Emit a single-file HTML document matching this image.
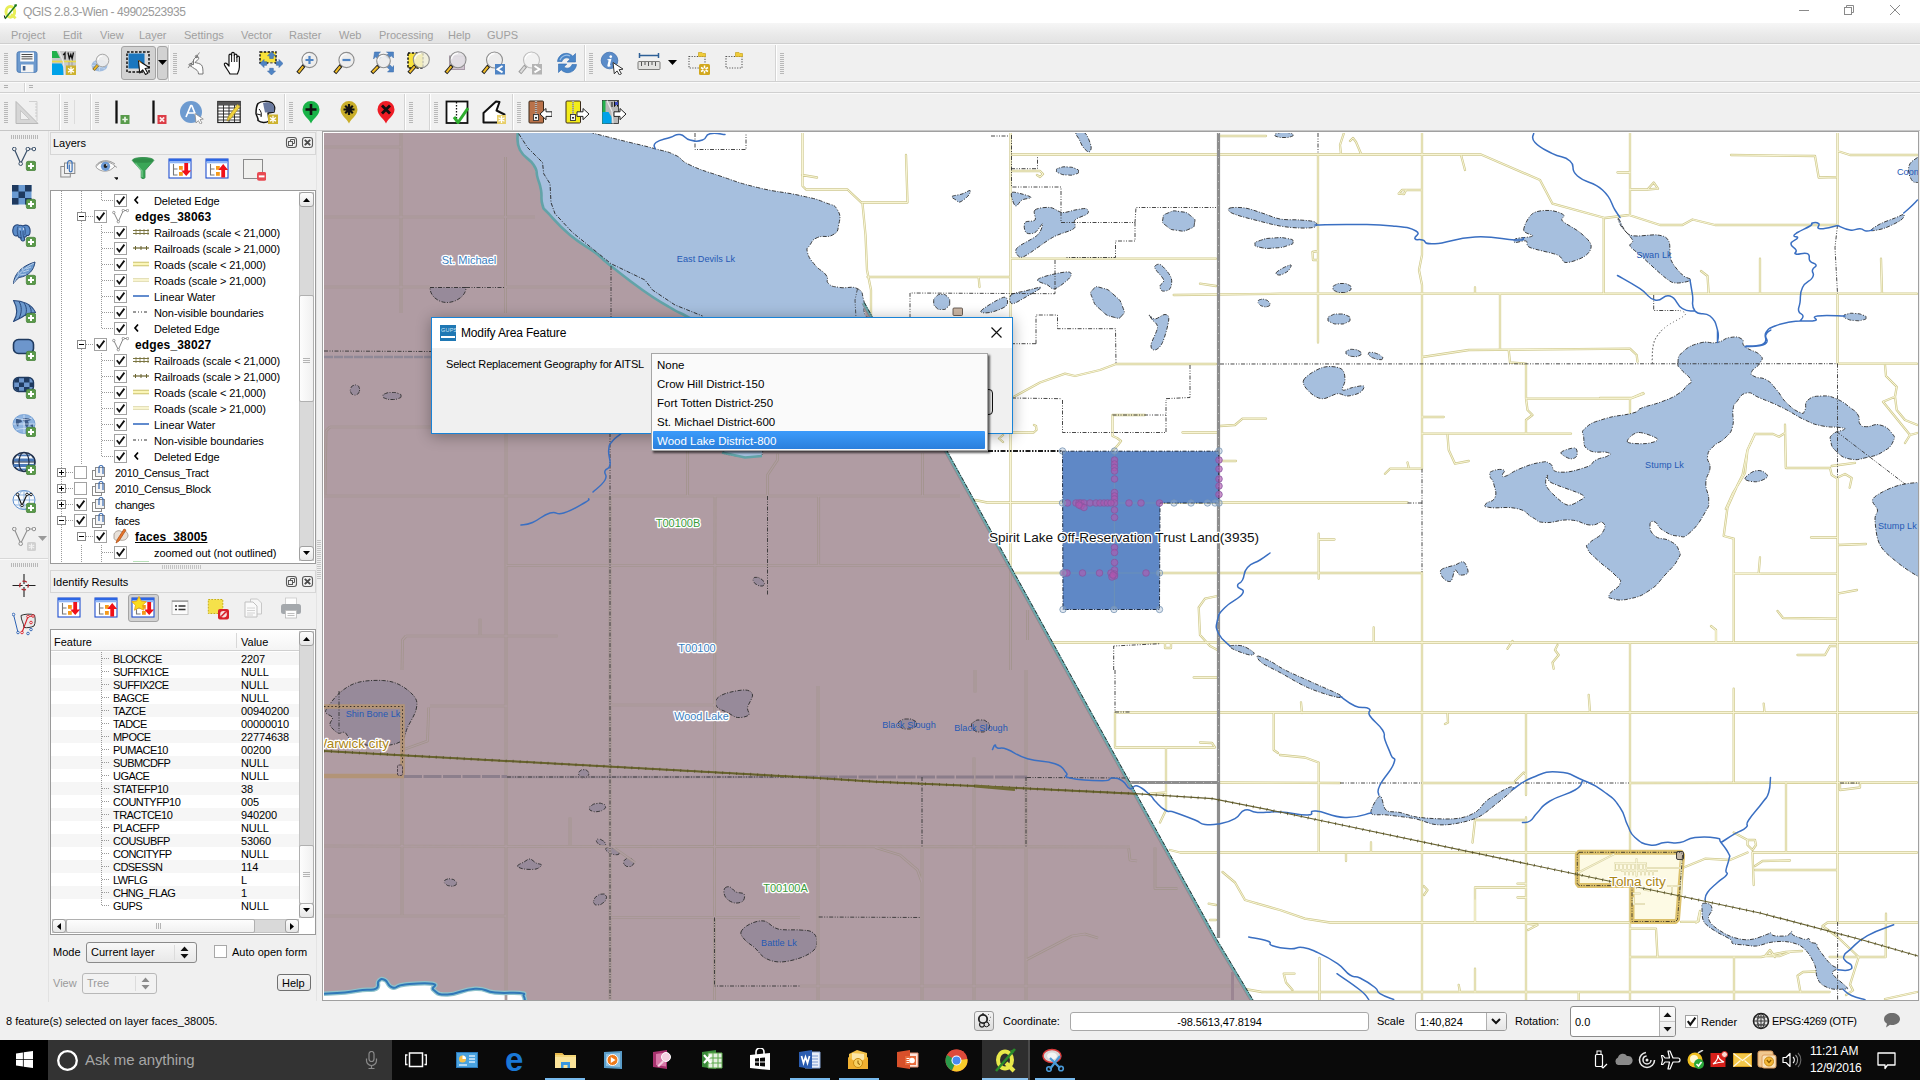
<!DOCTYPE html>
<html><head><meta charset="utf-8"><title>QGIS 2.8.3-Wien - 49902523935</title>
<style>
html,body{margin:0;padding:0;width:1920px;height:1080px;overflow:hidden;background:#f0f0f0;}
body{font-family:"Liberation Sans",sans-serif;font-size:11px;color:#000;position:relative;}
.abs{position:absolute;}
.t{position:absolute;white-space:nowrap;line-height:14px;}
#titlebar{left:0;top:0;width:1920px;height:23px;background:#fff;}
#menubar{left:0;top:23px;width:1920px;height:20px;background:linear-gradient(#f6f6f6,#e9e9e9 60%,#e3e3e3);border-bottom:1px solid #cfcfcf;}
#menubar span{position:absolute;top:5px;color:#a0a0a0;font-size:11px;line-height:14px;}
.hl{position:absolute;height:1px;}
.vl{position:absolute;width:1px;}
.grip{position:absolute;width:4px;background:repeating-linear-gradient(to bottom,#b8b8b8 0,#b8b8b8 1px,transparent 1px,transparent 2px);}
.ic{position:absolute;width:24px;height:24px;}
.ic svg{display:block;}
.pressed{position:absolute;background:#d2d2d2;border:1px solid #a4a4a4;border-radius:3px;box-sizing:border-box;}
.cb{position:absolute;width:13px;height:13px;box-sizing:border-box;border:1px solid #a2a2a2;background:#fff;}
.cb.on::after{content:"";position:absolute;left:1px;top:1px;width:9px;height:9px;background:
 linear-gradient(45deg,transparent 0,transparent 100%);}
.row{position:absolute;left:0;height:16px;white-space:nowrap;}
.sbtn{position:absolute;box-sizing:border-box;border:1px solid #a0a0a0;border-radius:3px;background:linear-gradient(#fdfdfd,#e6e6e6);}
#taskbar{left:0;top:1040px;width:1920px;height:40px;background:#0a0a0a;}
</style></head><body>

<div class="abs" id="titlebar"></div>
<div class="ic" style="left:3px;top:3px;width:16px;height:17px"><svg width="16" height="17" viewBox="0 0 24 24"><ellipse cx="11" cy="12.500" rx="6.500" ry="8" fill="none" stroke="#e8ee58" stroke-width="4.500"/><path d="M12 16l7 6" stroke="#e8ee58" stroke-width="4"/><path d="M3 23L20 2" stroke="#1e7a1e" stroke-width="2.200"/><path d="M21 1l-5 1 3.500 3.500z" fill="#1e7a1e"/><path d="M3 22l-1 -4" stroke="#111" stroke-width="1.500"/></svg></div>
<div class="t" style="left:23px;top:5px;font-size:12px;line-height:15px;color:#9a9a9a;letter-spacing:-0.45px">QGIS 2.8.3-Wien - 49902523935</div>
<svg class="abs" style="left:1780px;top:0" width="140" height="23"><g stroke="#8a8a8a" stroke-width="1" fill="none"><path d="M19 10.5h10"/><rect x="64.5" y="7.5" width="7" height="7"/><path d="M66.500 7.500v-2h7v7h-2"/><path d="M110 5l10 10M120 5l-10 10"/></g></svg>
<div class="abs" id="menubar">
<span style="left:11px">Project</span>
<span style="left:63px">Edit</span>
<span style="left:100px">View</span>
<span style="left:139px">Layer</span>
<span style="left:184px">Settings</span>
<span style="left:241px">Vector</span>
<span style="left:289px">Raster</span>
<span style="left:339px">Web</span>
<span style="left:379px">Processing</span>
<span style="left:448px">Help</span>
<span style="left:487px">GUPS</span>
</div>
<div class="hl" style="left:0;top:44px;width:1920px;background:#fbfbfb"></div>
<div class="hl" style="left:0;top:81px;width:1920px;background:#d0d0d0"></div>
<div class="hl" style="left:0;top:82px;width:1920px;background:#fafafa"></div>
<div class="grip" style="left:4px;top:53px;height:22px"></div>
<div class="ic" style="left:15px;top:51px;width:24px;height:24px"><svg width="24" height="24" viewBox="0 0 24 24"><rect x="2" y="0.800" width="20" height="20.500" rx="2" fill="#6d9ace" stroke="#4c7bb4" stroke-width="1"/><rect x="5.200" y="1.500" width="13.800" height="9" fill="#fbfbfb"/><path d="M6.500 3.500h11M6.500 5.700h11M6.500 7.900h11" stroke="#333" stroke-width="0.900"/><rect x="6" y="13.500" width="12.500" height="7.800" fill="#f4f4f4"/><rect x="7.800" y="15" width="2.600" height="4.500" fill="#3d5f90"/></svg></div>
<div class="ic" style="left:52px;top:51px;width:24px;height:24px"><svg width="24" height="24" viewBox="0 0 24 24"><rect x="0" y="0" width="24" height="24" fill="#c9c9c9"/><path d="M0 0h4.500L8 7H0z" fill="#22b14c"/><path d="M0 12.500h9.500l2 4v7.500H0z" fill="#00a2e8"/><path d="M0 10.500h24" stroke="#e8d84a" stroke-width="1.700"/><path d="M7 0l4.500 11 1 13" fill="none" stroke="#e8e8e8" stroke-width="1.200"/><path d="M13 8.500V2l-1.800 2M16 1.500l1.300 6 1.500-4 1.300 4 1.400-6" fill="none" stroke="#111" stroke-width="1.300"/><path d="M17 11v4M20 11v4" stroke="#888" stroke-width="0.700"/><rect x="14" y="14.500" width="10" height="9.500" fill="#cdb22e"/><path d="M19 15.800v7M16 17.500l6 3.600M22 17.500l-6 3.600" stroke="#fff" stroke-width="1.300"/></svg></div>
<div class="ic" style="left:89px;top:51px;width:24px;height:24px"><svg width="24" height="24" viewBox="0 0 24 24"><ellipse cx="10.500" cy="14.500" rx="8" ry="6" fill="#8db0dc" opacity="0.800"/><path d="M3 14.500h15M10.500 8.500v12M5 11c3 2 8 2 11 0M5 18c3-2 8-2 11 0" stroke="#c8dcf0" fill="none" stroke-width="0.800"/><path d="M9 14L4.500 19" stroke="#7a6a3a" stroke-width="3.200"/><path d="M8.600 14.400L5 18.500" stroke="#f0bc28" stroke-width="1.700"/><circle cx="13.500" cy="9.500" r="6.300" fill="#ededed" fill-opacity="0.920" stroke="#a8a8a8" stroke-width="1"/><path d="M9 9a4.500 4.500 0 0 1 4.500 -4" fill="none" stroke="#fff" stroke-width="1.200"/></svg></div>
<div class="pressed" style="left:121px;top:46px;width:35px;height:34px"></div>
<div class="pressed" style="left:157px;top:46px;width:11px;height:34px"></div>
<div class="ic" style="left:126px;top:51px;width:24px;height:24px"><svg width="24" height="24" viewBox="0 0 24 24"><rect x="1" y="1" width="22" height="20" fill="#d9d9d9" stroke="#111" stroke-width="1.500" stroke-dasharray="2.600 1.400"/><rect x="2.500" y="2.500" width="16" height="15" fill="#1a76be"/><path d="M12.500 9.500l1.200 12.500 3-3.200 2.800 4.700 2.300-1.300-2.700-4.700 4.400-0.700z" fill="#fff" stroke="#111" stroke-width="1.100" stroke-linejoin="round"/><path d="M12.500 9.500l3 2.500" stroke="#f0a030" stroke-width="1"/></svg></div>
<svg class="abs" style="left:158px;top:60px" width="9" height="5"><path d="M0 0h9l-4.500 5z" fill="#000"/></svg>
<div class="vl" style="left:168px;top:45px;height:36px;background:#d4d4d4"></div><div class="vl" style="left:169px;top:45px;height:36px;background:#fff"></div>
<div class="grip" style="left:173px;top:53px;height:22px"></div>
<div class="ic" style="left:185px;top:51px;width:24px;height:24px"><svg width="24" height="24" viewBox="0 0 24 24"><path d="M3 17L14.500 1.500" stroke="#7a7a7a" stroke-width="0.900"/><path d="M8.500 9c1-2 3-3.500 4.500-3 1.200 0.400 0.800 2-0.300 2.800L10 11.500c2 0.500 5 1 6.500 2.500 1.500 1.500 1.500 6 1.500 9h-4.500c0-2-1-3.500-2.500-4.500C9 17.500 6 15 4.500 14.500c-1-0.500-0.500-2 1-1.800l3 1z" fill="#fdfdfd" stroke="#6a6a6a" stroke-width="0.900" stroke-linejoin="round"/><circle cx="11.500" cy="5.500" r="1.200" fill="none" stroke="#555" stroke-width="0.700"/><circle cx="6" cy="13.500" r="1" fill="none" stroke="#555" stroke-width="0.700"/></svg></div>
<div class="ic" style="left:222px;top:51px;width:24px;height:24px"><svg width="24" height="24" viewBox="0 0 24 24"><path d="M8 23c-1.500-3-4-6-5.500-9-0.700-1.500 1-2.500 2.200-1.500L7 15V4.500c0-1.800 2.600-1.800 2.600 0V2.800c0-1.800 2.700-1.800 2.700 0v1.500c0-1.700 2.600-1.700 2.600 0v2c0-1.600 2.500-1.600 2.500 0V16c0 3-1 5-2 7z" fill="#fff" stroke="#111" stroke-width="1.200" stroke-linejoin="round"/><path d="M9.600 4.500V11M12.300 4V11M14.900 6V11" stroke="#111" stroke-width="1"/></svg></div>
<div class="ic" style="left:259px;top:51px;width:24px;height:24px"><svg width="24" height="24" viewBox="0 0 24 24"><rect x="1" y="1" width="16" height="11" fill="#f8e23a" stroke="#111" stroke-width="1.400" stroke-dasharray="2.400 1.400"/><path d="M12.500 0.800l4 4h-2.200v2.700h-3.600V4.800H8.500z M12.500 24l4-4h-2.200v-2.700h-3.600V20H8.500z M1 12.500l4-4v2.200h2.700v3.600H5v2.200z M24 12.500l-4-4v2.200h-2.700v3.600H20v2.200z" fill="#4f84c4" stroke="#3a6aa8" stroke-width="0.600"/><path d="M9 11.500h7v2H9z" fill="#f0f0f0" opacity="0.600"/></svg></div>
<div class="ic" style="left:296px;top:51px;width:24px;height:24px"><svg width="24" height="24" viewBox="0 0 24 24"><path d="M8.3 14.2L1.800 22" stroke="#1a1a1a" stroke-width="3.800" stroke-linecap="butt"/><path d="M7.2 15.3L2.500 21.300" stroke="#f0bc28" stroke-width="2.100"/><circle cx="13.5" cy="9" r="7.6" fill="#ececec" fill-opacity="0.85" stroke="#8e8e8e" stroke-width="1.100"/><path d="M7.4 8.5a6.1 6.1 0 0 1 6.1 -5.6" fill="none" stroke="#fff" stroke-width="1.300" opacity="0.900"/><path d="M13.500 5v8M9.500 9h8" stroke="#4f84c4" stroke-width="2.200"/></svg></div>
<div class="ic" style="left:333px;top:51px;width:24px;height:24px"><svg width="24" height="24" viewBox="0 0 24 24"><path d="M8.3 14.2L1.800 22" stroke="#1a1a1a" stroke-width="3.800" stroke-linecap="butt"/><path d="M7.2 15.3L2.500 21.300" stroke="#f0bc28" stroke-width="2.100"/><circle cx="13.5" cy="9" r="7.6" fill="#ececec" fill-opacity="0.85" stroke="#8e8e8e" stroke-width="1.100"/><path d="M7.4 8.5a6.1 6.1 0 0 1 6.1 -5.6" fill="none" stroke="#fff" stroke-width="1.300" opacity="0.900"/><path d="M9.500 9h8" stroke="#4f84c4" stroke-width="2.200"/></svg></div>
<div class="ic" style="left:370px;top:51px;width:24px;height:24px"><svg width="24" height="24" viewBox="0 0 24 24"><path d="M4.500 0.500h6L8.300 2.700l3 3-2.600 2.600-3-3L3.500 7.500z M23.500 0.500v6L21.300 4.300l-3 3-2.600-2.600 3-3L16.500 0.500z M23.500 20.500h-6l2.200-2.200-3-3 2.600-2.600 3 3 2.200-2.200z" fill="#4f84c4" stroke="#3a6aa8" stroke-width="0.500" transform="translate(0 0.500)"/><path d="M8.9 14.6L1.800 22" stroke="#1a1a1a" stroke-width="3.800" stroke-linecap="butt"/><path d="M7.8 15.7L2.500 21.300" stroke="#f0bc28" stroke-width="2.100"/><circle cx="13.5" cy="10" r="6.8" fill="#ececec" fill-opacity="0.85" stroke="#8e8e8e" stroke-width="1.100"/><path d="M8.2 9.5a5.3 5.3 0 0 1 5.3 -4.8" fill="none" stroke="#fff" stroke-width="1.300" opacity="0.900"/></svg></div>
<div class="ic" style="left:407px;top:51px;width:24px;height:24px"><svg width="24" height="24" viewBox="0 0 24 24"><rect x="1" y="2" width="15" height="15" fill="#f8e23a" stroke="#111" stroke-width="1.500" stroke-dasharray="2.400 1.400"/><path d="M8.8 14.3L1.800 22" stroke="#1a1a1a" stroke-width="3.800" stroke-linecap="butt"/><path d="M7.7 15.4L2.500 21.300" stroke="#f0bc28" stroke-width="2.100"/><circle cx="14.3" cy="8.8" r="8" fill="#f0efd8" fill-opacity="0.82" stroke="#8e8e8e" stroke-width="1.100"/><path d="M7.8 8.3a6.5 6.5 0 0 1 6.5 -6.0" fill="none" stroke="#fff" stroke-width="1.300" opacity="0.900"/></svg></div>
<div class="ic" style="left:444px;top:51px;width:24px;height:24px"><svg width="24" height="24" viewBox="0 0 24 24"><rect x="5.500" y="5" width="15" height="13.500" fill="#d0c4d0" stroke="#a89aa8" stroke-width="1"/><path d="M8.5 14.3L1.800 22" stroke="#1a1a1a" stroke-width="3.800" stroke-linecap="butt"/><path d="M7.4 15.4L2.500 21.300" stroke="#f0bc28" stroke-width="2.100"/><circle cx="14" cy="8.8" r="8" fill="#e4e2e6" fill-opacity="0.85" stroke="#8e8e8e" stroke-width="1.100"/><path d="M7.5 8.3a6.5 6.5 0 0 1 6.5 -6.0" fill="none" stroke="#fff" stroke-width="1.300" opacity="0.900"/></svg></div>
<div class="ic" style="left:481px;top:51px;width:24px;height:24px"><svg width="24" height="24" viewBox="0 0 24 24"><path d="M8.0 14.5L1.800 22" stroke="#1a1a1a" stroke-width="3.800" stroke-linecap="butt"/><path d="M6.9 15.6L2.500 21.300" stroke="#f0bc28" stroke-width="2.100"/><circle cx="13.5" cy="9" r="8" fill="#ececec" fill-opacity="0.85" stroke="#8e8e8e" stroke-width="1.100"/><path d="M7.0 8.5a6.5 6.5 0 0 1 6.5 -6.0" fill="none" stroke="#fff" stroke-width="1.300" opacity="0.900"/><rect x="14" y="13" width="10" height="10.500" fill="#4f84c4"/><path d="M21.500 15l-5 3.200 5 3.200" fill="none" stroke="#fff" stroke-width="1.900"/></svg></div>
<div class="ic" style="left:518px;top:51px;width:24px;height:24px"><svg width="24" height="24" viewBox="0 0 24 24"><path d="M8.0 14.5L1.800 22" stroke="#9a9a9a" stroke-width="3.800" stroke-linecap="butt"/><path d="M6.9 15.6L2.500 21.300" stroke="#dcdcdc" stroke-width="2.100"/><circle cx="13.5" cy="9" r="8" fill="#f2f2f2" fill-opacity="0.85" stroke="#bdbdbd" stroke-width="1.100"/><path d="M7.0 8.5a6.5 6.5 0 0 1 6.5 -6.0" fill="none" stroke="#fff" stroke-width="1.300" opacity="0.900"/><rect x="14" y="13" width="10" height="10.500" fill="#b4b4b4"/><path d="M16.500 15l5 3.200-5 3.200" fill="none" stroke="#fff" stroke-width="1.900"/></svg></div>
<div class="ic" style="left:555px;top:51px;width:24px;height:24px"><svg width="24" height="24" viewBox="0 0 24 24"><path d="M2.500 10.500C3 5 8 1.500 13 2.500c2 0.400 3.600 1.400 4.800 2.700L20.500 2.500V11h-8.300l2.800-2.900c-2.500-2.300-7-1.300-8 2.400z" fill="#4a86c8" stroke="#2f6aae" stroke-width="0.600"/><path d="M21.500 13.500C21 19 16 22.500 11 21.500c-2-0.400-3.600-1.400-4.800-2.700L3.500 21.500V13h8.300L9 15.900c2.500 2.300 7 1.300 8-2.400z" fill="#4a86c8" stroke="#2f6aae" stroke-width="0.600"/><path d="M5 9c1.500-4 6-6 10-4" fill="none" stroke="#9cc0e8" stroke-width="1.200"/></svg></div>
<div class="vl" style="left:584px;top:45px;height:36px;background:#d4d4d4"></div><div class="vl" style="left:585px;top:45px;height:36px;background:#fff"></div>
<div class="grip" style="left:589px;top:53px;height:22px"></div>
<div class="ic" style="left:600px;top:51px;width:24px;height:24px"><svg width="24" height="24" viewBox="0 0 24 24"><circle cx="9.500" cy="9.500" r="8.300" fill="#5b8cc9" stroke="#3f6fae" stroke-width="0.800"/><path d="M10.800 4.200a1.400 1.400 0 1 1-0.100 0zM7.500 8.200l4-0.500-1.600 6.300c-0.200 0.800 0.500 0.800 1.300 0.200l-0.200 0.900c-1.500 1-4 1.100-3.600-0.900l1.200-4.800-1.300-0.300z" fill="#fff"/><path d="M13 11.500l1.300 11.300 2.700-2.900 2.400 4 2-1.200-2.300-4 3.900-0.600z" fill="#fff" stroke="#333" stroke-width="1" stroke-linejoin="round"/></svg></div>
<div class="ic" style="left:637px;top:51px;width:24px;height:24px"><svg width="24" height="24" viewBox="0 0 24 24"><path d="M2.500 4.500h19M2.500 2v5M21.500 2v5" stroke="#2d5f96" stroke-width="1.500" fill="none"/><rect x="1" y="10.500" width="22" height="8" rx="1" fill="#e2e2e0" stroke="#7a7a78" stroke-width="1"/><path d="M4.500 11v4M8 11v3M11.500 11v4M15 11v3M18.500 11v4" stroke="#555" stroke-width="1"/></svg></div>
<div class="ic" style="left:688px;top:51px;width:24px;height:24px"><svg width="24" height="24" viewBox="0 0 24 24"><rect x="1" y="5.500" width="16" height="11.500" fill="none" stroke="#555" stroke-width="1.100" stroke-dasharray="1.200 1.400"/><path d="M10.500 5.500V1.500h3.500l1 1h2.500v3z" fill="#f0cc3a" stroke="#c8a41e" stroke-width="0.700"/><rect x="11" y="13" width="11" height="11" rx="1.500" fill="#d2a81e"/><path d="M16.500 14.500v8M13 16.500l7 4M20 16.500l-7 4" stroke="#fff" stroke-width="1.500"/><circle cx="16.500" cy="18.500" r="1.300" fill="#d2a81e"/></svg></div>
<div class="ic" style="left:725px;top:51px;width:24px;height:24px"><svg width="24" height="24" viewBox="0 0 24 24"><rect x="1" y="5.500" width="16" height="11.500" fill="none" stroke="#555" stroke-width="1.100" stroke-dasharray="1.200 1.400"/><path d="M10.500 5.500V1.500h3.500l1 1h2.500v3z" fill="#f0cc3a" stroke="#c8a41e" stroke-width="0.700"/></svg></div>
<svg class="abs" style="left:668px;top:60px" width="9" height="5"><path d="M0 0h9l-4.500 5z" fill="#000"/></svg>
<div class="vl" style="left:775px;top:45px;height:36px;background:#d4d4d4"></div><div class="vl" style="left:776px;top:45px;height:36px;background:#fff"></div>
<div class="grip" style="left:780px;top:53px;height:22px"></div>
<div class="hl" style="left:0;top:92px;width:1920px;background:#d0d0d0"></div>
<div class="hl" style="left:0;top:93px;width:1920px;background:#fafafa"></div>
<div class="vl" style="left:24px;top:83px;height:9px;background:#d4d4d4"></div><div class="vl" style="left:25px;top:83px;height:9px;background:#fff"></div>
<div class="hl" style="left:4px;top:85px;width:4px;background:#b0b0b0"></div><div class="hl" style="left:4px;top:87px;width:4px;background:#b0b0b0"></div>
<div class="hl" style="left:29px;top:85px;width:4px;background:#b0b0b0"></div><div class="hl" style="left:29px;top:87px;width:4px;background:#b0b0b0"></div>
<div class="hl" style="left:0;top:130px;width:1920px;background:#c6c6c6"></div>
<div class="grip" style="left:4px;top:102px;height:22px"></div>
<div class="ic" style="left:15px;top:100px;width:24px;height:24px"><svg width="24" height="24" viewBox="0 0 24 24"><path d="M1 23.500V1.500L23 23.500z" fill="#d6d6d6" stroke="#b8b8b8" stroke-width="1"/><path d="M5.500 19.500v-9l9 9z" fill="#f0f0f0" stroke="#c0c0c0" stroke-width="0.800"/><path d="M14 1.500h8V21" fill="none" stroke="#cfcfcf" stroke-width="1"/><path d="M20 4h2M20 7h2M20 10h2M20 13h2M20 16h2" stroke="#c4c4c4" stroke-width="0.800"/></svg></div>
<div class="vl" style="left:59px;top:94px;height:36px;background:#d4d4d4"></div><div class="vl" style="left:60px;top:94px;height:36px;background:#fff"></div>
<div class="grip" style="left:64px;top:102px;height:22px"></div>
<div class="vl" style="left:74px;top:100px;height:24px;background:#dcdcdc"></div>
<div class="vl" style="left:90px;top:94px;height:36px;background:#d4d4d4"></div><div class="vl" style="left:91px;top:94px;height:36px;background:#fff"></div>
<div class="grip" style="left:95px;top:102px;height:22px"></div>
<div class="ic" style="left:110px;top:100px;width:24px;height:24px"><svg width="24" height="24" viewBox="0 0 24 24"><path d="M6.500 0.500v23" stroke="#111" stroke-width="2.300"/><rect x="10.500" y="15" width="9" height="9" fill="#579a4a"/><path d="M15 16.800v5.400M12.300 19.500h5.400" stroke="#e8f4e4" stroke-width="1.700"/></svg></div>
<div class="ic" style="left:147px;top:100px;width:24px;height:24px"><svg width="24" height="24" viewBox="0 0 24 24"><path d="M6.500 0.500v23" stroke="#111" stroke-width="2.300"/><rect x="10.500" y="15" width="9" height="9" fill="#dc3c46"/><path d="M12.800 17.300l4.400 4.400M17.200 17.300l-4.400 4.400" stroke="#fbe8e8" stroke-width="1.700"/></svg></div>
<div class="ic" style="left:180px;top:100px;width:24px;height:24px"><svg width="24" height="24" viewBox="0 0 24 24"><circle cx="11" cy="12" r="11" fill="#6e9bd0"/><path d="M6 17L10.800 5.500h1L16.500 17M7.800 13h7" fill="none" stroke="#fff" stroke-width="1.700" stroke-linejoin="round"/><path d="M15 13.500l1 9.500 2.300-2.400 2 3.400 1.700-1-2-3.400 3.300-0.500z" fill="#fff" stroke="#8a8a8a" stroke-width="0.800" stroke-linejoin="round"/></svg></div>
<div class="ic" style="left:217px;top:100px;width:24px;height:24px"><svg width="24" height="24" viewBox="0 0 24 24"><rect x="0.800" y="1.500" width="22.400" height="21" fill="#fff" stroke="#222" stroke-width="1.200"/><path d="M0.800 5h22.400M0.800 8h22.400M0.800 11h22.400M0.800 14h22.400M0.800 17h22.400M0.800 20h22.400M6.500 1.500v21M12 1.500v21M17.500 1.500v21" stroke="#222" stroke-width="0.900"/><path d="M0.800 1.500h22.400V5H0.800z" fill="#555"/><path d="M20.500 4.500l2.500 2-9.500 12.500-3.500 2 1-4z" fill="#f0d23c" stroke="#a8902a" stroke-width="0.700"/><path d="M11 17l2.500 2" stroke="#a8902a" stroke-width="0.700"/></svg></div>
<div class="ic" style="left:254px;top:100px;width:24px;height:24px"><svg width="24" height="24" viewBox="0 0 24 24"><path d="M4 3.500c3-2.500 10-3 14-0.500 2.500 2 3 6 2 9l-6 1 1 8c-3 2-8 2-11-0.500 0.500-3-1.500-4-2-7 0-3 0-7 2-10z" fill="#fff" stroke="#111" stroke-width="1.500" stroke-linejoin="round"/><path d="M9 3c4-1.500 8-0.500 10 1.500 1.500 2 1.500 5 1 7.500l-9 0.500z" fill="#6a7aa0"/><path d="M5 9c2 2 3 5 2 8M3 14l4 1" fill="none" stroke="#111" stroke-width="1"/><rect x="14" y="14.500" width="10" height="9.500" fill="#cdb22e"/><path d="M19 15.800v7M16 17.500l6 3.600M22 17.500l-6 3.600" stroke="#fff" stroke-width="1.300"/></svg></div>
<div class="vl" style="left:284px;top:94px;height:36px;background:#d4d4d4"></div><div class="vl" style="left:285px;top:94px;height:36px;background:#fff"></div>
<div class="grip" style="left:289px;top:102px;height:22px"></div>
<div class="ic" style="left:299px;top:100px;width:24px;height:24px"><svg width="24" height="24" viewBox="0 0 24 24"><path d="M12 23.500C10 18.500 3.500 15.500 3.500 9.500a8.500 8.500 0 0 1 17 0c0 6-6.500 9-8.500 14z" fill="#19b348"/><path d="M12 4v11M6.500 9.500h11" stroke="#111" stroke-width="2.600"/></svg></div>
<div class="ic" style="left:337px;top:100px;width:24px;height:24px"><svg width="24" height="24" viewBox="0 0 24 24"><path d="M12 23.500C10 18.500 3.500 15.500 3.500 9.500a8.500 8.500 0 0 1 17 0c0 6-6.500 9-8.500 14z" fill="#c9ae2a"/><path d="M12 4v11M6.500 9.500h11M8.200 5.700l7.600 7.600M15.800 5.700l-7.600 7.600" stroke="#111" stroke-width="2.200"/></svg></div>
<div class="ic" style="left:374px;top:100px;width:24px;height:24px"><svg width="24" height="24" viewBox="0 0 24 24"><path d="M12 23.500C10 18.500 3.500 15.500 3.500 9.500a8.500 8.500 0 0 1 17 0c0 6-6.500 9-8.500 14z" fill="#ee1c25"/><path d="M8 5.500l8 8M16 5.500l-8 8" stroke="#111" stroke-width="2.800"/></svg></div>
<div class="vl" style="left:404px;top:94px;height:36px;background:#d4d4d4"></div><div class="vl" style="left:405px;top:94px;height:36px;background:#fff"></div>
<div class="grip" style="left:409px;top:102px;height:22px"></div>
<div class="vl" style="left:429px;top:94px;height:36px;background:#d4d4d4"></div><div class="vl" style="left:430px;top:94px;height:36px;background:#fff"></div>
<div class="grip" style="left:434px;top:102px;height:22px"></div>
<div class="ic" style="left:445px;top:100px;width:24px;height:24px"><svg width="24" height="24" viewBox="0 0 24 24"><rect x="1.500" y="1.500" width="21" height="21.500" fill="#fff" stroke="#111" stroke-width="1.800"/><path d="M11.500 2v21" stroke="#111" stroke-width="1.300" stroke-dasharray="1.500 1.500"/><path d="M9 17l4 5.500L23 8" fill="none" stroke="#2fae2f" stroke-width="3"/></svg></div>
<div class="ic" style="left:482px;top:100px;width:24px;height:24px"><svg width="24" height="24" viewBox="0 0 24 24"><path d="M1.500 22.500V13L14 1.500l3.500 0.500-3 8.500 8 4v8z" fill="#fff" stroke="#111" stroke-width="2" stroke-linejoin="round"/><rect x="15" y="15" width="9" height="9" fill="#e8cf6a"/><path d="M19.500 16v7M16.500 17.700l6 3.600M22.500 17.700l-6 3.600" stroke="#fff" stroke-width="1.300"/></svg></div>
<div class="vl" style="left:512px;top:94px;height:36px;background:#d4d4d4"></div><div class="vl" style="left:513px;top:94px;height:36px;background:#fff"></div>
<div class="grip" style="left:517px;top:102px;height:22px"></div>
<div class="ic" style="left:528px;top:100px;width:24px;height:24px"><svg width="24" height="24" viewBox="0 0 24 24"><rect x="1" y="1" width="14.500" height="22" rx="1" fill="#b9724a" stroke="#3a2a1a" stroke-width="1"/><path d="M8 1v14" stroke="#e8e8e8" stroke-width="2.200" stroke-dasharray="1 1"/><path d="M8 1v14" stroke="#555" stroke-width="0.700"/><rect x="5.500" y="14.500" width="5" height="6" fill="#f4f4f4" stroke="#333" stroke-width="0.900"/><rect x="7" y="17" width="2" height="1.600" fill="#333"/><path d="M12 14l6-5.500v3.300h6v4.600h-6v3.300z" fill="#fff" stroke="#222" stroke-width="1"/></svg></div>
<div class="ic" style="left:565px;top:100px;width:24px;height:24px"><svg width="24" height="24" viewBox="0 0 24 24"><rect x="1" y="1" width="14.500" height="22" rx="1" fill="#f3ec1a" stroke="#3a2a1a" stroke-width="1"/><path d="M8 1v14" stroke="#e8e8e8" stroke-width="2.200" stroke-dasharray="1 1"/><path d="M8 1v14" stroke="#555" stroke-width="0.700"/><rect x="5.500" y="14.500" width="5" height="6" fill="#f4f4f4" stroke="#333" stroke-width="0.900"/><rect x="7" y="17" width="2" height="1.600" fill="#333"/><path d="M24 14l-6-5.500v3.300h-6v4.600h6v3.300z" fill="#fff" stroke="#222" stroke-width="1"/></svg></div>
<div class="ic" style="left:602px;top:100px;width:24px;height:24px"><svg width="24" height="24" viewBox="0 0 24 24"><rect x="0.500" y="0.500" width="16" height="23" fill="#b8b8b8" stroke="#222" stroke-width="0.800"/><path d="M0.500 0.500h3v23h-3z" fill="#22b14c"/><path d="M0.500 12h6l3 5v6.500h-9z" fill="#00a2e8"/><path d="M5 0.500l5 11 1 12" fill="none" stroke="#e8e8e8" stroke-width="1.200"/><path d="M10 7V2M12.500 1.500v5l3-5v5" stroke="#111" stroke-width="1" fill="none"/><rect x="13" y="2" width="3" height="3" fill="#3a4ac0"/><path d="M24 14l-6-5.500v3.300h-6v4.600h6v3.300z" fill="#fff" stroke="#222" stroke-width="1"/></svg></div>

<div class="abs" style="left:11px;top:135px;width:27px;height:4px;background:repeating-linear-gradient(to right,#b8b8b8 0,#b8b8b8 1px,transparent 1px,transparent 2px)"></div>
<div class="ic" style="left:12px;top:147px;width:24px;height:24px"><svg width="24" height="24" viewBox="0 0 24 24"><path d="M2.300 2l6.400 14.500L15.800 2h6" fill="none" stroke="#3a506a" stroke-width="1.200"/><g fill="#f4f4f4" stroke="#3a506a" stroke-width="1"><circle cx="2.300" cy="2" r="1.800"/><circle cx="15.800" cy="2" r="1.800"/><circle cx="21.900" cy="2" r="1.800"/><circle cx="8.700" cy="16.700" r="1.800"/></g><rect x="14.300" y="14.300" width="9.400" height="9.400" rx="1.800" fill="#5a9a4a" stroke="#447c38" stroke-width="0.700"/><path d="M19 16v6M16 19h6" stroke="#fff" stroke-width="2"/></svg></div>
<div class="ic" style="left:12px;top:185px;width:24px;height:24px"><svg width="24" height="24" viewBox="0 0 24 24"><rect x="0" y="0" width="19.500" height="19.500" fill="#6b9bd2"/><path d="M0 0h6.500v6.500H0zM13 0h6.500v6.500H13zM6.500 6.500H13V13H6.500zM0 13h6.500v6.500H0zM13 13h6.500v6.500H13z" fill="#1f3a5f"/><rect x="14.300" y="14.300" width="9.400" height="9.400" rx="1.800" fill="#5a9a4a" stroke="#447c38" stroke-width="0.700"/><path d="M19 16v6M16 19h6" stroke="#fff" stroke-width="2"/></svg></div>
<div class="ic" style="left:12px;top:223px;width:24px;height:24px"><svg width="24" height="24" viewBox="0 0 24 24"><path d="M3 2.500c-2.500 1.500-3 7-1 9.500 1 1.300 2.500 1.200 3.300 0.300L6 13c0.500 1.500 1.500 2 2.500 1.500l0.500 2c0.300 1.700 2.800 2 3.500 0.500 0.500-1-0.500-1.500-0.500-3 1.500 0.500 2.500-0.500 2.800-1.800 1.200 0.800 2.500 0 3-1.700 0.800-3 0-7-2.300-8-2-1-3.500 0-4.500 0.500C9.500 2 8.500 2 7.500 2.500 6 1.500 4.500 1.500 3 2.500z" fill="#5b8cc9" stroke="#27477a" stroke-width="1.100" stroke-linejoin="round"/><path d="M6 3.500c-1 2.500-1 6 0 8.500M12.500 4c1 2.500 1 6 0.300 8M8.500 8c0 3 0.500 5 1 7.500M11 8c0 2 0 4 0.500 6" fill="none" stroke="#27477a" stroke-width="0.800"/><circle cx="8" cy="6" r="0.700" fill="#fff"/><circle cx="11.500" cy="6" r="0.700" fill="#fff"/><rect x="14.300" y="14.300" width="9.400" height="9.400" rx="1.800" fill="#5a9a4a" stroke="#447c38" stroke-width="0.700"/><path d="M19 16v6M16 19h6" stroke="#fff" stroke-width="2"/></svg></div>
<div class="ic" style="left:12px;top:261px;width:24px;height:24px"><svg width="24" height="24" viewBox="0 0 24 24"><path d="M1.500 22.500C2 15 7 6 23 1c-1 8-6 14-16 15.500C5 18 3 20.500 1.500 22.500z" fill="#6d9ace" stroke="#27477a" stroke-width="1" stroke-linejoin="round"/><path d="M2 22C5 14 12 7 22 2M8 14l6-1M11 11l6-2M14 8l5-2M6 13l1-4M10 9l1-3" fill="none" stroke="#d8e6f6" stroke-width="0.700"/><rect x="14.300" y="14.300" width="9.400" height="9.400" rx="1.800" fill="#5a9a4a" stroke="#447c38" stroke-width="0.700"/><path d="M19 16v6M16 19h6" stroke="#fff" stroke-width="2"/></svg></div>
<div class="ic" style="left:12px;top:299px;width:24px;height:24px"><svg width="24" height="24" viewBox="0 0 24 24"><path d="M1.500 1.500c8 0 18 3 22 12-5 0-10 2-14 5l-8 4c4-6 4-14 0-21z" fill="#6d9ace" stroke="#27477a" stroke-width="1.100" stroke-linejoin="round"/><path d="M7 2.500c3 5 3 11 0 17M12 4c3 4 3 9 1 13M17 6.500c2 2.500 2.500 5.500 2 8" fill="none" stroke="#27477a" stroke-width="1"/><rect x="14.300" y="14.300" width="9.400" height="9.400" rx="1.800" fill="#5a9a4a" stroke="#447c38" stroke-width="0.700"/><path d="M19 16v6M16 19h6" stroke="#fff" stroke-width="2"/></svg></div>
<div class="ic" style="left:12px;top:337px;width:24px;height:24px"><svg width="24" height="24" viewBox="0 0 24 24"><rect x="1.500" y="2.500" width="20" height="14" rx="5" fill="#6d96cc" stroke="#1f3a5f" stroke-width="1.600"/><rect x="14.300" y="14.300" width="9.400" height="9.400" rx="1.800" fill="#5a9a4a" stroke="#447c38" stroke-width="0.700"/><path d="M19 16v6M16 19h6" stroke="#fff" stroke-width="2"/></svg></div>
<div class="ic" style="left:12px;top:375px;width:24px;height:24px"><svg width="24" height="24" viewBox="0 0 24 24"><rect x="1.500" y="2.500" width="20" height="14" rx="5" fill="#6d96cc" stroke="#1f3a5f" stroke-width="1.400"/><path d="M2.500 5.500c1-2 2.500-2.500 4.500-2.500v4.500H2.300zM12 3h5.500v4.500H12zM7 7.500h5V12H7zM17.500 7.500h3.700V12h-3.700zM2.500 12H7v4c-2 0-4-1.500-4.500-4zM12 12h5.500v4H12z" fill="#1f3a5f"/><rect x="14.300" y="14.300" width="9.400" height="9.400" rx="1.800" fill="#5a9a4a" stroke="#447c38" stroke-width="0.700"/><path d="M19 16v6M16 19h6" stroke="#fff" stroke-width="2"/></svg></div>
<div class="ic" style="left:12px;top:413px;width:24px;height:24px"><svg width="24" height="24" viewBox="0 0 24 24"><ellipse cx="12" cy="11" rx="11" ry="9.500" fill="#8fb4e0"/><ellipse cx="12" cy="11" rx="11" ry="9.500" fill="none" stroke="#6a98d0" stroke-width="0.800"/><path d="M4 6h5l1 3-3 1-1 4-2-3zM11 5h6l2 2-3 1 1 3-2 4-2-3v-3l-2-1zM18 12l3-1v4z" fill="#2d4a78" opacity="0.850"/><path d="M1 11h22M12 1.500v19M4 5c5 2 11 2 16 0M4 17c5-2 11-2 16 0" fill="none" stroke="#dce8f6" stroke-width="0.700"/><rect x="14.300" y="14.300" width="9.400" height="9.400" rx="1.800" fill="#5a9a4a" stroke="#447c38" stroke-width="0.700"/><path d="M19 16v6M16 19h6" stroke="#fff" stroke-width="2"/></svg></div>
<div class="ic" style="left:12px;top:451px;width:24px;height:24px"><svg width="24" height="24" viewBox="0 0 24 24"><ellipse cx="12" cy="11" rx="11" ry="9.500" fill="#f4f8fc" stroke="#1f2f4a" stroke-width="1.600"/><path d="M2 7.500h20v3H2zM1.500 13h21v3h-21zM6 3.500h12v1.800H6zM6 17.500h12v1.800H6z" fill="#4c7ab8"/><ellipse cx="12" cy="11" rx="5" ry="9.500" fill="none" stroke="#1f2f4a" stroke-width="1.200"/><path d="M1 11h22" stroke="#1f2f4a" stroke-width="1"/><rect x="14.300" y="14.300" width="9.400" height="9.400" rx="1.800" fill="#5a9a4a" stroke="#447c38" stroke-width="0.700"/><path d="M19 16v6M16 19h6" stroke="#fff" stroke-width="2"/></svg></div>
<div class="ic" style="left:12px;top:489px;width:24px;height:24px"><svg width="24" height="24" viewBox="0 0 24 24"><ellipse cx="12" cy="11" rx="11" ry="9.500" fill="#f8fbfe" stroke="#5a8ccc" stroke-width="1"/><path d="M1 11h22M3 6h18M3 16h18M12 1.500v19" stroke="#7aa4d8" stroke-width="0.800"/><ellipse cx="12" cy="11" rx="5.500" ry="9.500" fill="none" stroke="#7aa4d8" stroke-width="0.800"/><path d="M5.500 5.500l4.500 11 5-11h4" fill="none" stroke="#111" stroke-width="1.100"/><g fill="#fff" stroke="#111" stroke-width="0.900"><circle cx="5.500" cy="5.500" r="1.300"/><circle cx="15" cy="5.500" r="1.300"/><circle cx="19" cy="5.500" r="1.300"/><circle cx="10" cy="16.500" r="1.300"/></g><rect x="14.300" y="14.300" width="9.400" height="9.400" rx="1.800" fill="#5a9a4a" stroke="#447c38" stroke-width="0.700"/><path d="M19 16v6M16 19h6" stroke="#fff" stroke-width="2"/></svg></div>
<div class="ic" style="left:12px;top:527px;width:24px;height:24px"><svg width="24" height="24" viewBox="0 0 24 24"><path d="M2.300 2l6.400 14.500L15.800 2h6" fill="none" stroke="#8e8e8e" stroke-width="1.100"/><g fill="#f4f4f4" stroke="#8e8e8e" stroke-width="1"><circle cx="2.300" cy="2" r="1.800"/><circle cx="15.800" cy="2" r="1.800"/><circle cx="21.900" cy="2" r="1.800"/><circle cx="8.700" cy="16.700" r="1.800"/></g><rect x="15" y="15" width="9" height="9" rx="1.500" fill="#d0d0d0"/><path d="M19.500 16.500v6M16.800 18l5.400 3M22.200 18l-5.400 3" stroke="#f2f2f2" stroke-width="1.100"/></svg></div>
<svg class="abs" style="left:38px;top:536px" width="9" height="5"><path d="M0 0h9l-4.500 5z" fill="#9a9a9a"/></svg>
<div class="abs" style="left:11px;top:563px;width:27px;height:4px;background:repeating-linear-gradient(to right,#b8b8b8 0,#b8b8b8 1px,transparent 1px,transparent 2px)"></div>
<div class="hl" style="left:0;top:558px;width:48px;background:#d8d8d8"></div><div class="hl" style="left:0;top:559px;width:48px;background:#fafafa"></div>
<div class="vl" style="left:48px;top:131px;height:871px;background:#e2e2e2"></div>
<div class="ic" style="left:12px;top:574px;width:24px;height:24px"><svg width="24" height="24" viewBox="0 0 24 24"><path d="M12 0v10M12 13v10M0.500 11.500h10M13.500 11.500h10" stroke="#222" stroke-width="1.100"/><circle cx="12" cy="11.500" r="4.300" fill="none" stroke="#b0282e" stroke-width="1.300" stroke-dasharray="4.500 2.300" stroke-dashoffset="2.200"/></svg></div>
<div class="ic" style="left:12px;top:612px;width:24px;height:24px"><svg width="24" height="24" viewBox="0 0 24 24"><path d="M9 3.500c3-1.500 10-2 13.500-0.500 1 4 1 8-0.500 11-3 1.500-7 2-10 1.500 0-4-3-7-3-12z" fill="#e8e8e8" stroke="#333" stroke-width="1"/><path d="M1.500 2.500L6 20.500" stroke="#2c62b4" stroke-width="1"/><path d="M10 20.500L16 4.500l5-0.500" fill="none" stroke="#d81e28" stroke-width="1.100"/><g fill="#f4f4f4" stroke-width="0.900"><circle cx="1.500" cy="2.500" r="1.300" stroke="#2c62b4"/><circle cx="6" cy="20.500" r="1.300" stroke="#2c62b4"/><circle cx="16" cy="21.500" r="1.300" stroke="#2c62b4"/><circle cx="19" cy="17.500" r="1.300" stroke="#2c62b4"/><circle cx="10" cy="20.500" r="1.300" stroke="#d81e28"/><circle cx="16" cy="4.500" r="1.300" stroke="#d81e28"/><circle cx="21" cy="4" r="1.300" stroke="#d81e28"/><circle cx="19" cy="10.500" r="1.300" stroke="#d81e28"/></g></svg></div>
<div class="abs" style="left:50px;top:132px;width:266px;height:23px;box-sizing:border-box;border:1px solid #d6d6d6;background:#f1f1f1"></div>
<div class="t" style="left:53px;top:136px">Layers</div>
<svg class="abs" style="left:285px;top:136px" width="30" height="13"><g fill="none" stroke="#5a5a5a" stroke-width="1.100"><rect x="1.500" y="1.500" width="10" height="10" rx="2.500"/><rect x="17.500" y="1.500" width="10" height="10" rx="2.500"/></g><g fill="none" stroke="#5a5a5a" stroke-width="1"><rect x="3.500" y="5.500" width="4" height="4"/><path d="M5.500 5.500v-2h4v4h-2"/></g><path d="M19.800 3.800l5.400 5.400M25.200 3.800l-5.400 5.400" stroke="#4a4a4a" stroke-width="1.900" fill="none"/></svg>
<div class="ic" style="left:56px;top:157px;width:24px;height:24px"><svg width="24" height="24" viewBox="0 0 24 24"><rect x="4.800" y="9.500" width="9.500" height="10.500" fill="none" stroke="#8a8a8a" stroke-width="1"/><rect x="8.500" y="6" width="10.300" height="10.500" fill="#f2f2f2" stroke="#8a8a8a" stroke-width="1"/><path d="M11.500 12V6a2.300 2.300 0 0 1 4.600 0v7.500a1.400 1.400 0 0 1-2.800 0V7.500" fill="none" stroke="#3d72b8" stroke-width="1.200"/></svg></div>
<div class="ic" style="left:94px;top:157px;width:24px;height:24px"><svg width="24" height="24" viewBox="0 0 24 24"><path d="M1.800 10C6 3.500 15 3 21 9c-5 6.500-14 7-19.200 1z" fill="#fbfbfb" stroke="#8a8a8a" stroke-width="0.800"/><path d="M2 8.500C6 3 14 2 21 7" fill="none" stroke="#8a8a8a" stroke-width="0.900"/><circle cx="11.500" cy="9.300" r="4.600" fill="#6d9ad4"/><circle cx="11.500" cy="9" r="1.900" fill="#222"/><circle cx="12.600" cy="8" r="0.800" fill="#fff"/><path d="M21 9l2 1.500" stroke="#8a8a8a" stroke-width="0.800"/><path d="M20 20.300h5.400L22.700 23z" fill="#111"/></svg></div>
<div class="ic" style="left:131px;top:157px;width:24px;height:24px"><svg width="24" height="24" viewBox="0 0 24 24"><path d="M1.300 3.500c0-4 21.500-4 21.500 0L14 13.500v7c0 1.500-3.800 1.500-3.800 0v-7z" fill="#3aa657" stroke="#2a8442" stroke-width="0.800"/><ellipse cx="12" cy="3.500" rx="10.200" ry="2.300" fill="#2f8e48"/><path d="M4.500 6.500l6.500 7.500v6" fill="none" stroke="#7fd096" stroke-width="1.400" opacity="0.800"/></svg></div>
<div class="ic" style="left:168px;top:157px;width:24px;height:24px"><svg width="24" height="24" viewBox="0 0 24 24"><rect x="1" y="2" width="22" height="19" fill="#fff" stroke="#1f4fd0" stroke-width="1.100"/><path d="M1 2h22v2.500H1z" fill="#2c66e4"/><path d="M1.500 4.500h21v1.800h-21z" fill="#8fb6f6"/><path d="M5.500 7v11h4M5.500 12h4" fill="none" stroke="#777" stroke-width="1.100"/><rect x="11" y="9" width="3.800" height="3.800" fill="#f59a1a"/><rect x="11" y="15" width="3.800" height="3.800" fill="#f59a1a"/><path d="M16.300 6h3.800v7.500h3l-4.900 5.500-4.900-5.500h3z" fill="#f01018"/></svg></div>
<div class="ic" style="left:205px;top:157px;width:24px;height:24px"><svg width="24" height="24" viewBox="0 0 24 24"><rect x="1" y="2" width="22" height="19" fill="#fff" stroke="#1f4fd0" stroke-width="1.100"/><path d="M1 2h22v2.500H1z" fill="#2c66e4"/><path d="M1.500 4.500h21v1.800h-21z" fill="#8fb6f6"/><path d="M5.500 7v11h4M5.500 12h4" fill="none" stroke="#777" stroke-width="1.100"/><rect x="11" y="9" width="3.800" height="3.800" fill="#f59a1a"/><rect x="11" y="15" width="3.800" height="3.800" fill="#f59a1a"/><path d="M16.300 20.500h3.800V13h3l-4.900-6-4.900 6h3z" fill="#f01018"/></svg></div>
<div class="ic" style="left:242px;top:157px;width:24px;height:24px"><svg width="24" height="24" viewBox="0 0 24 24"><rect x="1.500" y="2.500" width="19" height="19" fill="#f0f0ee" stroke="#8a8a8a" stroke-width="1"/><rect x="15" y="15" width="9.300" height="8.800" rx="2" fill="#e84a52"/><path d="M16.800 19.400h5.700" stroke="#fff" stroke-width="2"/></svg></div>
<div class="abs" style="left:50px;top:190px;width:266px;height:374px;box-sizing:border-box;border:1px solid #9a9a9a;background:#fff;overflow:hidden" id="ltree">
<div class="abs" style="left:10px;top:0px;width:1px;height:338px;background:repeating-linear-gradient(to bottom,#9a9a9a 0,#9a9a9a 1px,transparent 1px,transparent 2px)"></div><div class="abs" style="left:30px;top:0px;width:1px;height:274px;background:repeating-linear-gradient(to bottom,#9a9a9a 0,#9a9a9a 1px,transparent 1px,transparent 2px)"></div><div class="abs" style="left:50px;top:0px;width:1px;height:10px;background:repeating-linear-gradient(to bottom,#9a9a9a 0,#9a9a9a 1px,transparent 1px,transparent 2px)"></div><div class="abs" style="left:50px;top:34px;width:1px;height:104px;background:repeating-linear-gradient(to bottom,#9a9a9a 0,#9a9a9a 1px,transparent 1px,transparent 2px)"></div><div class="abs" style="left:50px;top:162px;width:1px;height:104px;background:repeating-linear-gradient(to bottom,#9a9a9a 0,#9a9a9a 1px,transparent 1px,transparent 2px)"></div><div class="abs" style="left:30px;top:354px;width:1px;height:18px;background:repeating-linear-gradient(to bottom,#9a9a9a 0,#9a9a9a 1px,transparent 1px,transparent 2px)"></div><div class="abs" style="left:50px;top:354px;width:1px;height:18px;background:repeating-linear-gradient(to bottom,#9a9a9a 0,#9a9a9a 1px,transparent 1px,transparent 2px)"></div><div class="abs" style="left:10px;top:338px;width:1px;height:34px;background:repeating-linear-gradient(to bottom,#9a9a9a 0,#9a9a9a 1px,transparent 1px,transparent 2px)"></div><div class="abs" style="left:51px;top:9px;height:1px;width:11px;background:repeating-linear-gradient(to right,#9a9a9a 0,#9a9a9a 1px,transparent 1px,transparent 2px)"></div><div class="cb" style="left:63px;top:3px"><svg width="11" height="11" viewBox="0 0 11 11" style="position:absolute;left:0;top:0"><path d="M1.800 5.200L4.300 8.600 9.400 1.600" fill="none" stroke="#111" stroke-width="1.800" stroke-linejoin="miter"/></svg></div><svg class="abs" style="left:82px;top:1px" width="16" height="16"><path d="M5 4.500L2 8l3 3.500" fill="none" stroke="#000" stroke-width="1.700"/></svg><div class="t" style="left:103px;top:3px;letter-spacing:-0.1px">Deleted Edge</div><div class="abs" style="left:31px;top:25px;height:1px;width:12px;background:repeating-linear-gradient(to right,#9a9a9a 0,#9a9a9a 1px,transparent 1px,transparent 2px)"></div><svg class="abs" style="left:26px;top:21px" width="9" height="9"><rect x="0.500" y="0.500" width="8" height="8" fill="#fff" stroke="#8a8a8a"/><path d="M2 4.500h5" stroke="#000" fill="none"/></svg><div class="cb" style="left:43px;top:19px"><svg width="11" height="11" viewBox="0 0 11 11" style="position:absolute;left:0;top:0"><path d="M1.800 5.200L4.300 8.600 9.400 1.600" fill="none" stroke="#111" stroke-width="1.800" stroke-linejoin="miter"/></svg></div><svg class="abs" style="left:61px;top:18px" width="17" height="16"><path d="M1.800 3.500L6.300 12.700 11.300 1.500h4.200" fill="none" stroke="#777" stroke-width="0.900"/><g fill="#fff" stroke="#777" stroke-width="0.700"><circle cx="1.800" cy="3.500" r="1.200"/><circle cx="6.300" cy="12.700" r="1.200"/><circle cx="11.300" cy="1.500" r="1.200"/><circle cx="15.500" cy="1.500" r="1.200"/></g></svg><div class="t" style="left:84px;top:19px;font-weight:bold;font-size:12px;letter-spacing:0.150px;">edges_38063</div><div class="abs" style="left:51px;top:41px;height:1px;width:11px;background:repeating-linear-gradient(to right,#9a9a9a 0,#9a9a9a 1px,transparent 1px,transparent 2px)"></div><div class="cb" style="left:63px;top:35px"><svg width="11" height="11" viewBox="0 0 11 11" style="position:absolute;left:0;top:0"><path d="M1.800 5.200L4.300 8.600 9.400 1.600" fill="none" stroke="#111" stroke-width="1.800" stroke-linejoin="miter"/></svg></div><svg class="abs" style="left:82px;top:33px" width="16" height="16"><path d="M0 6.500h16M0 9.500h16" stroke="#7a7440" stroke-width="1"/><path d="M3 5v6M7 5v6M11 5v6M15 5v6" stroke="#7a7440" stroke-width="0.800"/></svg><div class="t" style="left:103px;top:35px;letter-spacing:-0.1px">Railroads (scale &lt; 21,000)</div><div class="abs" style="left:51px;top:57px;height:1px;width:11px;background:repeating-linear-gradient(to right,#9a9a9a 0,#9a9a9a 1px,transparent 1px,transparent 2px)"></div><div class="cb" style="left:63px;top:51px"><svg width="11" height="11" viewBox="0 0 11 11" style="position:absolute;left:0;top:0"><path d="M1.800 5.200L4.300 8.600 9.400 1.600" fill="none" stroke="#111" stroke-width="1.800" stroke-linejoin="miter"/></svg></div><svg class="abs" style="left:82px;top:49px" width="16" height="16"><path d="M0 8h16" stroke="#6a6430" stroke-width="1.200"/><path d="M2.500 6v4M8 6v4M13.500 6v4" stroke="#6a6430" stroke-width="1"/></svg><div class="t" style="left:103px;top:51px;letter-spacing:-0.1px">Railroads (scale &gt; 21,000)</div><div class="abs" style="left:51px;top:73px;height:1px;width:11px;background:repeating-linear-gradient(to right,#9a9a9a 0,#9a9a9a 1px,transparent 1px,transparent 2px)"></div><div class="cb" style="left:63px;top:67px"><svg width="11" height="11" viewBox="0 0 11 11" style="position:absolute;left:0;top:0"><path d="M1.800 5.200L4.300 8.600 9.400 1.600" fill="none" stroke="#111" stroke-width="1.800" stroke-linejoin="miter"/></svg></div><svg class="abs" style="left:82px;top:65px" width="16" height="16"><path d="M0 8h16" stroke="#cfc678" stroke-width="4.600"/><path d="M0 8h16" stroke="#fbf6b8" stroke-width="2.400"/></svg><div class="t" style="left:103px;top:67px;letter-spacing:-0.1px">Roads (scale &lt; 21,000)</div><div class="abs" style="left:51px;top:89px;height:1px;width:11px;background:repeating-linear-gradient(to right,#9a9a9a 0,#9a9a9a 1px,transparent 1px,transparent 2px)"></div><div class="cb" style="left:63px;top:83px"><svg width="11" height="11" viewBox="0 0 11 11" style="position:absolute;left:0;top:0"><path d="M1.800 5.200L4.300 8.600 9.400 1.600" fill="none" stroke="#111" stroke-width="1.800" stroke-linejoin="miter"/></svg></div><svg class="abs" style="left:82px;top:81px" width="16" height="16"><path d="M0 8h16" stroke="#ddd8a8" stroke-width="3.600"/><path d="M0 8h16" stroke="#fbf8d4" stroke-width="1.800"/></svg><div class="t" style="left:103px;top:83px;letter-spacing:-0.1px">Roads (scale &gt; 21,000)</div><div class="abs" style="left:51px;top:105px;height:1px;width:11px;background:repeating-linear-gradient(to right,#9a9a9a 0,#9a9a9a 1px,transparent 1px,transparent 2px)"></div><div class="cb" style="left:63px;top:99px"><svg width="11" height="11" viewBox="0 0 11 11" style="position:absolute;left:0;top:0"><path d="M1.800 5.200L4.300 8.600 9.400 1.600" fill="none" stroke="#111" stroke-width="1.800" stroke-linejoin="miter"/></svg></div><svg class="abs" style="left:82px;top:97px" width="16" height="16"><path d="M0 8h16" stroke="#3a6fc2" stroke-width="1.600"/></svg><div class="t" style="left:103px;top:99px;letter-spacing:-0.1px">Linear Water</div><div class="abs" style="left:51px;top:121px;height:1px;width:11px;background:repeating-linear-gradient(to right,#9a9a9a 0,#9a9a9a 1px,transparent 1px,transparent 2px)"></div><div class="cb" style="left:63px;top:115px"><svg width="11" height="11" viewBox="0 0 11 11" style="position:absolute;left:0;top:0"><path d="M1.800 5.200L4.300 8.600 9.400 1.600" fill="none" stroke="#111" stroke-width="1.800" stroke-linejoin="miter"/></svg></div><svg class="abs" style="left:82px;top:113px" width="16" height="16"><path d="M0 8h16" stroke="#333" stroke-width="1" stroke-dasharray="3 2 1 2 1 2"/></svg><div class="t" style="left:103px;top:115px;letter-spacing:-0.1px">Non-visible boundaries</div><div class="abs" style="left:51px;top:137px;height:1px;width:11px;background:repeating-linear-gradient(to right,#9a9a9a 0,#9a9a9a 1px,transparent 1px,transparent 2px)"></div><div class="cb" style="left:63px;top:131px"><svg width="11" height="11" viewBox="0 0 11 11" style="position:absolute;left:0;top:0"><path d="M1.800 5.200L4.300 8.600 9.400 1.600" fill="none" stroke="#111" stroke-width="1.800" stroke-linejoin="miter"/></svg></div><svg class="abs" style="left:82px;top:129px" width="16" height="16"><path d="M5 4.500L2 8l3 3.500" fill="none" stroke="#000" stroke-width="1.700"/></svg><div class="t" style="left:103px;top:131px;letter-spacing:-0.1px">Deleted Edge</div><div class="abs" style="left:31px;top:153px;height:1px;width:12px;background:repeating-linear-gradient(to right,#9a9a9a 0,#9a9a9a 1px,transparent 1px,transparent 2px)"></div><svg class="abs" style="left:26px;top:149px" width="9" height="9"><rect x="0.500" y="0.500" width="8" height="8" fill="#fff" stroke="#8a8a8a"/><path d="M2 4.500h5" stroke="#000" fill="none"/></svg><div class="cb" style="left:43px;top:147px"><svg width="11" height="11" viewBox="0 0 11 11" style="position:absolute;left:0;top:0"><path d="M1.800 5.200L4.300 8.600 9.400 1.600" fill="none" stroke="#111" stroke-width="1.800" stroke-linejoin="miter"/></svg></div><svg class="abs" style="left:61px;top:146px" width="17" height="16"><path d="M1.800 3.500L6.300 12.700 11.300 1.500h4.200" fill="none" stroke="#777" stroke-width="0.900"/><g fill="#fff" stroke="#777" stroke-width="0.700"><circle cx="1.800" cy="3.500" r="1.200"/><circle cx="6.300" cy="12.700" r="1.200"/><circle cx="11.300" cy="1.500" r="1.200"/><circle cx="15.500" cy="1.500" r="1.200"/></g></svg><div class="t" style="left:84px;top:147px;font-weight:bold;font-size:12px;letter-spacing:0.150px;">edges_38027</div><div class="abs" style="left:51px;top:169px;height:1px;width:11px;background:repeating-linear-gradient(to right,#9a9a9a 0,#9a9a9a 1px,transparent 1px,transparent 2px)"></div><div class="cb" style="left:63px;top:163px"><svg width="11" height="11" viewBox="0 0 11 11" style="position:absolute;left:0;top:0"><path d="M1.800 5.200L4.300 8.600 9.400 1.600" fill="none" stroke="#111" stroke-width="1.800" stroke-linejoin="miter"/></svg></div><svg class="abs" style="left:82px;top:161px" width="16" height="16"><path d="M0 6.500h16M0 9.500h16" stroke="#7a7440" stroke-width="1"/><path d="M3 5v6M7 5v6M11 5v6M15 5v6" stroke="#7a7440" stroke-width="0.800"/></svg><div class="t" style="left:103px;top:163px;letter-spacing:-0.1px">Railroads (scale &lt; 21,000)</div><div class="abs" style="left:51px;top:185px;height:1px;width:11px;background:repeating-linear-gradient(to right,#9a9a9a 0,#9a9a9a 1px,transparent 1px,transparent 2px)"></div><div class="cb" style="left:63px;top:179px"><svg width="11" height="11" viewBox="0 0 11 11" style="position:absolute;left:0;top:0"><path d="M1.800 5.200L4.300 8.600 9.400 1.600" fill="none" stroke="#111" stroke-width="1.800" stroke-linejoin="miter"/></svg></div><svg class="abs" style="left:82px;top:177px" width="16" height="16"><path d="M0 8h16" stroke="#6a6430" stroke-width="1.200"/><path d="M2.500 6v4M8 6v4M13.500 6v4" stroke="#6a6430" stroke-width="1"/></svg><div class="t" style="left:103px;top:179px;letter-spacing:-0.1px">Railroads (scale &gt; 21,000)</div><div class="abs" style="left:51px;top:201px;height:1px;width:11px;background:repeating-linear-gradient(to right,#9a9a9a 0,#9a9a9a 1px,transparent 1px,transparent 2px)"></div><div class="cb" style="left:63px;top:195px"><svg width="11" height="11" viewBox="0 0 11 11" style="position:absolute;left:0;top:0"><path d="M1.800 5.200L4.300 8.600 9.400 1.600" fill="none" stroke="#111" stroke-width="1.800" stroke-linejoin="miter"/></svg></div><svg class="abs" style="left:82px;top:193px" width="16" height="16"><path d="M0 8h16" stroke="#cfc678" stroke-width="4.600"/><path d="M0 8h16" stroke="#fbf6b8" stroke-width="2.400"/></svg><div class="t" style="left:103px;top:195px;letter-spacing:-0.1px">Roads (scale &lt; 21,000)</div><div class="abs" style="left:51px;top:217px;height:1px;width:11px;background:repeating-linear-gradient(to right,#9a9a9a 0,#9a9a9a 1px,transparent 1px,transparent 2px)"></div><div class="cb" style="left:63px;top:211px"><svg width="11" height="11" viewBox="0 0 11 11" style="position:absolute;left:0;top:0"><path d="M1.800 5.200L4.300 8.600 9.400 1.600" fill="none" stroke="#111" stroke-width="1.800" stroke-linejoin="miter"/></svg></div><svg class="abs" style="left:82px;top:209px" width="16" height="16"><path d="M0 8h16" stroke="#ddd8a8" stroke-width="3.600"/><path d="M0 8h16" stroke="#fbf8d4" stroke-width="1.800"/></svg><div class="t" style="left:103px;top:211px;letter-spacing:-0.1px">Roads (scale &gt; 21,000)</div><div class="abs" style="left:51px;top:233px;height:1px;width:11px;background:repeating-linear-gradient(to right,#9a9a9a 0,#9a9a9a 1px,transparent 1px,transparent 2px)"></div><div class="cb" style="left:63px;top:227px"><svg width="11" height="11" viewBox="0 0 11 11" style="position:absolute;left:0;top:0"><path d="M1.800 5.200L4.300 8.600 9.400 1.600" fill="none" stroke="#111" stroke-width="1.800" stroke-linejoin="miter"/></svg></div><svg class="abs" style="left:82px;top:225px" width="16" height="16"><path d="M0 8h16" stroke="#3a6fc2" stroke-width="1.600"/></svg><div class="t" style="left:103px;top:227px;letter-spacing:-0.1px">Linear Water</div><div class="abs" style="left:51px;top:249px;height:1px;width:11px;background:repeating-linear-gradient(to right,#9a9a9a 0,#9a9a9a 1px,transparent 1px,transparent 2px)"></div><div class="cb" style="left:63px;top:243px"><svg width="11" height="11" viewBox="0 0 11 11" style="position:absolute;left:0;top:0"><path d="M1.800 5.200L4.300 8.600 9.400 1.600" fill="none" stroke="#111" stroke-width="1.800" stroke-linejoin="miter"/></svg></div><svg class="abs" style="left:82px;top:241px" width="16" height="16"><path d="M0 8h16" stroke="#333" stroke-width="1" stroke-dasharray="3 2 1 2 1 2"/></svg><div class="t" style="left:103px;top:243px;letter-spacing:-0.1px">Non-visible boundaries</div><div class="abs" style="left:51px;top:265px;height:1px;width:11px;background:repeating-linear-gradient(to right,#9a9a9a 0,#9a9a9a 1px,transparent 1px,transparent 2px)"></div><div class="cb" style="left:63px;top:259px"><svg width="11" height="11" viewBox="0 0 11 11" style="position:absolute;left:0;top:0"><path d="M1.800 5.200L4.300 8.600 9.400 1.600" fill="none" stroke="#111" stroke-width="1.800" stroke-linejoin="miter"/></svg></div><svg class="abs" style="left:82px;top:257px" width="16" height="16"><path d="M5 4.500L2 8l3 3.500" fill="none" stroke="#000" stroke-width="1.700"/></svg><div class="t" style="left:103px;top:259px;letter-spacing:-0.1px">Deleted Edge</div><div class="abs" style="left:11px;top:281px;height:1px;width:12px;background:repeating-linear-gradient(to right,#9a9a9a 0,#9a9a9a 1px,transparent 1px,transparent 2px)"></div><svg class="abs" style="left:6px;top:277px" width="9" height="9"><rect x="0.500" y="0.500" width="8" height="8" fill="#fff" stroke="#8a8a8a"/><path d="M2 4.500h5M4.500 2v5" stroke="#000" fill="none"/></svg><div class="cb" style="left:23px;top:275px"></div><svg class="abs" style="left:41px;top:273px" width="16" height="18"><rect x="0.500" y="6.500" width="9" height="9" fill="none" stroke="#8a8a8a"/><rect x="3.500" y="3.500" width="9" height="9" fill="#f4f4f4" stroke="#8a8a8a"/><path d="M7 9V3.500a2 2 0 0 1 4 0V10" fill="none" stroke="#3a6ab0" stroke-width="1.200"/></svg><div class="t" style="left:64px;top:275px;letter-spacing:-0.3px">2010_Census_Tract</div><div class="abs" style="left:11px;top:297px;height:1px;width:12px;background:repeating-linear-gradient(to right,#9a9a9a 0,#9a9a9a 1px,transparent 1px,transparent 2px)"></div><svg class="abs" style="left:6px;top:293px" width="9" height="9"><rect x="0.500" y="0.500" width="8" height="8" fill="#fff" stroke="#8a8a8a"/><path d="M2 4.500h5M4.500 2v5" stroke="#000" fill="none"/></svg><div class="cb" style="left:23px;top:291px"></div><svg class="abs" style="left:41px;top:289px" width="16" height="18"><rect x="0.500" y="6.500" width="9" height="9" fill="none" stroke="#8a8a8a"/><rect x="3.500" y="3.500" width="9" height="9" fill="#f4f4f4" stroke="#8a8a8a"/><path d="M7 9V3.500a2 2 0 0 1 4 0V10" fill="none" stroke="#3a6ab0" stroke-width="1.200"/></svg><div class="t" style="left:64px;top:291px;letter-spacing:-0.3px">2010_Census_Block</div><div class="abs" style="left:11px;top:313px;height:1px;width:12px;background:repeating-linear-gradient(to right,#9a9a9a 0,#9a9a9a 1px,transparent 1px,transparent 2px)"></div><svg class="abs" style="left:6px;top:309px" width="9" height="9"><rect x="0.500" y="0.500" width="8" height="8" fill="#fff" stroke="#8a8a8a"/><path d="M2 4.500h5M4.500 2v5" stroke="#000" fill="none"/></svg><div class="cb" style="left:23px;top:307px"><svg width="11" height="11" viewBox="0 0 11 11" style="position:absolute;left:0;top:0"><path d="M1.800 5.200L4.300 8.600 9.400 1.600" fill="none" stroke="#111" stroke-width="1.800" stroke-linejoin="miter"/></svg></div><svg class="abs" style="left:41px;top:305px" width="16" height="18"><rect x="0.500" y="6.500" width="9" height="9" fill="none" stroke="#8a8a8a"/><rect x="3.500" y="3.500" width="9" height="9" fill="#f4f4f4" stroke="#8a8a8a"/><path d="M7 9V3.500a2 2 0 0 1 4 0V10" fill="none" stroke="#3a6ab0" stroke-width="1.200"/></svg><div class="t" style="left:64px;top:307px;letter-spacing:-0.3px">changes</div><div class="abs" style="left:11px;top:329px;height:1px;width:12px;background:repeating-linear-gradient(to right,#9a9a9a 0,#9a9a9a 1px,transparent 1px,transparent 2px)"></div><svg class="abs" style="left:6px;top:325px" width="9" height="9"><rect x="0.500" y="0.500" width="8" height="8" fill="#fff" stroke="#8a8a8a"/><path d="M2 4.500h5" stroke="#000" fill="none"/></svg><div class="cb" style="left:23px;top:323px"><svg width="11" height="11" viewBox="0 0 11 11" style="position:absolute;left:0;top:0"><path d="M1.800 5.200L4.300 8.600 9.400 1.600" fill="none" stroke="#111" stroke-width="1.800" stroke-linejoin="miter"/></svg></div><svg class="abs" style="left:41px;top:321px" width="16" height="18"><rect x="0.500" y="6.500" width="9" height="9" fill="none" stroke="#8a8a8a"/><rect x="3.500" y="3.500" width="9" height="9" fill="#f4f4f4" stroke="#8a8a8a"/><path d="M7 9V3.500a2 2 0 0 1 4 0V10" fill="none" stroke="#3a6ab0" stroke-width="1.200"/></svg><div class="t" style="left:64px;top:323px;letter-spacing:-0.3px">faces</div><div class="abs" style="left:31px;top:345px;height:1px;width:12px;background:repeating-linear-gradient(to right,#9a9a9a 0,#9a9a9a 1px,transparent 1px,transparent 2px)"></div><svg class="abs" style="left:26px;top:341px" width="9" height="9"><rect x="0.500" y="0.500" width="8" height="8" fill="#fff" stroke="#8a8a8a"/><path d="M2 4.500h5" stroke="#000" fill="none"/></svg><div class="cb" style="left:43px;top:339px"><svg width="11" height="11" viewBox="0 0 11 11" style="position:absolute;left:0;top:0"><path d="M1.800 5.200L4.300 8.600 9.400 1.600" fill="none" stroke="#111" stroke-width="1.800" stroke-linejoin="miter"/></svg></div><svg class="abs" style="left:61px;top:337px" width="18" height="16"><path d="M2 6c2-4 6-4 8-2 3-2 6 0 6 4-1 4-5 5-8 4-3 1-6 0-6-2z" fill="#e8e0d8" stroke="#9a9088" stroke-width="0.800"/><path d="M12 1L5 12l-1 3 3-2 7-11z" fill="#e8742a" stroke="#a84a10" stroke-width="0.700"/></svg><div class="t" style="left:84px;top:339px;font-weight:bold;font-size:12px;letter-spacing:0.150px;text-decoration:underline;">faces_38005</div><div class="abs" style="left:51px;top:361px;height:1px;width:11px;background:repeating-linear-gradient(to right,#9a9a9a 0,#9a9a9a 1px,transparent 1px,transparent 2px)"></div><div class="cb" style="left:63px;top:355px"><svg width="11" height="11" viewBox="0 0 11 11" style="position:absolute;left:0;top:0"><path d="M1.800 5.200L4.300 8.600 9.400 1.600" fill="none" stroke="#111" stroke-width="1.800" stroke-linejoin="miter"/></svg></div><svg class="abs" style="left:82px;top:353px" width="16" height="16"></svg><div class="t" style="left:103px;top:355px;letter-spacing:-0.1px">zoomed out (not outlined)</div><div class="abs" style="left:82px;top:370px;width:16px;height:1px;background:#b8e0b8"></div>
</div>
<div class="abs" style="left:299px;top:192px;width:15px;height:369px;background:#d9d9d9;box-sizing:border-box;border-left:1px solid #c4c4c4;border-right:1px solid #c4c4c4"></div><div class="sbtn" style="left:299px;top:192px;width:15px;height:15px"></div><svg class="abs" style="left:303px;top:198px" width="7" height="4"><path d="M0 4h7L3.500 0z"/></svg><div class="sbtn" style="left:299px;top:546px;width:15px;height:15px"></div><svg class="abs" style="left:303px;top:551px" width="7" height="4"><path d="M0 0h7L3.500 4z"/></svg><div class="abs" style="left:299px;top:295px;width:15px;height:107px;box-sizing:border-box;border:1px solid #b0b0b0;border-radius:2px;background:linear-gradient(to right,#fdfdfd,#f0f0f0)"></div><div class="abs" style="left:303px;top:358px;width:7px;height:5px;background:repeating-linear-gradient(to bottom,#b4b4b4 0,#b4b4b4 1px,transparent 1px,transparent 2px)"></div>
<div class="abs" style="left:162px;top:565px;width:40px;height:4px;background:repeating-linear-gradient(to right,#c4c4c4 0,#c4c4c4 1px,transparent 1px,transparent 2px)"></div>
<div class="abs" style="left:317px;top:540px;width:4px;height:40px;background:repeating-linear-gradient(to bottom,#c4c4c4 0,#c4c4c4 1px,transparent 1px,transparent 2px)"></div>
<div class="vl" style="left:316px;top:131px;height:870px;background:#e4e4e4"></div>
<div class="abs" style="left:50px;top:570px;width:266px;height:23px;box-sizing:border-box;border:1px solid #d6d6d6;background:#f1f1f1"></div>
<div class="t" style="left:53px;top:575px">Identify Results</div>
<svg class="abs" style="left:285px;top:575px" width="30" height="13"><g fill="none" stroke="#5a5a5a" stroke-width="1.100"><rect x="1.500" y="1.500" width="10" height="10" rx="2.500"/><rect x="17.500" y="1.500" width="10" height="10" rx="2.500"/></g><g fill="none" stroke="#5a5a5a" stroke-width="1"><rect x="3.500" y="5.500" width="4" height="4"/><path d="M5.500 5.500v-2h4v4h-2"/></g><path d="M19.800 3.800l5.400 5.400M25.200 3.800l-5.400 5.400" stroke="#4a4a4a" stroke-width="1.900" fill="none"/></svg>
<div class="pressed" style="left:128px;top:594px;width:31px;height:28px"></div>
<div class="ic" style="left:57px;top:596px;width:24px;height:24px"><svg width="24" height="24" viewBox="0 0 24 24"><rect x="1" y="2" width="22" height="19" fill="#fff" stroke="#1f4fd0" stroke-width="1.100"/><path d="M1 2h22v2.500H1z" fill="#2c66e4"/><path d="M1.500 4.500h21v1.800h-21z" fill="#8fb6f6"/><path d="M5.500 7v11h4M5.500 12h4" fill="none" stroke="#777" stroke-width="1.100"/><rect x="11" y="9" width="3.800" height="3.800" fill="#f59a1a"/><rect x="11" y="15" width="3.800" height="3.800" fill="#f59a1a"/><path d="M16.300 6h3.800v7.500h3l-4.900 5.500-4.900-5.500h3z" fill="#f01018"/></svg></div>
<div class="ic" style="left:94px;top:596px;width:24px;height:24px"><svg width="24" height="24" viewBox="0 0 24 24"><rect x="1" y="2" width="22" height="19" fill="#fff" stroke="#1f4fd0" stroke-width="1.100"/><path d="M1 2h22v2.500H1z" fill="#2c66e4"/><path d="M1.500 4.500h21v1.800h-21z" fill="#8fb6f6"/><path d="M5.500 7v11h4M5.500 12h4" fill="none" stroke="#777" stroke-width="1.100"/><rect x="11" y="9" width="3.800" height="3.800" fill="#f59a1a"/><rect x="11" y="15" width="3.800" height="3.800" fill="#f59a1a"/><path d="M16.300 20.500h3.800V13h3l-4.900-6-4.900 6h3z" fill="#f01018"/></svg></div>
<div class="ic" style="left:131px;top:596px;width:24px;height:24px"><svg width="24" height="24" viewBox="0 0 24 24"><rect x="1" y="2" width="22" height="19" fill="#fff" stroke="#1f4fd0" stroke-width="1.100"/><path d="M1 2h22v2.500H1z" fill="#2c66e4"/><path d="M1.500 4.500h21v1.800h-21z" fill="#8fb6f6"/><path d="M5.500 7v11h4M5.500 12h4" fill="none" stroke="#777" stroke-width="1.100"/><rect x="11" y="9" width="3.800" height="3.800" fill="#f59a1a"/><rect x="11" y="15" width="3.800" height="3.800" fill="#f59a1a"/><path d="M16.300 6h3.800v7.500h3l-4.900 5.500-4.900-5.500h3z" fill="#f01018"/><path d="M8 0.500l2.200 4.600 5 0.600-3.700 3.500 1 5-4.500-2.500-4.500 2.500 1-5L0.800 5.700l5-0.600z" fill="#fadc1e" stroke="#e8a818" stroke-width="0.900" stroke-linejoin="round"/></svg></div>
<div class="ic" style="left:168px;top:596px;width:24px;height:24px"><svg width="24" height="24" viewBox="0 0 24 24"><rect x="4" y="4.700" width="16" height="13.800" fill="#fbfbfb" stroke="#c4c4c4" stroke-width="1"/><path d="M4 5.200h16" stroke="#9a9a9a" stroke-width="1.400"/><path d="M7 10h2M10.500 10h7M7 13.500h2M10.500 13.500h7" stroke="#333" stroke-width="1.500"/></svg></div>
<div class="ic" style="left:206px;top:596px;width:24px;height:24px"><svg width="24" height="24" viewBox="0 0 24 24"><rect x="2.300" y="3.500" width="14.500" height="14" fill="#f5e14a" stroke="#c8b018" stroke-width="1" stroke-dasharray="1.800 1.200"/><rect x="12" y="13" width="11" height="10.400" rx="2" fill="#d8202a"/><circle cx="17.500" cy="18.200" r="3.300" fill="#f8e0e0"/><path d="M15.200 20.500l4.600-4.600" stroke="#d8202a" stroke-width="1.500"/></svg></div>
<div class="ic" style="left:242px;top:596px;width:24px;height:24px"><svg width="24" height="24" viewBox="0 0 24 24"><path d="M8.500 3h7l4 4v11h-11z" fill="#f6f6f6" stroke="#c8c8c8" stroke-width="1"/><path d="M3 6h8l4 4v11H3z" fill="#fafafa" stroke="#c0c0c0" stroke-width="1"/><path d="M5 12h8M5 14.500h8M5 17h8M5 19h6" stroke="#cfcfcf" stroke-width="0.900"/></svg></div>
<div class="ic" style="left:279px;top:596px;width:24px;height:24px"><svg width="24" height="24" viewBox="0 0 24 24"><rect x="6.500" y="2" width="11" height="7" fill="#fdfdfd" stroke="#c8c8c8" stroke-width="0.800"/><rect x="2" y="8" width="20" height="10" rx="2.500" fill="#a4a8ac"/><rect x="6.500" y="14.500" width="11" height="7.500" fill="#fdfdfd" stroke="#b8b8b8" stroke-width="0.800"/><path d="M8.500 17.500h7M8.500 19.500h7" stroke="#b8b8b8" stroke-width="0.900"/></svg></div>
<div class="abs" style="left:50px;top:629px;width:266px;height:306px;box-sizing:border-box;border:1px solid #9a9a9a;background:#fff;overflow:hidden">
<div class="abs" style="left:0;top:0;width:248px;height:20px;background:linear-gradient(#fff,#f4f4f4);border-bottom:1px solid #d0d0d0"></div><div class="vl" style="left:185px;top:3px;height:15px;background:#d8d8d8"></div><div class="t" style="left:3px;top:5px">Feature</div><div class="t" style="left:190px;top:5px">Value</div><div class="abs" style="left:50px;top:22px;width:1px;height:254px;background:repeating-linear-gradient(to bottom,#9a9a9a 0,#9a9a9a 1px,transparent 1px,transparent 2px)"></div><div class="abs" style="left:0;top:22px;width:248px;height:13px;background:#f6f6f6"></div><div class="abs" style="left:51px;top:28px;width:8px;height:1px;background:repeating-linear-gradient(to right,#9a9a9a 0,#9a9a9a 1px,transparent 1px,transparent 2px)"></div><div class="t" style="left:62px;top:23px;line-height:13px;letter-spacing:-0.55px">BLOCKCE</div><div class="t" style="left:190px;top:23px;line-height:13px;letter-spacing:-0.12px">2207</div><div class="abs" style="left:0;top:35px;width:248px;height:13px;background:#fff"></div><div class="abs" style="left:51px;top:41px;width:8px;height:1px;background:repeating-linear-gradient(to right,#9a9a9a 0,#9a9a9a 1px,transparent 1px,transparent 2px)"></div><div class="t" style="left:62px;top:36px;line-height:13px;letter-spacing:-0.55px">SUFFIX1CE</div><div class="t" style="left:190px;top:36px;line-height:13px;letter-spacing:-0.12px">NULL</div><div class="abs" style="left:0;top:48px;width:248px;height:13px;background:#f6f6f6"></div><div class="abs" style="left:51px;top:54px;width:8px;height:1px;background:repeating-linear-gradient(to right,#9a9a9a 0,#9a9a9a 1px,transparent 1px,transparent 2px)"></div><div class="t" style="left:62px;top:49px;line-height:13px;letter-spacing:-0.55px">SUFFIX2CE</div><div class="t" style="left:190px;top:49px;line-height:13px;letter-spacing:-0.12px">NULL</div><div class="abs" style="left:0;top:61px;width:248px;height:13px;background:#fff"></div><div class="abs" style="left:51px;top:67px;width:8px;height:1px;background:repeating-linear-gradient(to right,#9a9a9a 0,#9a9a9a 1px,transparent 1px,transparent 2px)"></div><div class="t" style="left:62px;top:62px;line-height:13px;letter-spacing:-0.55px">BAGCE</div><div class="t" style="left:190px;top:62px;line-height:13px;letter-spacing:-0.12px">NULL</div><div class="abs" style="left:0;top:74px;width:248px;height:13px;background:#f6f6f6"></div><div class="abs" style="left:51px;top:80px;width:8px;height:1px;background:repeating-linear-gradient(to right,#9a9a9a 0,#9a9a9a 1px,transparent 1px,transparent 2px)"></div><div class="t" style="left:62px;top:75px;line-height:13px;letter-spacing:-0.55px">TAZCE</div><div class="t" style="left:190px;top:75px;line-height:13px;letter-spacing:-0.12px">00940200</div><div class="abs" style="left:0;top:87px;width:248px;height:13px;background:#fff"></div><div class="abs" style="left:51px;top:93px;width:8px;height:1px;background:repeating-linear-gradient(to right,#9a9a9a 0,#9a9a9a 1px,transparent 1px,transparent 2px)"></div><div class="t" style="left:62px;top:88px;line-height:13px;letter-spacing:-0.55px">TADCE</div><div class="t" style="left:190px;top:88px;line-height:13px;letter-spacing:-0.12px">00000010</div><div class="abs" style="left:0;top:100px;width:248px;height:13px;background:#f6f6f6"></div><div class="abs" style="left:51px;top:106px;width:8px;height:1px;background:repeating-linear-gradient(to right,#9a9a9a 0,#9a9a9a 1px,transparent 1px,transparent 2px)"></div><div class="t" style="left:62px;top:101px;line-height:13px;letter-spacing:-0.55px">MPOCE</div><div class="t" style="left:190px;top:101px;line-height:13px;letter-spacing:-0.12px">22774638</div><div class="abs" style="left:0;top:113px;width:248px;height:13px;background:#fff"></div><div class="abs" style="left:51px;top:119px;width:8px;height:1px;background:repeating-linear-gradient(to right,#9a9a9a 0,#9a9a9a 1px,transparent 1px,transparent 2px)"></div><div class="t" style="left:62px;top:114px;line-height:13px;letter-spacing:-0.55px">PUMACE10</div><div class="t" style="left:190px;top:114px;line-height:13px;letter-spacing:-0.12px">00200</div><div class="abs" style="left:0;top:126px;width:248px;height:13px;background:#f6f6f6"></div><div class="abs" style="left:51px;top:132px;width:8px;height:1px;background:repeating-linear-gradient(to right,#9a9a9a 0,#9a9a9a 1px,transparent 1px,transparent 2px)"></div><div class="t" style="left:62px;top:127px;line-height:13px;letter-spacing:-0.55px">SUBMCDFP</div><div class="t" style="left:190px;top:127px;line-height:13px;letter-spacing:-0.12px">NULL</div><div class="abs" style="left:0;top:139px;width:248px;height:13px;background:#fff"></div><div class="abs" style="left:51px;top:145px;width:8px;height:1px;background:repeating-linear-gradient(to right,#9a9a9a 0,#9a9a9a 1px,transparent 1px,transparent 2px)"></div><div class="t" style="left:62px;top:140px;line-height:13px;letter-spacing:-0.55px">UGACE</div><div class="t" style="left:190px;top:140px;line-height:13px;letter-spacing:-0.12px">NULL</div><div class="abs" style="left:0;top:152px;width:248px;height:13px;background:#f6f6f6"></div><div class="abs" style="left:51px;top:158px;width:8px;height:1px;background:repeating-linear-gradient(to right,#9a9a9a 0,#9a9a9a 1px,transparent 1px,transparent 2px)"></div><div class="t" style="left:62px;top:153px;line-height:13px;letter-spacing:-0.55px">STATEFP10</div><div class="t" style="left:190px;top:153px;line-height:13px;letter-spacing:-0.12px">38</div><div class="abs" style="left:0;top:165px;width:248px;height:13px;background:#fff"></div><div class="abs" style="left:51px;top:171px;width:8px;height:1px;background:repeating-linear-gradient(to right,#9a9a9a 0,#9a9a9a 1px,transparent 1px,transparent 2px)"></div><div class="t" style="left:62px;top:166px;line-height:13px;letter-spacing:-0.55px">COUNTYFP10</div><div class="t" style="left:190px;top:166px;line-height:13px;letter-spacing:-0.12px">005</div><div class="abs" style="left:0;top:178px;width:248px;height:13px;background:#f6f6f6"></div><div class="abs" style="left:51px;top:184px;width:8px;height:1px;background:repeating-linear-gradient(to right,#9a9a9a 0,#9a9a9a 1px,transparent 1px,transparent 2px)"></div><div class="t" style="left:62px;top:179px;line-height:13px;letter-spacing:-0.55px">TRACTCE10</div><div class="t" style="left:190px;top:179px;line-height:13px;letter-spacing:-0.12px">940200</div><div class="abs" style="left:0;top:191px;width:248px;height:13px;background:#fff"></div><div class="abs" style="left:51px;top:197px;width:8px;height:1px;background:repeating-linear-gradient(to right,#9a9a9a 0,#9a9a9a 1px,transparent 1px,transparent 2px)"></div><div class="t" style="left:62px;top:192px;line-height:13px;letter-spacing:-0.55px">PLACEFP</div><div class="t" style="left:190px;top:192px;line-height:13px;letter-spacing:-0.12px">NULL</div><div class="abs" style="left:0;top:204px;width:248px;height:13px;background:#f6f6f6"></div><div class="abs" style="left:51px;top:210px;width:8px;height:1px;background:repeating-linear-gradient(to right,#9a9a9a 0,#9a9a9a 1px,transparent 1px,transparent 2px)"></div><div class="t" style="left:62px;top:205px;line-height:13px;letter-spacing:-0.55px">COUSUBFP</div><div class="t" style="left:190px;top:205px;line-height:13px;letter-spacing:-0.12px">53060</div><div class="abs" style="left:0;top:217px;width:248px;height:13px;background:#fff"></div><div class="abs" style="left:51px;top:223px;width:8px;height:1px;background:repeating-linear-gradient(to right,#9a9a9a 0,#9a9a9a 1px,transparent 1px,transparent 2px)"></div><div class="t" style="left:62px;top:218px;line-height:13px;letter-spacing:-0.55px">CONCITYFP</div><div class="t" style="left:190px;top:218px;line-height:13px;letter-spacing:-0.12px">NULL</div><div class="abs" style="left:0;top:230px;width:248px;height:13px;background:#f6f6f6"></div><div class="abs" style="left:51px;top:236px;width:8px;height:1px;background:repeating-linear-gradient(to right,#9a9a9a 0,#9a9a9a 1px,transparent 1px,transparent 2px)"></div><div class="t" style="left:62px;top:231px;line-height:13px;letter-spacing:-0.55px">CDSESSN</div><div class="t" style="left:190px;top:231px;line-height:13px;letter-spacing:-0.12px">114</div><div class="abs" style="left:0;top:243px;width:248px;height:13px;background:#fff"></div><div class="abs" style="left:51px;top:249px;width:8px;height:1px;background:repeating-linear-gradient(to right,#9a9a9a 0,#9a9a9a 1px,transparent 1px,transparent 2px)"></div><div class="t" style="left:62px;top:244px;line-height:13px;letter-spacing:-0.55px">LWFLG</div><div class="t" style="left:190px;top:244px;line-height:13px;letter-spacing:-0.12px">L</div><div class="abs" style="left:0;top:256px;width:248px;height:13px;background:#f6f6f6"></div><div class="abs" style="left:51px;top:262px;width:8px;height:1px;background:repeating-linear-gradient(to right,#9a9a9a 0,#9a9a9a 1px,transparent 1px,transparent 2px)"></div><div class="t" style="left:62px;top:257px;line-height:13px;letter-spacing:-0.55px">CHNG_FLAG</div><div class="t" style="left:190px;top:257px;line-height:13px;letter-spacing:-0.12px">1</div><div class="abs" style="left:0;top:269px;width:248px;height:13px;background:#fff"></div><div class="abs" style="left:51px;top:275px;width:8px;height:1px;background:repeating-linear-gradient(to right,#9a9a9a 0,#9a9a9a 1px,transparent 1px,transparent 2px)"></div><div class="t" style="left:62px;top:270px;line-height:13px;letter-spacing:-0.55px">GUPS</div><div class="t" style="left:190px;top:270px;line-height:13px;letter-spacing:-0.12px">NULL</div><div class="abs" style="left:50px;top:22px;width:1px;height:254px;background:repeating-linear-gradient(to bottom,#9a9a9a 0,#9a9a9a 1px,transparent 1px,transparent 2px)"></div>
</div>
<div class="abs" style="left:299px;top:631px;width:15px;height:287px;background:#d9d9d9;box-sizing:border-box;border-left:1px solid #c4c4c4;border-right:1px solid #c4c4c4"></div><div class="sbtn" style="left:299px;top:631px;width:15px;height:15px"></div><svg class="abs" style="left:303px;top:637px" width="7" height="4"><path d="M0 4h7L3.500 0z"/></svg><div class="sbtn" style="left:299px;top:903px;width:15px;height:15px"></div><svg class="abs" style="left:303px;top:908px" width="7" height="4"><path d="M0 0h7L3.500 4z"/></svg><div class="abs" style="left:299px;top:845px;width:15px;height:59px;box-sizing:border-box;border:1px solid #b0b0b0;border-radius:2px;background:linear-gradient(to right,#fdfdfd,#f0f0f0)"></div><div class="abs" style="left:303px;top:872px;width:7px;height:5px;background:repeating-linear-gradient(to bottom,#b4b4b4 0,#b4b4b4 1px,transparent 1px,transparent 2px)"></div>
<div class="abs" style="left:52px;top:919px;width:247px;height:14px;background:#d9d9d9;box-sizing:border-box;border-top:1px solid #c4c4c4;border-bottom:1px solid #c4c4c4"></div>
<div class="sbtn" style="left:52px;top:919px;width:14px;height:14px"></div><svg class="abs" style="left:57px;top:923px" width="4" height="7"><path d="M4 0v7L0 3.500z"/></svg>
<div class="sbtn" style="left:285px;top:919px;width:14px;height:14px"></div><svg class="abs" style="left:290px;top:923px" width="4" height="7"><path d="M0 0v7L4 3.500z"/></svg>
<div class="abs" style="left:66px;top:919px;width:189px;height:14px;box-sizing:border-box;border:1px solid #b0b0b0;border-radius:2px;background:linear-gradient(#fdfdfd,#f0f0f0)"></div>
<div class="abs" style="left:156px;top:923px;width:5px;height:6px;background:repeating-linear-gradient(to right,#b4b4b4 0,#b4b4b4 1px,transparent 1px,transparent 2px)"></div>
<div class="t" style="left:53px;top:945px">Mode</div>
<div class="sbtn" style="left:86px;top:942px;width:111px;height:21px;border-radius:3px;background:linear-gradient(#f8f8f8,#e8e8e8);border-color:#8a8a8a"></div>
<div class="t" style="left:91px;top:945px">Current layer</div>
<div class="vl" style="left:174px;top:945px;height:15px;background:#dcdcdc"></div>
<svg class="abs" style="left:180px;top:946px" width="9" height="13"><path d="M0.500 5h8L4.500 0.500zM0.500 8h8L4.500 12.500z" fill="#111"/></svg>
<div class="cb" style="left:214px;top:945px;border-color:#a8a8a8"></div>
<div class="t" style="left:232px;top:945px">Auto open form</div>
<div class="t" style="left:53px;top:976px;color:#9a9a9a">View</div>
<div class="sbtn" style="left:82px;top:973px;width:75px;height:21px;border-radius:3px;background:#f2f2f2;border-color:#b8b8b8"></div>
<div class="t" style="left:87px;top:976px;color:#9a9a9a">Tree</div>
<div class="vl" style="left:135px;top:976px;height:15px;background:#dcdcdc"></div>
<svg class="abs" style="left:141px;top:977px" width="9" height="13"><path d="M0.500 5h8L4.500 0.500zM0.500 8h8L4.500 12.500z" fill="#8a8a8a"/></svg>
<div class="sbtn" style="left:277px;top:974px;width:34px;height:17px;border-radius:3px;border-color:#707070;background:linear-gradient(#f6f6f6,#e4e4e4)"></div>
<div class="t" style="left:282px;top:976px">Help</div>
<div class="abs" style="left:322px;top:131px;width:1597px;height:870px;box-sizing:border-box;border:1px solid #a0a0a0;background:#fff"></div>
<svg class="abs" style="left:324px;top:133px" width="1594" height="867" viewBox="324 133 1594 867" font-family="Liberation Sans, sans-serif">
<rect x="324" y="133" width="1594" height="867" fill="#fff"/>
<path d="M802.5 133 L802.5 186 L806 189.5 L847.5 189.5 L862.5 203.7 L865.5 235 L867 270 L871 290 L871 318 M862 202.5 L907.5 202.5 L906 155 M802 175 L817 177.5 M867.5 277 L1010 277 M978.7 277.5 L979.5 287 M1010.5 133 L1010.5 318 M1010.5 154.5 L1481 154.5 L1540 180 L1552.5 203.7 L1605 218 L1629 215 L1660 225 L1682.5 225 L1692.5 219.5 L1715 225 L1837.5 225 M1010.5 258.7 L1216 258.7 M1011 171 L1040 171 L1043 174 L1040 177 L1037 175 M1216 364 L1116 364 L1100 370 L1075 376 L1065 373.7 L1040 382.5 L1012.5 397.5 L990 410 M1173.7 295 L1280 293.7 L1917 293.7 M1200 283.7 L1216 286 M1220 136 L1266 136 M1318 154.5 L1318 342.5 M1422 133 L1422 255 L1419 270 L1422 285 L1422 468.7 M1603.7 218.7 L1603.7 293.7 M1630 133 L1630 215 M1617.5 172.5 L1630 172.5 M1630 189.5 L1647.5 189.5 L1653.7 182.5 L1658 188.7 L1647.5 189.5 M1731 155 L1815 156 L1818.7 177.5 L1837.5 177 M1500 293.7 L1500 348.7 M1422.5 357 L1468.7 350 L1630 348.7 L1636.7 355 L1637.5 361.7 M1508.7 350 L1510 362.5 L1526 363.7 L1526 398.7 L1630 398.7 L1643.7 393.7 M1341 154.5 L1340 145 L1343.7 133.7 M1350 141 L1353 138 L1356 142 L1361 153.7 M1461 155 L1465 170 M1398.7 193.7 L1402 190 L1421 190 M1398.7 193.7 L1404 194 L1406 190 M1317.5 251 L1312.5 252 L1313 260 L1317.5 260 M1475 287.5 L1475 293.7 M1701 271 L1707.5 276 L1708.7 293.7 M1837.5 133 L1837.5 225 M1837.5 293.7 L1837.5 363.7 L1917 363.7 M1837.5 151 L1850 155 L1917.5 155 M1760 258.7 L1760 293.7 M1881 258.7 L1882 293.7 M1885 365 L1886 376 L1896.7 386.7 L1895 396.7 L1883 401.7 L1910 435 L1905 443 M1895 396.7 L1896.7 410 L1905 420 L1917.5 425 M1910 435 L1917.5 433 M1010.5 433 L1010.5 572.5 M975 500 L987 502.5 L1407.5 502.5 M1012.5 573 L1422 573 M1052.5 642.5 L1760 642.5 L1917 642.5 M1145 415 L1112.5 415 L1112.5 436 L1117 438 L1121 441 L1118 445 L1112.5 451 M1220 426 L1235 425 L1242.5 418.7 L1266 418.7 M1182.5 432.5 L1217.5 432.5 M1012.5 432.5 L1033.7 432.5 L1036.5 430 L1036 426 L1034 425 M1003 435 L999 438.5 L1003 442 M1222.5 461 L1236 461 M1217.5 596 L1205 598.7 L1198.7 607.5 L1200 635 L1210 646 L1217.5 650 M1165 643 L1165 648 L1171 648 L1171 643 M1422 433.7 L1571 433.7 M1422 417 L1443.7 417 M1447.5 435 L1448.7 450 L1455 463.7 L1468.7 461 M1526 398.7 L1527.5 410 L1532.5 415 L1526 420 L1526 433.7 M1385 473.7 L1390 468.7 L1422 468.7 M1408.7 467.5 L1407.5 462.5 M1422 572.5 L1422 1000 M1318.7 533.7 L1318.7 578.7 M1318.7 539.5 L1334.5 539.5 M1373.7 627.5 L1373.7 642.5 M1507.5 648.7 L1512.5 641 M1557.5 645 L1555 650 L1558.7 655 L1552.5 662.5 L1553.7 668.7 M1733.7 538.7 L1733.7 642.5 M1755 433.7 L1747.5 450 L1742.5 475 L1737.5 485 L1727.5 507.5 L1723.7 536 L1733.7 538.7 M1733.7 573.7 L1837.5 573.7 M1711 626 L1716 630 L1716 642.5 M1600 398 L1631.7 398 L1643 393 M1725.8 509 L1733 493 L1745 473 L1747.5 450 L1755 434 L1773 434 L1779 436.7 L1785 433 M1785 424.7 L1785.8 468 L1830 468 L1831.7 475 L1836.7 478 M1831.7 466 L1855 462.8 M1836.7 478 L1845 474 L1851.7 478 L1849.7 487.5 M1837.5 478 L1837.5 921 M1811 537.5 L1837.5 537.5 M1837.5 545 L1866 544 M1733.7 573.7 L1760 573.7 M1760 557.5 L1758.7 573 M1837.5 593.7 L1857 590 M1777.5 611 L1783 618 L1837.5 618.7 M1711 626 L1716 630 L1716 642.5 M1797.5 655 L1825 655 L1830 646 L1837.5 646 M1115 712.5 L1917 712.5 M1115 712.5 L1115 747.5 L1215 747.5 L1212 743 L1200 742.5 M1166 747.5 L1166 810 L1160 822.5 M1193.7 677.5 L1217.5 677.5 M1218 782.5 L1340 783 M1273.7 712.5 L1273.7 750 L1278 753 M1150 793.7 L1166 792.5 M1170 850 L1180 852.5 L1575 852.5 M1222.5 872 L1235 882.5 L1245 900 L1257.5 903.7 L1280 910 L1305 918.7 L1330 922.5 L1630 922.5 M1208.7 903.7 L1216 905 M1210 920 L1216 920 M1422 783 L1515 783 M1630 783 L1917 782.5 M1526 713 L1526 795 M1526 817.5 L1526 1000 M1630 398.7 L1630 433 M1630 642.5 L1630 1000 M1733.7 688.7 L1733.7 782.5 M1280 755 L1305 757.5 L1318.7 762.5 L1318.7 852.5 M1475 887.5 L1526 887.5 M1475 887.5 L1475 922.5 M1472.5 842.5 L1475 820 L1526 820 M1301 702.5 L1302 713 M1447.5 713.7 L1448 722.5 L1445 724 M1588.7 695 L1590 712.5 M1346 853.7 L1346 861 M1371 842.5 L1371 852.5 M1423.7 886 L1427.5 890 L1424 895 M1517.5 883.7 L1526 883.7 M1517.5 897.5 L1526 897.5 M1515 781 L1523.7 772.5 L1526 775 M1630 928.7 L1656 928.7 L1657.5 957 M1526 923.7 L1537.5 925 L1528 930 M1683.7 867.5 L1705 858.7 L1730 860 L1747.5 852.5 M1733.7 832.5 L1747.5 840 L1755 840 L1756 845 L1752.5 850 L1747.5 845 L1747.5 840 M1696 922.5 L1698.7 921 L1700 911 M1840 783 L1840 790 L1860 787.5 L1860 783 M1786 782.5 L1786 852 M1752.5 852.5 L1917 852.5 M1752.5 852.5 L1753.7 885 M1755 870 L1837.5 870 M1755 866 L1762.5 861 L1790 860.5 M1827.5 922.5 L1917.5 922.5 M1827.5 922.5 L1822.5 926 L1837 936.5 L1858.7 957 L1850 984.6 L1853 990.4 L1846 995 M1886 913.7 L1885.7 957 M1763.7 703.7 L1764.5 712.5 M1681 921.9 L1697.6 921.9 L1699.8 911.7 M1247.5 989.5 L1262 992 L1829.6 992 M1475 900 L1475 922.5 M1475 968.7 L1475 992 M1630 957 L1761 957 L1785.8 951.8 L1802 951 M1829.6 957 L1885.7 957 M1319.5 958 L1319.5 1000 M1294.5 973.7 L1283.7 973.7 L1286 982.5 L1292.5 990 M1458.7 985 L1460 992 M1578.7 992.5 L1578.7 1000 M1734 957 L1734 1000 M1815 971.5 L1803 972 L1797.5 975.8 L1800.4 992 M1885 999 L1917 992 M1775 957 L1770 950 L1765 956 L1780 956 L1790 952" fill="none" stroke="#cfc990" stroke-width="2.3" stroke-linejoin="round" stroke-linecap="round"/>
<path d="M802.5 133 L802.5 186 L806 189.5 L847.5 189.5 L862.5 203.7 L865.5 235 L867 270 L871 290 L871 318 M862 202.5 L907.5 202.5 L906 155 M802 175 L817 177.5 M867.5 277 L1010 277 M978.7 277.5 L979.5 287 M1010.5 133 L1010.5 318 M1010.5 154.5 L1481 154.5 L1540 180 L1552.5 203.7 L1605 218 L1629 215 L1660 225 L1682.5 225 L1692.5 219.5 L1715 225 L1837.5 225 M1010.5 258.7 L1216 258.7 M1011 171 L1040 171 L1043 174 L1040 177 L1037 175 M1216 364 L1116 364 L1100 370 L1075 376 L1065 373.7 L1040 382.5 L1012.5 397.5 L990 410 M1173.7 295 L1280 293.7 L1917 293.7 M1200 283.7 L1216 286 M1220 136 L1266 136 M1318 154.5 L1318 342.5 M1422 133 L1422 255 L1419 270 L1422 285 L1422 468.7 M1603.7 218.7 L1603.7 293.7 M1630 133 L1630 215 M1617.5 172.5 L1630 172.5 M1630 189.5 L1647.5 189.5 L1653.7 182.5 L1658 188.7 L1647.5 189.5 M1731 155 L1815 156 L1818.7 177.5 L1837.5 177 M1500 293.7 L1500 348.7 M1422.5 357 L1468.7 350 L1630 348.7 L1636.7 355 L1637.5 361.7 M1508.7 350 L1510 362.5 L1526 363.7 L1526 398.7 L1630 398.7 L1643.7 393.7 M1341 154.5 L1340 145 L1343.7 133.7 M1350 141 L1353 138 L1356 142 L1361 153.7 M1461 155 L1465 170 M1398.7 193.7 L1402 190 L1421 190 M1398.7 193.7 L1404 194 L1406 190 M1317.5 251 L1312.5 252 L1313 260 L1317.5 260 M1475 287.5 L1475 293.7 M1701 271 L1707.5 276 L1708.7 293.7 M1837.5 133 L1837.5 225 M1837.5 293.7 L1837.5 363.7 L1917 363.7 M1837.5 151 L1850 155 L1917.5 155 M1760 258.7 L1760 293.7 M1881 258.7 L1882 293.7 M1885 365 L1886 376 L1896.7 386.7 L1895 396.7 L1883 401.7 L1910 435 L1905 443 M1895 396.7 L1896.7 410 L1905 420 L1917.5 425 M1910 435 L1917.5 433 M1010.5 433 L1010.5 572.5 M975 500 L987 502.5 L1407.5 502.5 M1012.5 573 L1422 573 M1052.5 642.5 L1760 642.5 L1917 642.5 M1145 415 L1112.5 415 L1112.5 436 L1117 438 L1121 441 L1118 445 L1112.5 451 M1220 426 L1235 425 L1242.5 418.7 L1266 418.7 M1182.5 432.5 L1217.5 432.5 M1012.5 432.5 L1033.7 432.5 L1036.5 430 L1036 426 L1034 425 M1003 435 L999 438.5 L1003 442 M1222.5 461 L1236 461 M1217.5 596 L1205 598.7 L1198.7 607.5 L1200 635 L1210 646 L1217.5 650 M1165 643 L1165 648 L1171 648 L1171 643 M1422 433.7 L1571 433.7 M1422 417 L1443.7 417 M1447.5 435 L1448.7 450 L1455 463.7 L1468.7 461 M1526 398.7 L1527.5 410 L1532.5 415 L1526 420 L1526 433.7 M1385 473.7 L1390 468.7 L1422 468.7 M1408.7 467.5 L1407.5 462.5 M1422 572.5 L1422 1000 M1318.7 533.7 L1318.7 578.7 M1318.7 539.5 L1334.5 539.5 M1373.7 627.5 L1373.7 642.5 M1507.5 648.7 L1512.5 641 M1557.5 645 L1555 650 L1558.7 655 L1552.5 662.5 L1553.7 668.7 M1733.7 538.7 L1733.7 642.5 M1755 433.7 L1747.5 450 L1742.5 475 L1737.5 485 L1727.5 507.5 L1723.7 536 L1733.7 538.7 M1733.7 573.7 L1837.5 573.7 M1711 626 L1716 630 L1716 642.5 M1600 398 L1631.7 398 L1643 393 M1725.8 509 L1733 493 L1745 473 L1747.5 450 L1755 434 L1773 434 L1779 436.7 L1785 433 M1785 424.7 L1785.8 468 L1830 468 L1831.7 475 L1836.7 478 M1831.7 466 L1855 462.8 M1836.7 478 L1845 474 L1851.7 478 L1849.7 487.5 M1837.5 478 L1837.5 921 M1811 537.5 L1837.5 537.5 M1837.5 545 L1866 544 M1733.7 573.7 L1760 573.7 M1760 557.5 L1758.7 573 M1837.5 593.7 L1857 590 M1777.5 611 L1783 618 L1837.5 618.7 M1711 626 L1716 630 L1716 642.5 M1797.5 655 L1825 655 L1830 646 L1837.5 646 M1115 712.5 L1917 712.5 M1115 712.5 L1115 747.5 L1215 747.5 L1212 743 L1200 742.5 M1166 747.5 L1166 810 L1160 822.5 M1193.7 677.5 L1217.5 677.5 M1218 782.5 L1340 783 M1273.7 712.5 L1273.7 750 L1278 753 M1150 793.7 L1166 792.5 M1170 850 L1180 852.5 L1575 852.5 M1222.5 872 L1235 882.5 L1245 900 L1257.5 903.7 L1280 910 L1305 918.7 L1330 922.5 L1630 922.5 M1208.7 903.7 L1216 905 M1210 920 L1216 920 M1422 783 L1515 783 M1630 783 L1917 782.5 M1526 713 L1526 795 M1526 817.5 L1526 1000 M1630 398.7 L1630 433 M1630 642.5 L1630 1000 M1733.7 688.7 L1733.7 782.5 M1280 755 L1305 757.5 L1318.7 762.5 L1318.7 852.5 M1475 887.5 L1526 887.5 M1475 887.5 L1475 922.5 M1472.5 842.5 L1475 820 L1526 820 M1301 702.5 L1302 713 M1447.5 713.7 L1448 722.5 L1445 724 M1588.7 695 L1590 712.5 M1346 853.7 L1346 861 M1371 842.5 L1371 852.5 M1423.7 886 L1427.5 890 L1424 895 M1517.5 883.7 L1526 883.7 M1517.5 897.5 L1526 897.5 M1515 781 L1523.7 772.5 L1526 775 M1630 928.7 L1656 928.7 L1657.5 957 M1526 923.7 L1537.5 925 L1528 930 M1683.7 867.5 L1705 858.7 L1730 860 L1747.5 852.5 M1733.7 832.5 L1747.5 840 L1755 840 L1756 845 L1752.5 850 L1747.5 845 L1747.5 840 M1696 922.5 L1698.7 921 L1700 911 M1840 783 L1840 790 L1860 787.5 L1860 783 M1786 782.5 L1786 852 M1752.5 852.5 L1917 852.5 M1752.5 852.5 L1753.7 885 M1755 870 L1837.5 870 M1755 866 L1762.5 861 L1790 860.5 M1827.5 922.5 L1917.5 922.5 M1827.5 922.5 L1822.5 926 L1837 936.5 L1858.7 957 L1850 984.6 L1853 990.4 L1846 995 M1886 913.7 L1885.7 957 M1763.7 703.7 L1764.5 712.5 M1681 921.9 L1697.6 921.9 L1699.8 911.7 M1247.5 989.5 L1262 992 L1829.6 992 M1475 900 L1475 922.5 M1475 968.7 L1475 992 M1630 957 L1761 957 L1785.8 951.8 L1802 951 M1829.6 957 L1885.7 957 M1319.5 958 L1319.5 1000 M1294.5 973.7 L1283.7 973.7 L1286 982.5 L1292.5 990 M1458.7 985 L1460 992 M1578.7 992.5 L1578.7 1000 M1734 957 L1734 1000 M1815 971.5 L1803 972 L1797.5 975.8 L1800.4 992 M1885 999 L1917 992 M1775 957 L1770 950 L1765 956 L1780 956 L1790 952" fill="none" stroke="#f8f5d4" stroke-width="1.0" stroke-linejoin="round" stroke-linecap="round"/>
<path d="M1579 852.3 L1681 852.3 L1682.6 855 L1677.5 919.5 L1675.5 921.5 L1632 921.5 L1632 885.6 L1579 885.6 L1577.3 883.5 L1577.3 854.5Z" fill="#fdfae4" stroke="#dcc16c" stroke-width="5" stroke-linejoin="round"/><path d="M1615 863.500h31v6.500h-31zM1619 863.500v6.500M1623 863.500v6.500M1627 863.500v6.500M1631 863.500v6.500M1635 863.500v6.500M1639 863.500v6.500M1643 863.500v6.500M1622 871h35M1625 871v3.500M1629 871v3.500M1633 871v3.500M1637 871v3.500M1641 871v3.500M1645 871v3.500M1649 871v3.500M1653 871v3.500M1577.500 873L1613.700 854.400M1646 868H1681M1636.500 859V876M1681.300 856V895M1633 893.500h7M1634 904h10M1668 886h12M1672 886v8M1633.500 898v6M1644 889.500l5 1" fill="none" stroke="#d9d3a2" stroke-width="2" stroke-linecap="round"/><path d="M1615 863.500h31v6.500h-31zM1619 863.500v6.500M1623 863.500v6.500M1627 863.500v6.500M1631 863.500v6.500M1635 863.500v6.500M1639 863.500v6.500M1643 863.500v6.500M1622 871h35M1625 871v3.500M1629 871v3.500M1633 871v3.500M1637 871v3.500M1641 871v3.500M1645 871v3.500M1649 871v3.500M1653 871v3.500M1577.500 873L1613.700 854.400M1646 868H1681M1636.500 859V876M1681.300 856V895M1633 893.500h7M1634 904h10M1668 886h12M1672 886v8M1633.500 898v6M1644 889.500l5 1" fill="none" stroke="#fcf9e0" stroke-width="0.800" stroke-linecap="round"/><rect x="1676.500" y="851.500" width="7" height="8" rx="1.500" fill="#c4b8a8" stroke="#2a2a2a" stroke-width="0.900"/><rect x="953" y="308" width="9.500" height="7.500" rx="1" fill="#cdb8a6" stroke="#4a4038" stroke-width="0.800"/>
<path d="M517.5 133C518.2 137.5 515.7 141.5 520 150C524.3 158.5 529 157.7 533.7 165C538.4 172.3 535.6 170.8 537.5 177.5C539.4 184.2 539.7 182.7 541 190C542.3 197.3 540.4 198.7 542.5 205C544.6 211.3 541.4 205.7 548.7 213.7C556 221.7 557.7 224.7 570 235C582.3 245.3 584.1 244.2 595 252.5C605.9 260.8 598.3 256 611 266C623.7 276 626.8 278.9 642.5 290C658.2 301.1 658.4 300.6 670 307.5C681.6 314.4 678 311.6 686 316C694 320.4 648.3 321.9 700 324C751.7 326.1 835.7 326.1 880 324C924.3 321.9 870.3 322.4 866 316C861.7 309.6 866 307.3 863.7 300C861.4 292.7 863.8 292 857.5 288.7C851.2 285.4 847.7 288.8 840 287.5C832.3 286.2 832.4 287 828.7 283.7C825 280.4 829.7 280 826 275C822.3 270 819.9 271 815 265C810.1 259 808.8 257.8 807.5 252.5C806.2 247.2 807.3 249 810 245C812.7 241 811.5 240.2 817.5 237.5C823.5 234.8 826.8 238.3 832.5 235C838.2 231.7 837.4 231.7 838.7 225C840 218.3 841.2 216 837.5 210C833.8 204 835 206.4 825 202.5C815 198.6 818 199.5 800 195.5C782 191.5 778.8 192.7 757.5 187.5C736.2 182.3 738 182 720 176C702 170 702 170.6 690 165C678 159.4 684.3 159.3 675 155C665.7 150.7 669.7 152.7 655 148.7C640.3 144.7 636.7 144.2 620 140C603.3 135.8 599.8 134.9 592.5 133L592.5 120L517.5 120Z M722 440 L724 454 L745 457.5 L762 456 L765 440Z M1076 133C1077 132 1082.5 130.8 1085 133C1087.5 135.2 1090.3 142.8 1091 146C1091.7 149.2 1090.3 151.8 1089 152C1087.7 152.2 1084.7 149.2 1083 147C1081.3 144.8 1080.2 141.3 1079 139C1077.8 136.7 1075 134 1076 133Z M1078.5 171.6C1078.4 173.5 1078.9 173.1 1075.1 174.2C1071.4 175.4 1072.5 175.3 1067.3 175C1062.1 174.7 1063.2 174.9 1059.6 173.4C1056 171.9 1056.4 172.3 1056.5 170.4C1056.6 168.5 1056.1 168.9 1059.9 167.8C1063.6 166.6 1062.5 166.7 1067.7 167C1072.9 167.3 1071.8 167.1 1075.4 168.6C1079 170.1 1078.6 169.7 1078.5 171.6Z M952 196.5C953 195.5 959 195 962 194C965 193 969 190.2 970 190.5C971 190.8 969.7 194.1 968 196C966.3 197.9 962 201.3 960 202C958 202.7 957.3 200.9 956 200C954.7 199.1 951 197.5 952 196.5Z M1012 192.5C1013.6 191.5 1018.8 193.2 1022 194C1025.2 194.8 1031 196.5 1031 197.5C1031 198.5 1024.5 198.6 1022 200C1019.5 201.4 1017.6 206 1016 206C1014.4 206 1013.2 202.2 1012.5 200C1011.8 197.8 1010.4 193.5 1012 192.5Z M1035 210C1037.5 207.9 1045.4 207.1 1050 207.5C1054.6 207.9 1058.3 212.1 1062.5 212.5C1066.7 212.9 1071.1 210.6 1075 210C1078.9 209.4 1083.9 208.1 1086 208.7C1088.1 209.3 1089.3 211.8 1087.5 213.7C1085.7 215.6 1077.3 217.5 1075 220C1072.7 222.5 1077.5 225.8 1073.7 228.7C1070 231.6 1060.6 232.9 1052.5 237.5C1044.4 242.1 1030.8 253.1 1025 256C1019.2 258.9 1018.8 256.4 1017.5 255C1016.2 253.6 1014.2 250.8 1017.5 247.5C1020.8 244.2 1033.3 239 1037.5 235C1041.7 231 1042.9 224.1 1042.5 223.7C1042.1 223.3 1037.8 231 1035 232.5C1032.2 234 1027.7 234.2 1026 232.5C1024.3 230.8 1023.5 224.6 1025 222.5C1026.5 220.4 1033.3 222.1 1035 220C1036.7 217.9 1032.5 212.1 1035 210Z M1194.5 223.2C1193.9 227.7 1194.7 226.8 1189 229.2C1183.2 231.6 1184.8 231.5 1177.4 230.4C1169.9 229.4 1171.4 230 1166.6 226.1C1161.7 222.2 1162.2 223.2 1162.9 218.8C1163.5 214.3 1162.7 215.2 1168.4 212.8C1174.2 210.4 1172.6 210.5 1180 211.6C1187.5 212.6 1186 212 1190.8 215.9C1195.7 219.8 1195.2 218.8 1194.5 223.2Z M1230 208C1232.5 207.3 1239.7 207.2 1245 208C1250.3 208.8 1256.2 211.2 1262 213C1267.8 214.8 1273.7 217.8 1280 219C1286.3 220.2 1294.2 219.5 1300 220C1305.8 220.5 1312.5 220.8 1315 222C1317.5 223.2 1317.5 226 1315 227C1312.5 228 1305.8 228.2 1300 228C1294.2 227.8 1287.5 227.3 1280 226C1272.5 224.7 1261.7 221.7 1255 220C1248.3 218.3 1244.2 217.3 1240 216C1235.8 214.7 1231.7 213.3 1230 212C1228.3 210.7 1227.5 208.7 1230 208Z M1293 241.7C1293.1 244 1293.9 243.5 1287.6 245.6C1281.4 247.7 1283.3 247.4 1274.3 248C1265.4 248.6 1267.3 248.7 1260.8 247.5C1254.4 246.2 1255.2 246.7 1255 244.3C1254.9 242 1254.1 242.5 1260.4 240.4C1266.6 238.3 1264.7 238.6 1273.7 238C1282.6 237.4 1280.7 237.3 1287.2 238.5C1293.6 239.8 1292.8 239.3 1293 241.7Z M1276 273C1276.5 271.8 1280.5 269.3 1283 268C1285.5 266.7 1290.2 264.5 1291 265C1291.8 265.5 1289.8 269.3 1288 271C1286.2 272.7 1282 274.7 1280 275C1278 275.3 1275.5 274.2 1276 273Z M1037.5 280C1037.9 278.3 1044.8 276.3 1050 275C1055.2 273.7 1065.5 271.5 1068.7 272C1072 272.5 1071.8 275.2 1069.5 278C1067.2 280.8 1058.7 287.5 1055 288.7C1051.3 289.9 1050.4 286.4 1047.5 285C1044.6 283.6 1037.1 281.7 1037.5 280Z M1011 295C1013.2 292.9 1020 292.2 1025 291C1030 289.8 1041 286.4 1041 287.5C1041 288.6 1029.8 294.8 1025 297.5C1020.2 300.2 1014.3 304.1 1012 303.7C1009.7 303.3 1008.8 297.1 1011 295Z M981 311C982.2 308.9 993.3 302.2 997.5 300C1001.7 297.8 1004.6 296.5 1006 297.5C1007.4 298.5 1008.7 303.5 1006 306C1003.3 308.5 994.2 311.7 990 312.5C985.8 313.3 979.8 313.1 981 311Z M949.7 302C949.7 305.5 950 304.8 947.4 307.3C944.7 309.8 945.5 309.5 941.7 309.5C937.9 309.5 938.7 309.8 936 307.3C933.4 304.8 933.7 305.5 933.7 302C933.7 298.5 933.4 299.2 936 296.7C938.7 294.2 937.9 294.5 941.7 294.5C945.5 294.5 944.7 294.2 947.4 296.7C950 299.2 949.7 298.5 949.7 302Z M1155 266C1155.8 265.2 1158.3 263.1 1161 265C1163.7 266.9 1169.5 273.6 1171 277.5C1172.5 281.4 1171.4 286.4 1170 288.7C1168.6 290.9 1164.2 291.4 1162.5 291C1160.8 290.6 1159.8 287.8 1160 286C1160.2 284.2 1164.4 282.7 1163.7 280C1163 277.3 1157.5 272.3 1156 270C1154.5 267.7 1154.2 266.8 1155 266Z M1122 315.5C1118.8 319.1 1120.1 318.9 1113 317C1106 315.1 1107.6 316.1 1100.8 309.9C1094 303.8 1095.1 305.4 1092.5 298.5C1089.9 291.7 1089.9 293 1093 289.5C1096.2 285.9 1094.9 286.1 1102 288C1109 289.9 1107.4 288.9 1114.2 295.1C1121 301.2 1119.9 299.6 1122.5 306.5C1125.1 313.3 1125.1 312 1122 315.5Z M1149 315C1149.4 314.8 1152.3 319.1 1155 319C1157.7 318.9 1162.7 314.3 1165 314.5C1167.3 314.7 1169.1 315.3 1168.7 320C1168.3 324.7 1164.8 337.5 1162.5 342.5C1160.2 347.5 1156.9 349.6 1155 350C1153.1 350.4 1150.6 348.8 1151 345C1151.4 341.2 1157.2 331.7 1157.5 327.5C1157.8 323.3 1153.9 322.1 1152.5 320C1151.1 317.9 1148.6 315.2 1149 315Z M1269.8 304.6C1269.4 306.1 1269.7 305.9 1267.5 306.5C1265.2 307.1 1265.8 307.1 1263.1 306.4C1260.4 305.6 1260.9 305.9 1259.3 304.3C1257.6 302.6 1257.8 303 1258.2 301.4C1258.6 299.9 1258.3 300.1 1260.5 299.5C1262.8 298.9 1262.2 298.9 1264.9 299.6C1267.6 300.4 1267.1 300.1 1268.7 301.7C1270.4 303.4 1270.2 303 1269.8 304.6Z M1293 135C1293 136.2 1293.4 135.9 1290.4 136.8C1287.4 137.6 1288.2 137.5 1284 137.5C1279.8 137.5 1280.6 137.6 1277.6 136.8C1274.6 135.9 1275 136.2 1275 135C1275 133.8 1274.6 134.1 1277.6 133.2C1280.6 132.4 1279.8 132.5 1284 132.5C1288.2 132.5 1287.4 132.4 1290.4 133.2C1293.4 134.1 1293 133.8 1293 135Z M1351 288C1351 290.1 1351.4 289.7 1348.4 291.2C1345.4 292.7 1346.2 292.5 1342 292.5C1337.8 292.5 1338.6 292.7 1335.6 291.2C1332.6 289.7 1333 290.1 1333 288C1333 285.9 1332.6 286.3 1335.6 284.8C1338.6 283.3 1337.8 283.5 1342 283.5C1346.2 283.5 1345.4 283.3 1348.4 284.8C1351.4 286.3 1351 285.9 1351 288Z M1350 319C1350 321.4 1350.4 320.9 1346.8 322.5C1343.1 324.2 1344.2 324 1339 324C1333.8 324 1334.9 324.2 1331.2 322.5C1327.6 320.9 1328 321.4 1328 319C1328 316.6 1327.6 317.1 1331.2 315.5C1334.9 313.8 1333.8 314 1339 314C1344.2 314 1343.1 313.8 1346.8 315.5C1350.4 317.1 1350 316.6 1350 319Z M1361 353.7C1360.8 355.3 1361.2 355 1358.6 355.9C1356 356.9 1356.7 356.8 1353.2 356.5C1349.7 356.2 1350.4 356.4 1348 355C1345.6 353.6 1345.9 354 1346 352.3C1346.2 350.7 1345.8 351 1348.4 350.1C1351 349.1 1350.3 349.2 1353.8 349.5C1357.3 349.8 1356.6 349.6 1359 351C1361.4 352.4 1361.1 352 1361 353.7Z M1382.5 358.6C1382.1 359.8 1382.5 359.6 1379.8 359.6C1377.2 359.6 1377.9 359.7 1374.6 358.5C1371.3 357.3 1371.9 357.7 1369.9 356C1367.8 354.3 1368 354.6 1368.5 353.4C1368.9 352.2 1368.5 352.4 1371.2 352.4C1373.8 352.4 1373.1 352.3 1376.4 353.5C1379.7 354.7 1379.1 354.3 1381.1 356C1383.2 357.7 1383 357.4 1382.5 358.6Z M1303.7 380C1305.8 375.8 1316.3 369.4 1322.5 367.5C1328.7 365.6 1337.2 366.6 1341 368.7C1344.8 370.8 1344.8 376.4 1345 380C1345.2 383.6 1341.2 388.8 1342.5 390C1343.8 391.2 1349 388.2 1352.5 387.5C1356 386.8 1362.5 385.2 1363.7 386C1365 386.8 1362.7 390.8 1360 392.5C1357.3 394.2 1351.2 395.8 1347.5 396C1343.8 396.2 1341.7 393.2 1337.5 393.7C1333.3 394.1 1327.1 398.9 1322.5 398.7C1317.9 398.5 1313.1 395.6 1310 392.5C1306.9 389.4 1301.6 384.2 1303.7 380Z M1523.7 230C1523.7 226.3 1528.1 216.9 1532.5 213.7C1536.9 210.4 1544.8 210.3 1550 210.5C1555.2 210.7 1561.6 213.2 1563.7 215C1565.8 216.8 1559.8 218.1 1562.5 221C1565.2 223.9 1575.2 228.5 1580 232.5C1584.8 236.5 1590.2 241.1 1591 245C1591.8 248.9 1589.2 253.1 1585 256C1580.8 258.9 1570.6 262.7 1566 262.5C1561.4 262.3 1563.5 257.5 1557.5 255C1551.5 252.5 1535.2 249.8 1530 247.5C1524.8 245.2 1528.5 241.8 1526 241C1523.5 240.2 1516.7 242.9 1515 242.5C1513.3 242.1 1513.1 239.8 1516 238.7C1518.9 237.6 1531.2 237.4 1532.5 236C1533.8 234.6 1523.7 233.7 1523.7 230Z M1618.7 218.7C1620.2 220.2 1623.5 232.3 1630 235C1636.5 237.7 1651 234 1657.5 235C1664 236 1666.5 236.8 1668.7 241C1671 245.2 1668.7 254.3 1671 260C1673.3 265.7 1679.2 271.7 1682.5 275C1685.8 278.3 1692.1 278.7 1691 280C1689.9 281.3 1680.3 283.4 1676 283C1671.7 282.6 1671 282.2 1665 277.5C1659 272.8 1645.8 260.2 1640 255C1634.2 249.8 1631.2 248.5 1630 246C1628.8 243.5 1634 243.3 1632.5 240C1631 236.7 1623.3 229.6 1621 226C1618.7 222.4 1617.2 217.2 1618.7 218.7Z M1678 363C1678.3 358.1 1677.1 357 1683 351.7C1688.9 346.4 1691 345.5 1700 343C1709 340.5 1708.7 344 1716.7 342.5C1724.7 341 1723.3 338.4 1730 337.5C1736.7 336.6 1737.7 336.5 1741.7 339C1745.7 341.5 1740.1 342.4 1745 346.7C1749.9 351 1756 350.7 1760 355C1764 359.3 1762.2 358.5 1760 363C1757.8 367.5 1753 368 1751.7 371.7C1750.4 375.4 1751 374.5 1755 376.7C1759 378.9 1760.9 376.5 1766.7 380C1772.5 383.5 1771.4 383.9 1776.7 390C1782 396.1 1780.5 397 1786.7 403C1792.9 409 1795.1 410.6 1800 412.5C1804.9 414.4 1802.9 413.3 1805 410C1807.1 406.7 1803.5 403.7 1808 400C1812.5 396.3 1814 396.3 1821.7 396C1829.4 395.7 1829.2 395.9 1836.7 399C1844.2 402.1 1844.3 403.2 1850 407.5C1855.7 411.8 1855.3 410.6 1858 415C1860.7 419.4 1857.7 420.9 1860 424C1862.3 427.1 1861.4 426.4 1866.7 426.7C1872 427 1873.3 423.3 1880 425C1886.7 426.7 1888.2 428.5 1891.7 433C1895.2 437.5 1895.3 436.7 1893 441.7C1890.7 446.7 1890 447.5 1883 451.7C1876 455.9 1875.5 455.6 1866.7 457.5C1857.9 459.4 1858 460.5 1850 459C1842 457.5 1841.8 456.3 1836.7 451.7C1831.6 447.1 1831.8 446.4 1830.8 441.7C1829.8 437 1829.5 437.3 1833 434C1836.5 430.7 1842.1 431.2 1844 429.5C1845.9 427.8 1845.9 428.5 1840 427.5C1834.1 426.5 1831 427.8 1821.7 425.8C1812.4 423.8 1815.3 424.7 1805 420C1794.7 415.3 1795 413.9 1783 408C1771 402.1 1769.7 402 1760 398C1750.3 394 1752.9 392 1746.7 393C1740.5 394 1740.4 397.2 1736.7 401.7C1733 406.2 1734.1 403.3 1733 410C1731.9 416.7 1734.6 419.2 1732.5 426.7C1730.4 434.2 1730.2 432.7 1725 438C1719.8 443.3 1717.7 441.7 1713 446.7C1708.3 451.7 1708.3 451 1707.5 456.7C1706.7 462.4 1710.5 461 1710 468C1709.5 475 1706.1 474.5 1705.8 483C1705.5 491.5 1708.9 492.1 1708.7 500C1708.5 507.9 1710 503.8 1705 512.5C1700 521.2 1697.3 526.2 1690 532.5C1682.7 538.8 1684.8 536.7 1677.5 536C1670.2 535.3 1668.5 533.7 1662.5 530C1656.5 526.3 1658.3 523.3 1655 522C1651.7 520.7 1650 521.3 1650 525C1650 528.7 1649.7 531.7 1655 536C1660.3 540.3 1663.7 537.3 1670 541C1676.3 544.7 1676.7 544.9 1678.7 550C1680.7 555.1 1681.2 553.3 1677.5 560C1673.8 566.7 1672.3 567 1665 575C1657.7 583 1659.3 583.7 1650 590C1640.7 596.3 1640 596.4 1630 598.7C1620 601 1617.8 600 1612.5 598.7C1607.2 597.4 1608 597.7 1610 593.7C1612 589.7 1618.7 588.7 1620 583.7C1621.3 578.7 1621 581.3 1615 575C1609 568.7 1604.8 567 1597.5 560C1590.2 553 1589.5 553.4 1587.5 548.7C1585.5 544 1586 546.8 1590 542.5C1594 538.2 1599.2 537.8 1602.5 532.5C1605.8 527.2 1605.8 524.5 1602.5 522.5C1599.2 520.5 1598.7 525.7 1590 525C1581.3 524.3 1582 520.7 1570 520C1558 519.3 1555 523.2 1545 522.5C1535 521.8 1539.8 521.2 1532.5 517.5C1525.2 513.8 1528.8 511.4 1517.5 508.7C1506.2 506 1498.4 508.8 1490 507.5C1481.6 506.2 1484.7 506.4 1486 503.7C1487.3 501 1492.9 502.8 1495 497.5C1497.1 492.2 1495 489.4 1493.7 483.7C1492.4 478 1490.3 479.4 1490 476C1489.7 472.6 1488.8 472.6 1492.5 471C1496.2 469.4 1501 468.9 1503.7 470C1506.4 471.1 1501.9 473.4 1502.5 475C1503.1 476.6 1501.3 477.7 1506 476C1510.7 474.3 1510.9 472.3 1520 468.7C1529.1 465.1 1532 463.8 1540 462.5C1548 461.2 1545 461.2 1550 463.7C1555 466.2 1549.4 471 1558.7 472C1568 473 1575.1 470.7 1585 467.5C1594.9 464.3 1590 463.1 1596 460C1602 456.9 1604.4 458 1607.5 456C1610.6 454 1612.5 454.1 1607.5 452.5C1602.5 450.9 1595 454 1588.7 450C1582.4 446 1584.4 443.5 1583.7 437.5C1583 431.5 1580.3 432.5 1586 427.5C1591.7 422.5 1592.5 422.6 1605 418.7C1617.5 414.8 1623.2 415.9 1633 413C1642.8 410.1 1634 411 1641.7 408C1649.4 405 1652 405.4 1661.7 401.7C1671.4 398 1671.3 398.2 1678 394C1684.7 389.8 1683.3 389.5 1686.7 385.8C1690.1 382.1 1692.1 384.2 1690.8 380C1689.5 375.8 1685.1 374.5 1681.7 370C1678.3 365.5 1677.7 367.9 1678 363Z M1627.5 442C1626 440.2 1633 433 1638 432.5C1643 432 1656 437.2 1657.5 439C1659 440.8 1651.7 443 1646.7 443.5C1641.7 444 1629 443.8 1627.5 442Z M1547.5 475C1548.3 474.6 1545.2 479.2 1551 482.5C1556.8 485.8 1577.9 491.9 1582.5 495C1587.1 498.1 1581.2 499.3 1578.7 501C1576.2 502.7 1571.5 505.8 1567.5 505C1563.5 504.2 1558.6 499.3 1555 496C1551.4 492.7 1547.2 488.5 1546 485C1544.8 481.5 1546.7 475.4 1547.5 475Z M1561 452.5C1561.8 450.7 1572.4 447.4 1575 448C1577.6 448.6 1577.5 454.2 1576.7 456C1575.9 457.8 1572.6 459.3 1570 458.7C1567.4 458.1 1560.2 454.3 1561 452.5Z M1441 570C1442.9 567.7 1451.2 566.3 1455 565C1458.8 563.7 1461.5 560.8 1463.7 562C1465.9 563.2 1468.6 570.3 1468 572.5C1467.4 574.7 1462.2 575.4 1460 575C1457.8 574.6 1456.5 569 1455 570C1453.5 571 1452.9 579.5 1451 581C1449.1 582.5 1445.4 580.5 1443.7 578.7C1442 576.9 1439.1 572.3 1441 570Z M1745 479C1744.4 477.3 1750.2 473 1753 471.7C1755.8 470.4 1759.3 470.2 1761.7 471C1764.1 471.8 1768.3 474.9 1767.5 476.7C1766.7 478.5 1760.5 481.3 1756.7 481.7C1753 482.1 1745.6 480.7 1745 479Z M1930 482C1927.9 465.8 1922.5 482 1917.5 482.5C1912.5 483 1905.8 483.5 1900 485C1894.2 486.5 1887.6 489.2 1883 491.7C1878.4 494.2 1873.4 496.9 1872.5 500C1871.6 503.1 1877.1 506.7 1877.5 510C1877.9 513.3 1874.6 514.2 1875 520C1875.4 525.8 1876.2 537.9 1880 545C1883.8 552.1 1891.2 557.3 1897.5 562.5C1903.8 567.7 1912.1 573.1 1917.5 576C1922.9 578.9 1927.9 595.7 1930 580C1932.1 564.3 1932.1 498.2 1930 482Z M1930 150C1927.9 145.8 1920.8 155.2 1917.5 157.5C1914.2 159.8 1911.5 161.2 1910 163.7C1908.5 166.2 1908.3 169.6 1908.7 172.5C1909.1 175.4 1911 179.3 1912.5 181C1914 182.7 1914.6 182.2 1917.5 182.5C1920.4 182.8 1927.9 188.4 1930 183C1932.1 177.6 1932.1 154.2 1930 150Z M1871 230.5C1870.2 229.8 1876 226.1 1880 224C1884 221.9 1891 219.6 1895 218C1899 216.4 1902.7 214.2 1903.7 214.5C1904.7 214.8 1904.1 217.8 1901 220C1897.9 222.2 1890 226.2 1885 228C1880 229.8 1871.8 231.2 1871 230.5Z M1866 317.8C1865.9 319.4 1866.3 319.1 1862.6 320C1858.8 320.9 1859.9 320.9 1854.8 320.5C1849.6 320.1 1850.6 320.3 1847.1 318.9C1843.5 317.5 1843.9 317.9 1844 316.2C1844.1 314.6 1843.7 314.9 1847.4 314C1851.2 313.1 1850.1 313.1 1855.2 313.5C1860.4 313.9 1859.4 313.7 1862.9 315.1C1866.5 316.5 1866.1 316.1 1866 317.8Z M1230 646C1231.2 645.3 1238.5 644.9 1242.5 646C1246.5 647.1 1252.5 651 1253.7 652.5C1255 654 1253.1 655.4 1250 655C1246.9 654.6 1238.3 651.5 1235 650C1231.7 648.5 1228.8 646.7 1230 646Z M1257.5 656C1258.8 655.7 1265.4 658.7 1270 661C1274.6 663.3 1277.9 666.4 1285 670C1292.1 673.6 1303.3 678.3 1312.5 682.5C1321.7 686.7 1336.1 692.6 1340 695C1343.9 697.4 1341.4 698.2 1336 697C1330.6 695.8 1316.8 691.6 1307.5 687.5C1298.2 683.4 1287.6 676.6 1280 672.5C1272.4 668.4 1265.8 665.8 1262 663C1258.2 660.2 1256.2 656.3 1257.5 656Z M1371 813C1369.8 809.8 1377.5 796.5 1380 796C1382.5 795.5 1382.7 807.2 1386 810C1389.3 812.8 1394.3 811.2 1400 812.5C1405.7 813.8 1410.8 816.5 1420 817.5C1429.2 818.5 1445.8 819.5 1455 818.7C1464.2 817.9 1469.6 815.6 1475 812.5C1480.4 809.4 1481.9 804.2 1487.5 800C1493.1 795.8 1504.5 789.2 1508.7 787.5C1512.9 785.8 1514.8 787.1 1512.5 790C1510.2 792.9 1500.8 800.4 1495 805C1489.2 809.6 1484.2 814.4 1477.5 817.5C1470.8 820.6 1462.1 822.5 1455 823.7C1447.9 824.9 1441.7 825.3 1435 824.5C1428.3 823.7 1422.9 820.3 1415 818.7C1407.1 817.1 1394.8 816 1387.5 815C1380.2 814 1372.2 816.2 1371 813Z M1702.7 903.6C1704 902.9 1708.5 903.3 1710 904.4C1711.5 905.5 1712.2 907.8 1712 910C1711.8 912.2 1708.3 914.9 1708.5 917.5C1708.7 920.1 1709.8 922.6 1713 925.5C1716.2 928.4 1722.7 932.7 1727.5 935C1732.3 937.3 1737.6 938.7 1742 939.4C1746.4 940.1 1749.4 939.9 1753.7 939C1758 938.1 1765.2 935 1768 934C1770.8 933 1769.5 932.5 1770.5 932.8C1771.5 933.1 1771.2 935.2 1774 935.7C1776.8 936.2 1784 936.4 1787 935.7C1790 935 1790.7 931.5 1791.7 931.4C1792.7 931.3 1790.8 933.7 1793 935C1795.2 936.3 1802.1 938.8 1804.8 939.4C1807.5 940 1808 938.1 1809 938.6C1810 939.1 1809.3 941.4 1810.6 942.3C1811.8 943.1 1815.3 942.8 1816.5 943.7C1817.7 944.7 1816.3 945.3 1818 948C1819.7 950.7 1824.3 956.9 1826.7 959.8C1829.1 962.7 1830.7 964.1 1832.5 965.6C1834.3 967.1 1837.5 967.5 1837.6 968.5C1837.7 969.5 1833.6 970.3 1833 971.5C1832.4 972.7 1831.7 973.1 1834 975.8C1836.3 978.5 1845.3 985.3 1847 987.5C1848.7 989.7 1846.4 988.8 1844 989C1841.6 989.2 1836.2 989.7 1832.5 989C1828.8 988.3 1824.6 986.6 1822 984.6C1819.4 982.6 1818.2 980.2 1817 977C1815.8 973.8 1816.5 969.7 1815 965.6C1813.5 961.5 1810.4 955.9 1807.7 952.5C1805 949.1 1802.7 946.8 1799 945C1795.3 943.2 1790.5 942.1 1785.8 941.6C1781.1 941.1 1775.8 941.6 1771 942.3C1766.2 943 1761 945.5 1756.7 946C1752.4 946.5 1749 945.4 1745 945C1741 944.6 1735.4 944.6 1733 943.7C1730.6 942.8 1733.3 941.5 1730.4 939.4C1727.5 937.3 1720.2 934.3 1715.8 931.4C1711.4 928.5 1706.3 925.7 1704 921.9C1701.7 918.1 1702.2 911.8 1702 908.7C1701.8 905.7 1701.4 904.3 1702.7 903.6Z" fill="#a6bfde" fill-rule="evenodd" stroke="#2a2a2a" stroke-width="0.9" stroke-dasharray="4 1.500 1 1.500"/>
<path d="M430 287.5L466 287.5C466 296 456 302.5 447 302.5C438 302.5 430 296 430 287.5Z M359.2 391.5C358.4 393.8 358.8 393.4 356.8 394.4C354.8 395.5 355.3 395.4 353.3 394.7C351.3 394 351.6 394.3 350.8 392.2C350 390.2 350 390.7 350.8 388.5C351.6 386.2 351.2 386.6 353.2 385.6C355.2 384.5 354.7 384.6 356.7 385.3C358.7 386 358.4 385.7 359.2 387.8C360 389.8 360 389.3 359.2 391.5Z M401 396C401 397.6 401.4 397.3 398.4 398.5C395.4 399.6 396.2 399.5 392 399.5C387.8 399.5 388.6 399.6 385.6 398.5C382.6 397.3 383 397.6 383 396C383 394.4 382.6 394.7 385.6 393.5C388.6 392.4 387.8 392.5 392 392.5C396.2 392.5 395.4 392.4 398.4 393.5C401.4 394.7 401 394.4 401 396Z M763.9 584.7C763.1 586.1 763.5 586 761.1 586C758.8 586 759.4 586.1 757 584.7C754.5 583.3 754.9 583.7 753.8 581.7C752.6 579.7 752.7 580.1 753.5 578.7C754.3 577.3 753.9 577.4 756.3 577.4C758.6 577.4 758 577.3 760.5 578.7C762.9 580.1 762.5 579.7 763.6 581.7C764.8 583.7 764.7 583.3 763.9 584.7Z M327.5 707.5C329.8 704.1 335 696.7 340 692.5C345 688.3 350.4 684.5 357.5 682.5C364.6 680.5 375.4 680.1 382.5 680.5C389.6 680.9 394.6 682.2 400 685C405.4 687.8 412.3 693.3 415 697.5C417.7 701.7 417.2 705 416 710C414.8 715 409.8 722.5 407.5 727.5C405.2 732.5 405.4 737.1 402.5 740C399.6 742.9 395.4 744.1 390 745C384.6 745.9 376.3 746.2 370 745.5C363.7 744.8 356.2 743.2 352 741C347.8 738.8 347.3 733.8 345 732.5C342.7 731.2 340.5 734.2 338 733C335.5 731.8 330.9 727.6 330 725C329.1 722.4 333.2 719.5 332.5 717.5C331.8 715.5 326.8 714.7 326 713C325.2 711.3 325.2 710.9 327.5 707.5Z M716 700C717.2 697.7 720.2 695.4 725 693.7C729.8 692 740.4 689.8 745 690C749.6 690.2 752.1 692.1 752.5 695C752.9 697.9 748.1 704.2 747.5 707.5C746.9 710.8 750.4 713.3 748.7 715C747 716.7 741 717.9 737.5 717.5C734 717.1 730.8 714.2 727.5 712.5C724.2 710.8 719.4 709.6 717.5 707.5C715.6 705.4 714.8 702.3 716 700Z M588.7 773.7C588.7 775.6 588.9 775.2 587.2 776.5C585.6 777.9 586.1 777.7 583.7 777.7C581.3 777.7 581.8 777.9 580.2 776.5C578.5 775.2 578.7 775.6 578.7 773.7C578.7 771.8 578.5 772.2 580.2 770.9C581.8 769.5 581.3 769.7 583.7 769.7C586.1 769.7 585.6 769.5 587.2 770.9C588.9 772.2 588.7 771.8 588.7 773.7Z M605.4 806.4C605.7 808.3 606 807.8 603.5 809.5C601 811.2 601.8 810.9 598.1 811.5C594.3 812 595.1 812 592.3 811.1C589.5 810.1 589.8 810.5 589.6 808.6C589.3 806.7 589 807.2 591.5 805.5C594 803.8 593.2 804.1 596.9 803.5C600.7 803 599.9 803 602.7 803.9C605.5 804.9 605.2 804.5 605.4 806.4Z M605.3 845C604.7 846 605 845.9 603.2 845.8C601.3 845.7 601.8 845.8 599.8 844.7C597.7 843.5 598.1 843.8 597.1 842.3C596 840.7 596.1 841 596.7 840C597.3 839 597 839.1 598.8 839.2C600.7 839.3 600.2 839.2 602.2 840.3C604.3 841.5 603.9 841.2 604.9 842.7C606 844.3 605.9 844 605.3 845Z M619.1 853.4C618.6 854.7 619 854.5 616.4 854.7C613.9 854.8 614.6 854.9 611.5 853.8C608.4 852.7 609 853 607.1 851.3C605.3 849.6 605.4 849.9 605.9 848.6C606.4 847.3 606 847.5 608.6 847.3C611.1 847.2 610.4 847.1 613.5 848.2C616.6 849.3 616 849 617.9 850.7C619.7 852.4 619.6 852.1 619.1 853.4Z M633.7 862.5C633.7 864.4 633.9 864 632.2 865.3C630.6 866.7 631.1 866.5 628.7 866.5C626.3 866.5 626.8 866.7 625.2 865.3C623.5 864 623.7 864.4 623.7 862.5C623.7 860.6 623.5 861 625.2 859.7C626.8 858.3 626.3 858.5 628.7 858.5C631.1 858.5 630.6 858.3 632.2 859.7C633.9 861 633.7 860.6 633.7 862.5Z M517.5 866C517.5 864.8 521.9 863.2 524 862C526.1 860.8 528 858.8 530 859C532 859.2 534.1 862 536 863C537.9 864 541.5 864 541.5 865C541.5 866 538.9 868.3 536 869C533.1 869.7 527.1 869.5 524 869C520.9 868.5 517.5 867.2 517.5 866Z M456.4 883.5C456.1 885.2 456.4 884.9 454.2 885.7C452.1 886.5 452.7 886.4 449.9 885.9C447.1 885.5 447.7 885.7 445.9 884.2C444.1 882.7 444.3 883.1 444.6 881.5C444.9 879.8 444.6 880.1 446.8 879.3C448.9 878.5 448.3 878.6 451.1 879.1C453.9 879.5 453.3 879.3 455.1 880.8C456.9 882.3 456.7 881.9 456.4 883.5Z M605.7 895.5C607 897.2 606.9 896.7 605.9 899.3C604.8 901.8 605.3 901.3 602.6 903.2C599.9 905.1 600.5 904.8 597.8 904.9C595 905.1 595.5 905.3 594.3 903.5C593 901.8 593.1 902.3 594.1 899.7C595.2 897.2 594.7 897.7 597.4 895.8C600.1 893.9 599.5 894.2 602.2 894.1C605 893.9 604.5 893.7 605.7 895.5Z M725 888C726 887 728.2 886.3 730 887C731.8 887.7 733.7 890.8 736 892C738.3 893.2 742.8 892.5 744 894C745.2 895.5 744.5 899.5 743 901C741.5 902.5 737.7 903.3 735 903C732.3 902.7 728.8 900.7 727 899C725.2 897.3 724.3 894.8 724 893C723.7 891.2 724 889 725 888Z M741 932C741.8 929.3 746.2 925.8 750 924C753.8 922.2 759.3 920.2 764 921C768.7 921.8 772 927.5 778 929C784 930.5 794.3 929.5 800 930C805.7 930.5 809.2 930.3 812 932C814.8 933.7 816.7 937 817 940C817.3 943 816.8 947 814 950C811.2 953 805.7 956 800 958C794.3 960 785.8 962 780 962C774.2 962 769.2 960.3 765 958C760.8 955.7 758.3 951 755 948C751.7 945 747.3 942.7 745 940C742.7 937.3 740.2 934.7 741 932Z M916.5 724C916.5 726.4 916.9 725.9 913.9 727.5C910.9 729.2 911.7 729 907.5 729C903.3 729 904.1 729.2 901.1 727.5C898.1 725.9 898.5 726.4 898.5 724C898.5 721.6 898.1 722.1 901.1 720.5C904.1 718.8 903.3 719 907.5 719C911.7 719 910.9 718.8 913.9 720.5C916.9 722.1 916.5 721.6 916.5 724Z M989.5 726C989.5 728.8 989.9 728.2 986.9 730.2C983.9 732.2 984.7 732 980.5 732C976.3 732 977.1 732.2 974.1 730.2C971.1 728.2 971.5 728.8 971.5 726C971.5 723.2 971.1 723.8 974.1 721.8C977.1 719.8 976.3 720 980.5 720C984.7 720 983.9 719.8 986.9 721.8C989.9 723.8 989.5 723.2 989.5 726Z" fill="#a6bfde" fill-rule="evenodd"/>
<path d="M324 133 L517.5 133 L520 150 L533.7 165 L537.5 177.5 L541 190 L542.5 205 L548.7 213.7 L570 235 L595 252.5 L611 266 L642.5 290 L670 307.5 L686 316 L700 324 L700 324 L700 335 L868 335 L866 318 L863.5 303 L947.5 453.7 L1066 668.7 L1216 940 L1252.5 1001 L525 1001 L525 1001 L523.7 996 L520 993 L495 992.5 L475 988.7 L447.5 994.5 L433.7 990 L432.5 983.7 L405 984.5 L392.5 987.5 L385 980 L378.7 981 L376 988.7 L362.5 990 L345 992.5 L323 993.7 L324 993.7Z M722 440 L724 453.5 L745 457.5 L762 456 L765 440Z" fill="rgb(145,118,127)" fill-opacity="0.72" fill-rule="evenodd"/>
<path d="M430 287.5L466 287.5C466 296 456 302.5 447 302.5C438 302.5 430 296 430 287.5Z M359.2 391.5C358.4 393.8 358.8 393.4 356.8 394.4C354.8 395.5 355.3 395.4 353.3 394.7C351.3 394 351.6 394.3 350.8 392.2C350 390.2 350 390.7 350.8 388.5C351.6 386.2 351.2 386.6 353.2 385.6C355.2 384.5 354.7 384.6 356.7 385.3C358.7 386 358.4 385.7 359.2 387.8C360 389.8 360 389.3 359.2 391.5Z M401 396C401 397.6 401.4 397.3 398.4 398.5C395.4 399.6 396.2 399.5 392 399.5C387.8 399.5 388.6 399.6 385.6 398.5C382.6 397.3 383 397.6 383 396C383 394.4 382.6 394.7 385.6 393.5C388.6 392.4 387.8 392.5 392 392.5C396.2 392.5 395.4 392.4 398.4 393.5C401.4 394.7 401 394.4 401 396Z M763.9 584.7C763.1 586.1 763.5 586 761.1 586C758.8 586 759.4 586.1 757 584.7C754.5 583.3 754.9 583.7 753.8 581.7C752.6 579.7 752.7 580.1 753.5 578.7C754.3 577.3 753.9 577.4 756.3 577.4C758.6 577.4 758 577.3 760.5 578.7C762.9 580.1 762.5 579.7 763.6 581.7C764.8 583.7 764.7 583.3 763.9 584.7Z M327.5 707.5C329.8 704.1 335 696.7 340 692.5C345 688.3 350.4 684.5 357.5 682.5C364.6 680.5 375.4 680.1 382.5 680.5C389.6 680.9 394.6 682.2 400 685C405.4 687.8 412.3 693.3 415 697.5C417.7 701.7 417.2 705 416 710C414.8 715 409.8 722.5 407.5 727.5C405.2 732.5 405.4 737.1 402.5 740C399.6 742.9 395.4 744.1 390 745C384.6 745.9 376.3 746.2 370 745.5C363.7 744.8 356.2 743.2 352 741C347.8 738.8 347.3 733.8 345 732.5C342.7 731.2 340.5 734.2 338 733C335.5 731.8 330.9 727.6 330 725C329.1 722.4 333.2 719.5 332.5 717.5C331.8 715.5 326.8 714.7 326 713C325.2 711.3 325.2 710.9 327.5 707.5Z M716 700C717.2 697.7 720.2 695.4 725 693.7C729.8 692 740.4 689.8 745 690C749.6 690.2 752.1 692.1 752.5 695C752.9 697.9 748.1 704.2 747.5 707.5C746.9 710.8 750.4 713.3 748.7 715C747 716.7 741 717.9 737.5 717.5C734 717.1 730.8 714.2 727.5 712.5C724.2 710.8 719.4 709.6 717.5 707.5C715.6 705.4 714.8 702.3 716 700Z M588.7 773.7C588.7 775.6 588.9 775.2 587.2 776.5C585.6 777.9 586.1 777.7 583.7 777.7C581.3 777.7 581.8 777.9 580.2 776.5C578.5 775.2 578.7 775.6 578.7 773.7C578.7 771.8 578.5 772.2 580.2 770.9C581.8 769.5 581.3 769.7 583.7 769.7C586.1 769.7 585.6 769.5 587.2 770.9C588.9 772.2 588.7 771.8 588.7 773.7Z M605.4 806.4C605.7 808.3 606 807.8 603.5 809.5C601 811.2 601.8 810.9 598.1 811.5C594.3 812 595.1 812 592.3 811.1C589.5 810.1 589.8 810.5 589.6 808.6C589.3 806.7 589 807.2 591.5 805.5C594 803.8 593.2 804.1 596.9 803.5C600.7 803 599.9 803 602.7 803.9C605.5 804.9 605.2 804.5 605.4 806.4Z M605.3 845C604.7 846 605 845.9 603.2 845.8C601.3 845.7 601.8 845.8 599.8 844.7C597.7 843.5 598.1 843.8 597.1 842.3C596 840.7 596.1 841 596.7 840C597.3 839 597 839.1 598.8 839.2C600.7 839.3 600.2 839.2 602.2 840.3C604.3 841.5 603.9 841.2 604.9 842.7C606 844.3 605.9 844 605.3 845Z M619.1 853.4C618.6 854.7 619 854.5 616.4 854.7C613.9 854.8 614.6 854.9 611.5 853.8C608.4 852.7 609 853 607.1 851.3C605.3 849.6 605.4 849.9 605.9 848.6C606.4 847.3 606 847.5 608.6 847.3C611.1 847.2 610.4 847.1 613.5 848.2C616.6 849.3 616 849 617.9 850.7C619.7 852.4 619.6 852.1 619.1 853.4Z M633.7 862.5C633.7 864.4 633.9 864 632.2 865.3C630.6 866.7 631.1 866.5 628.7 866.5C626.3 866.5 626.8 866.7 625.2 865.3C623.5 864 623.7 864.4 623.7 862.5C623.7 860.6 623.5 861 625.2 859.7C626.8 858.3 626.3 858.5 628.7 858.5C631.1 858.5 630.6 858.3 632.2 859.7C633.9 861 633.7 860.6 633.7 862.5Z M517.5 866C517.5 864.8 521.9 863.2 524 862C526.1 860.8 528 858.8 530 859C532 859.2 534.1 862 536 863C537.9 864 541.5 864 541.5 865C541.5 866 538.9 868.3 536 869C533.1 869.7 527.1 869.5 524 869C520.9 868.5 517.5 867.2 517.5 866Z M456.4 883.5C456.1 885.2 456.4 884.9 454.2 885.7C452.1 886.5 452.7 886.4 449.9 885.9C447.1 885.5 447.7 885.7 445.9 884.2C444.1 882.7 444.3 883.1 444.6 881.5C444.9 879.8 444.6 880.1 446.8 879.3C448.9 878.5 448.3 878.6 451.1 879.1C453.9 879.5 453.3 879.3 455.1 880.8C456.9 882.3 456.7 881.9 456.4 883.5Z M605.7 895.5C607 897.2 606.9 896.7 605.9 899.3C604.8 901.8 605.3 901.3 602.6 903.2C599.9 905.1 600.5 904.8 597.8 904.9C595 905.1 595.5 905.3 594.3 903.5C593 901.8 593.1 902.3 594.1 899.7C595.2 897.2 594.7 897.7 597.4 895.8C600.1 893.9 599.5 894.2 602.2 894.1C605 893.9 604.5 893.7 605.7 895.5Z M725 888C726 887 728.2 886.3 730 887C731.8 887.7 733.7 890.8 736 892C738.3 893.2 742.8 892.5 744 894C745.2 895.5 744.5 899.5 743 901C741.5 902.5 737.7 903.3 735 903C732.3 902.7 728.8 900.7 727 899C725.2 897.3 724.3 894.8 724 893C723.7 891.2 724 889 725 888Z M741 932C741.8 929.3 746.2 925.8 750 924C753.8 922.2 759.3 920.2 764 921C768.7 921.8 772 927.5 778 929C784 930.5 794.3 929.5 800 930C805.7 930.5 809.2 930.3 812 932C814.8 933.7 816.7 937 817 940C817.3 943 816.8 947 814 950C811.2 953 805.7 956 800 958C794.3 960 785.8 962 780 962C774.2 962 769.2 960.3 765 958C760.8 955.7 758.3 951 755 948C751.7 945 747.3 942.7 745 940C742.7 937.3 740.2 934.7 741 932Z M916.5 724C916.5 726.4 916.9 725.9 913.9 727.5C910.9 729.2 911.7 729 907.5 729C903.3 729 904.1 729.2 901.1 727.5C898.1 725.9 898.5 726.4 898.5 724C898.5 721.6 898.1 722.1 901.1 720.5C904.1 718.8 903.3 719 907.5 719C911.7 719 910.9 718.8 913.9 720.5C916.9 722.1 916.5 721.6 916.5 724Z M989.5 726C989.5 728.8 989.9 728.2 986.9 730.2C983.9 732.2 984.7 732 980.5 732C976.3 732 977.1 732.2 974.1 730.2C971.1 728.2 971.5 728.8 971.5 726C971.5 723.2 971.1 723.8 974.1 721.8C977.1 719.8 976.3 720 980.5 720C984.7 720 983.9 719.8 986.9 721.8C989.9 723.8 989.5 723.2 989.5 726Z" fill="none" stroke="#2a2a2a" stroke-width="0.9" stroke-dasharray="4 1.500 1 1.500"/>
<path d="M324 147 L401 147 M324 217 L535 217 M324 287 L430 287 M505.5 287 L610 287 M401 133 L401 313 M505.5 157 L505.5 313 M330 427 L506 427 M330 427 L326 431 L325 495 M324 496 L960 496 M506 433 L506 1000 M610 496 L610 1000 M506 565.5 L1007.5 565.5 M715 496 L714.5 1000 M687.5 451 L687.5 496 M767.5 496 L767.5 475 L777.5 460 L777.5 453.7 M406 636 L557.5 636 M406 636 L402.5 640 L402 670 M480 618.7 L480 635 M818.7 496 L818.7 565 M922.5 453 L922.5 496 M1027.5 610 L1027.5 640 M402 776 L402 915 M324 846 L1130 847 M430 706 L507.5 706 M610 705 L715 705 M402.5 750 L427.5 741 L428.7 707.5 M324 916 L506 916 M610 917.5 L800 917.5 M570 817.5 L570 845 M610 845 L635 862.5 M818 686 L818 1000 M922 847 L922 1000 M974 757.5 L974 1000 M975 670 L975 692.5 M1026 670 L1026 1000 M875 847.5 L900 855 L917.5 870 L922 882.5 M1155 847.5 L1155 888.7 L1177.5 888.7 M1128.7 848.7 L1130 860 L1137 861 M800 986 L1240 986 M1010.5 572.5 L1010.5 670 M1010.5 318 L1010.5 433 M1026 960 L1072 936 L1085 934 L1098 938" fill="none" stroke="#a09489" stroke-opacity="0.95" stroke-width="2.7" stroke-linejoin="round"/>
<path d="M324 147 L401 147 M324 217 L535 217 M324 287 L430 287 M505.5 287 L610 287 M401 133 L401 313 M505.5 157 L505.5 313 M330 427 L506 427 M330 427 L326 431 L325 495 M324 496 L960 496 M506 433 L506 1000 M610 496 L610 1000 M506 565.5 L1007.5 565.5 M715 496 L714.5 1000 M687.5 451 L687.5 496 M767.5 496 L767.5 475 L777.5 460 L777.5 453.7 M406 636 L557.5 636 M406 636 L402.5 640 L402 670 M480 618.7 L480 635 M818.7 496 L818.7 565 M922.5 453 L922.5 496 M1027.5 610 L1027.5 640 M402 776 L402 915 M324 846 L1130 847 M430 706 L507.5 706 M610 705 L715 705 M402.5 750 L427.5 741 L428.7 707.5 M324 916 L506 916 M610 917.5 L800 917.5 M570 817.5 L570 845 M610 845 L635 862.5 M818 686 L818 1000 M922 847 L922 1000 M974 757.5 L974 1000 M975 670 L975 692.5 M1026 670 L1026 1000 M875 847.5 L900 855 L917.5 870 L922 882.5 M1155 847.5 L1155 888.7 L1177.5 888.7 M1128.7 848.7 L1130 860 L1137 861 M800 986 L1240 986 M1010.5 572.5 L1010.5 670 M1010.5 318 L1010.5 433 M1026 960 L1072 936 L1085 934 L1098 938" fill="none" stroke="#b09ca3" stroke-width="1.3" stroke-linejoin="round"/>
<path d="M322 706.500H402.500V776H322" fill="none" stroke="#b29477" stroke-width="4.600"/>
<rect x="397.500" y="765" width="5" height="10.500" rx="1.500" fill="#a8949c" stroke="#3a3038" stroke-width="0.800" stroke-dasharray="3 1"/>
<path d="M324 706.500H402.500V764" fill="none" stroke="#2a2420" stroke-width="0.900" stroke-dasharray="1.500 2.200"/>
<path d="M517.5 133C518.2 137.5 515.7 141.5 520 150C524.3 158.5 529 157.7 533.7 165C538.4 172.3 535.6 170.8 537.5 177.5C539.4 184.2 539.7 182.7 541 190C542.3 197.3 540.4 198.7 542.5 205C544.6 211.3 541.4 205.7 548.7 213.7C556 221.7 557.7 224.7 570 235C582.3 245.3 584.1 244.2 595 252.5C605.9 260.8 598.3 256 611 266C623.7 276 626.8 278.9 642.5 290C658.2 301.1 658.4 300.6 670 307.5C681.6 314.4 678 311.6 686 316C694 320.4 696.3 321.9 700 324" fill="none" stroke="#62a3a8" stroke-width="2.600" stroke-linejoin="round"/>
<path d="M863.500 303L947.500 453.700L1066 668.700L1216 940L1252.500 1001" fill="none" stroke="#6aa9ac" stroke-width="2.800"/>
<path d="M862 303.500L946 454.500L1064.500 669.500L1214.500 941L1251 1002" fill="none" stroke="#8a7f88" stroke-width="1" opacity="0.700"/>
<path d="M864.300 302.500L948.300 453.200L1066.800 668.200L1216.800 939.500L1253.300 1000.500" fill="none" stroke="#222" stroke-width="0.900" stroke-dasharray="4 1.500 1 1.500"/>
<path d="M323 993.7C328.9 993.4 334.5 993.5 345 992.5C355.5 991.5 354.2 991 362.5 990C370.8 989 371.7 991.1 376 988.7C380.3 986.3 376.3 983.3 378.7 981C381.1 978.7 381.3 978.3 385 980C388.7 981.7 387.2 986.3 392.5 987.5C397.8 988.7 394.3 985.5 405 984.5C415.7 983.5 424.8 982.2 432.5 983.7C440.2 985.2 429.7 987.1 433.7 990C437.7 992.9 436.5 994.8 447.5 994.5C458.5 994.2 462.3 989.2 475 988.7C487.7 988.2 483 991.4 495 992.5C507 993.6 512.3 992.1 520 993C527.7 993.9 522.4 993.9 523.7 996C525 998.1 524.7 999.7 525 1001" fill="none" stroke="#8fc3cc" stroke-width="4.500" stroke-linejoin="round"/>
<path d="M323 993.7C328.9 993.4 334.5 993.5 345 992.5C355.5 991.5 354.2 991 362.5 990C370.8 989 371.7 991.1 376 988.7C380.3 986.3 376.3 983.3 378.7 981C381.1 978.7 381.3 978.3 385 980C388.7 981.7 387.2 986.3 392.5 987.5C397.8 988.7 394.3 985.5 405 984.5C415.7 983.5 424.8 982.2 432.5 983.7C440.2 985.2 429.7 987.1 433.7 990C437.7 992.9 436.5 994.8 447.5 994.5C458.5 994.2 462.3 989.2 475 988.7C487.7 988.2 483 991.4 495 992.5C507 993.6 512.3 992.1 520 993C527.7 993.9 522.4 993.9 523.7 996C525 998.1 524.7 999.7 525 1001" fill="none" stroke="#2f78b8" stroke-width="2" stroke-linejoin="round"/>
<path d="M722 452.500L745 457.500L762 456" fill="none" stroke="#62a3a8" stroke-width="2.400"/>
<path d="M518.7 133.7 L527.5 147.5 L542.5 162.5 L543.7 173.7 L550 183.7 L551 202.5 L555 213.7 L572.5 232.5 L611 263.7 L645 280 L652.5 290 L675 305 L702.5 316" fill="none" stroke="#222" stroke-width="0.9" stroke-dasharray="4 1.500 1 1.500"/>
<path d="M857.5 288.7 L855 300 L856 318" fill="none" stroke="#333" stroke-width="0.8" stroke-dasharray="4 1.500 1 1.500 1 1.500"/>
<path d="M988 451H1062.500" fill="none" stroke="#1c1c1c" stroke-width="1.800" stroke-dasharray="5 1.500 1.500 1.500 1.500 1.500"/>
<path d="M1218.500 133V782.500H1130" fill="none" stroke="#8e8e8e" stroke-width="3.200"/>
<path d="M1218.500 133V782.500H1130" fill="none" stroke="#c8c8c8" stroke-width="0.800" stroke-dasharray="1 7"/>
<path d="M1218.500 782.500V938" fill="none" stroke="#8e8e8e" stroke-width="3.200"/>
<path d="M1232.500 972V1000" fill="none" stroke="#9b8592" stroke-width="3"/>
<path d="M324 357H432" fill="none" stroke="#8f8896" stroke-width="2.600" stroke-dasharray="9 1"/>
<path d="M404 776.500H507" fill="none" stroke="#8c7f8c" stroke-width="3" stroke-dasharray="18 1.500"/><path d="M800 777H1027" fill="none" stroke="#8a7d8a" stroke-width="3.200" stroke-dasharray="18 1.500"/>
<path d="M507 777H800" fill="none" stroke="#9a8a95" stroke-width="2.500" stroke-dasharray="18 1.500"/>
<path d="M695 133 L695 149.5 L746 149.5 L746 133" fill="none" stroke="#333" stroke-width="0.9" stroke-dasharray="4 1.500 1 1.500 1 1.500"/>
<path d="M466 287.5 L505 287.5" fill="none" stroke="#333" stroke-width="0.9" stroke-dasharray="4 1.500 1 1.500 1 1.500"/>
<path d="M611 266 L611 320" fill="none" stroke="#333" stroke-width="0.9" stroke-dasharray="4 1.500 1 1.500 1 1.500"/>
<path d="M610 433 L610 1000" fill="none" stroke="#333" stroke-width="0.9" stroke-dasharray="4 1.500 1 1.500 1 1.500"/>
<path d="M324 351 L432 351.5" fill="none" stroke="#333" stroke-width="0.9" stroke-dasharray="4 1.500 1 1.500 1 1.500"/>
<path d="M991 136 L1009 136" fill="none" stroke="#333" stroke-width="0.9" stroke-dasharray="4 1.500 1 1.500 1 1.500"/>
<path d="M1011.5 135 L1011.5 186" fill="none" stroke="#333" stroke-width="0.9" stroke-dasharray="4 1.500 1 1.500 1 1.500"/>
<path d="M1011 168.7 L1037.5 168.7 L1037.5 156" fill="none" stroke="#333" stroke-width="0.9" stroke-dasharray="4 1.500 1 1.500 1 1.500"/>
<path d="M1012.5 187 L1061 187 L1061 222.5 L1135 222.5 L1136 207.5 L1216 207.5" fill="none" stroke="#333" stroke-width="0.9" stroke-dasharray="4 1.500 1 1.500 1 1.500"/>
<path d="M1135 222.5 L1135 241 L1115.5 241 L1115.5 257.5 L1065 257.5" fill="none" stroke="#333" stroke-width="0.9" stroke-dasharray="4 1.500 1 1.500 1 1.500"/>
<path d="M1055 260 L1055 293.7 L910 293 L910 318" fill="none" stroke="#333" stroke-width="0.9" stroke-dasharray="4 1.500 1 1.500 1 1.500"/>
<path d="M1036 343.7 L1036 315 L1057.5 315 L1057.5 328.7 L1115.5 328.7 L1116 364" fill="none" stroke="#333" stroke-width="0.9" stroke-dasharray="4 1.500 1 1.500 1 1.500"/>
<path d="M1036 343.7 L1012.5 343.7" fill="none" stroke="#333" stroke-width="0.9" stroke-dasharray="4 1.500 1 1.500 1 1.500"/>
<path d="M1190 365 L1190 397.5 L1165 398.7" fill="none" stroke="#333" stroke-width="0.9" stroke-dasharray="4 1.500 1 1.500 1 1.500"/>
<path d="M1220 364 L1837.5 363.7" fill="none" stroke="#333" stroke-width="0.9" stroke-dasharray="4 1.500 1 1.500 1 1.500"/>
<path d="M1012 398 L1062 398.7" fill="none" stroke="#333" stroke-width="0.9" stroke-dasharray="4 1.500 1 1.500 1 1.500"/>
<path d="M1318 133 L1318 154" fill="none" stroke="#333" stroke-width="0.9" stroke-dasharray="4 1.500 1 1.500 1 1.500"/>
<path d="M1653.7 295 L1653.7 310.5 L1680 310.5" fill="none" stroke="#333" stroke-width="0.9" stroke-dasharray="4 1.500 1 1.500 1 1.500"/>
<path d="M1837.5 225 L1835 247.5 L1837.5 293.7" fill="none" stroke="#333" stroke-width="0.9" stroke-dasharray="4 1.500 1 1.500 1 1.500"/>
<path d="M1837.5 363.7 L1837.5 478" fill="none" stroke="#333" stroke-width="0.9" stroke-dasharray="4 1.500 1 1.500 1 1.500"/>
<path d="M1836.7 431.7 L1905 484" fill="none" stroke="#333" stroke-width="0.9" stroke-dasharray="4 1.500 1 1.500 1 1.500"/>
<path d="M1062.5 400 L1062.5 432.5 L1166 432.5 L1166 400" fill="none" stroke="#333" stroke-width="0.9" stroke-dasharray="4 1.500 1 1.500 1 1.500"/>
<path d="M1112.5 415 L1166 415" fill="none" stroke="#333" stroke-width="0.9" stroke-dasharray="4 1.500 1 1.500 1 1.500"/>
<path d="M1113.7 670 L1113.7 646 L1160 643.7" fill="none" stroke="#333" stroke-width="0.9" stroke-dasharray="4 1.500 1 1.500 1 1.500"/>
<path d="M1407.5 503 L1422 503" fill="none" stroke="#333" stroke-width="0.9" stroke-dasharray="4 1.500 1 1.500 1 1.500"/>
<path d="M1422 468.7 L1422 572.5" fill="none" stroke="#333" stroke-width="0.9" stroke-dasharray="4 1.500 1 1.500 1 1.500"/>
<path d="M767.5 496 L767.5 595" fill="none" stroke="#333" stroke-width="0.9" stroke-dasharray="4 1.500 1 1.500 1 1.500"/>
<path d="M507 777 L800 777" fill="none" stroke="#333" stroke-width="0.9" stroke-dasharray="4 1.500 1 1.500 1 1.500"/>
<path d="M1027 777.5 L1130 778" fill="none" stroke="#333" stroke-width="0.9" stroke-dasharray="4 1.500 1 1.500 1 1.500"/>
<path d="M922 777 L922 847" fill="none" stroke="#333" stroke-width="0.9" stroke-dasharray="4 1.500 1 1.500 1 1.500"/>
<path d="M1026 777 L1026 847" fill="none" stroke="#333" stroke-width="0.9" stroke-dasharray="4 1.500 1 1.500 1 1.500"/>
<path d="M818.7 917 L921 917.5" fill="none" stroke="#333" stroke-width="0.9" stroke-dasharray="4 1.500 1 1.500 1 1.500"/>
<path d="M714.5 917.5 L714.5 986 L800 986" fill="none" stroke="#333" stroke-width="0.9" stroke-dasharray="4 1.500 1 1.500 1 1.500"/>
<path d="M1340 783 L1422 783" fill="none" stroke="#333" stroke-width="0.9" stroke-dasharray="4 1.500 1 1.500 1 1.500"/>
<path d="M1515 783 L1630 783" fill="none" stroke="#333" stroke-width="0.9" stroke-dasharray="4 1.500 1 1.500 1 1.500"/>
<path d="M1837.6 922 L1837.6 1000" fill="none" stroke="#333" stroke-width="0.9" stroke-dasharray="4 1.500 1 1.500 1 1.500"/>
<path d="M1115 670 L1115 712.5" fill="none" stroke="#333" stroke-width="0.9" stroke-dasharray="4 1.500 1 1.500 1 1.500"/>
<path d="M1115 712 L1130 712" fill="none" stroke="#333" stroke-width="0.9" stroke-dasharray="4 1.500 1 1.500 1 1.500"/>
<path d="M339 691 L339 731" fill="none" stroke="#333" stroke-width="0.9" stroke-dasharray="4 1.500 1 1.500 1 1.500"/>
<path d="M1840 783 L1860 783" fill="none" stroke="#333" stroke-width="0.9" stroke-dasharray="4 1.500 1 1.500 1 1.500"/>
<path d="M1680 310.5C1680.8 311.2 1687.5 312.2 1685 315C1682.5 317.8 1670.2 322.9 1665 327.5C1659.8 332.1 1655.8 336.5 1653.7 342.5C1651.6 348.5 1652.7 360.2 1652.5 363.7" fill="none" stroke="#444" stroke-width="0.800" stroke-dasharray="1 2.500"/>
<path d="M1661.7 330C1660.6 331.7 1656.5 336.4 1655 340C1653.5 343.6 1653 347.9 1652.5 351.7C1652 355.5 1652.1 361.1 1652 363" fill="none" stroke="#444" stroke-width="0.800" stroke-dasharray="1 2.500"/>
<path d="M1579 852.3 L1681 852.3 L1682.6 855 L1677.5 919.5 L1675.5 921.5 L1632 921.5 L1632 885.6 L1579 885.6 L1577.3 883.5 L1577.3 854.5Z" fill="none" stroke="#3a3428" stroke-width="0.900" stroke-dasharray="4 1.500 1 1.500 1 1.500"/>
<path d="M655 148.7C655.3 147 652 145.5 656 142.5C660 139.5 663.6 139.6 670 137.5C676.4 135.4 674.7 133.8 680 134.5C685.3 135.2 684 138.5 690 140C696 141.5 697.2 141.7 702.5 140C707.8 138.3 704 135.2 710 133.7C716 132.2 721 134.3 725 134.5 M1315 225C1325.7 224.9 1334.3 224.2 1355 224.5C1375.7 224.8 1376.2 224.3 1392.5 226C1408.8 227.7 1410 227.6 1416 231C1422 234.4 1413.3 236.3 1415 238.7C1416.7 241.1 1417.2 238.7 1422.5 240C1427.8 241.3 1421 244.5 1435 243.7C1449 242.9 1453.7 238 1475 237C1496.3 236 1502 239.7 1515 240C1528 240.3 1521.4 238.5 1523.7 238 M1533.7 133C1534 135.5 1530 137 1535 142.5C1540 148 1543.2 148.8 1552.5 153.7C1561.8 158.6 1563.3 155.1 1570 161C1576.7 166.9 1568.8 168.3 1577.5 176C1586.2 183.7 1592.5 180.9 1602.5 190C1612.5 199.1 1610.3 202.7 1615 210C1619.7 217.3 1618.7 215.5 1620 217.5 M1690 280C1690.7 284 1691.2 286.7 1692.5 295C1693.8 303.3 1690.3 305.4 1695 311C1699.7 316.6 1704 310.9 1710 316C1716 321.1 1715.5 322.9 1717.5 330C1719.5 337.1 1717.5 339.2 1717.5 342.5 M1617.5 275.5C1623.5 279 1630 282.2 1640 288.7C1650 295.2 1647 298.1 1655 300C1663 301.9 1662.7 293.7 1670 296C1677.3 298.3 1675.8 304.7 1682.5 308.7C1689.2 312.7 1691.7 310.4 1695 311 M1837.5 225.5C1832.8 226.4 1825 229.2 1820 228.7C1815 228.2 1820.7 225.2 1818.7 223.7C1816.7 222.2 1814.8 222.4 1812.5 223C1810.2 223.6 1814 223.5 1810 226C1806 228.5 1801.8 229.8 1797.5 232.5C1793.2 235.2 1794 234.5 1794 236C1794 237.5 1798.3 235.9 1797.5 238C1796.7 240.1 1791.4 240.5 1791 243.7C1790.6 246.9 1794.7 247.3 1796 250C1797.3 252.7 1792.9 253 1796 254C1799.1 255 1803.8 251.8 1807.5 253.7C1811.2 255.6 1807.7 258 1810 261C1812.3 264 1815.3 262.6 1816 265C1816.7 267.4 1813.4 266.7 1812.5 270C1811.6 273.3 1815.2 272.8 1812.5 277.5C1809.8 282.2 1805.8 280.8 1802.5 287.5C1799.2 294.2 1801 296.2 1800 302.5C1799 308.8 1797.9 307.4 1798.7 311C1799.5 314.6 1802.7 313.3 1803 316C1803.3 318.7 1800.8 319.7 1800 321 M1837.5 225.5C1840.8 226.7 1844 229.1 1850 230C1856 230.9 1855.7 228.4 1860 228.7C1864.3 229 1862.7 230.7 1866 231C1869.3 231.3 1870.8 230.3 1872.5 230 M1903.7 213C1905.4 211.5 1906.3 211 1910 207.5C1913.7 204 1915.5 202 1917.5 200 M1746 346C1750.7 345.4 1758.4 347.3 1763.7 343.7C1769 340.1 1763 337.2 1766 332.5C1769 327.8 1768.6 328.8 1775 326C1781.4 323.2 1783.3 323.3 1790 322C1796.7 320.7 1793.3 321.4 1800 321C1806.7 320.6 1810.3 321.8 1815 320.5C1819.7 319.2 1809.5 317.2 1817.5 316C1825.5 314.8 1837.7 316 1845 316 M521 525C524.1 524.3 524.8 525.7 532.5 522.5C540.2 519.3 541.7 515.5 550 513C558.3 510.5 554.4 515.8 563.7 513C573 510.2 578.3 506.3 585 502.5C591.7 498.7 587.7 499.7 588.7 498.7 M593 492C596.2 488.8 601.8 485.6 605 480C608.2 474.4 603.7 475 605 471C606.3 467 609 470.6 610 465C611 459.4 608 456.4 608.7 450C609.4 443.6 609.2 445.3 612.5 441C615.8 436.7 618.7 435.6 621 433.7 M992.5 749.5C993.2 748.3 993.7 745.4 995 745C996.3 744.6 994.2 746.8 997.5 748C1000.8 749.2 999.5 746.6 1007.5 749.5C1015.5 752.4 1014.8 754.9 1027.5 758.7C1040.2 762.5 1044.7 760 1055 763.7C1065.3 767.4 1062 768.7 1066 772.5C1070 776.3 1060.3 775.8 1070 778C1079.7 780.2 1091.2 780.7 1102.5 780.7C1113.8 780.7 1107.2 777.9 1112.5 778C1117.8 778.1 1117.8 778.1 1122.5 781C1127.2 783.9 1126 787.4 1130 788.7C1134 790 1132.2 784.3 1137.5 786C1142.8 787.7 1145.3 791 1150 795C1154.7 799 1151 797 1155 801C1159 805 1159.7 806.9 1165 810C1170.3 813.1 1167 809.8 1175 812.5C1183 815.2 1187 816.8 1195 820C1203 823.2 1198.3 823.5 1205 824.5C1211.7 825.5 1212 825.2 1220 823.7C1228 822.2 1228.3 822.4 1235 818.7C1241.7 815 1239 811.7 1245 810C1251 808.3 1248.2 812 1257.5 812.5C1266.8 813 1266.7 811.3 1280 812C1293.3 812.7 1297.9 815.3 1307.5 815C1317.1 814.7 1306 810.3 1316 811C1326 811.7 1330.3 817 1345 817.5C1359.7 818 1364.1 814.2 1371 813 M1270 553C1267.3 554.9 1266 556.1 1260 560C1254 563.9 1252.2 562.2 1247.5 567.5C1242.8 572.8 1245.2 575.1 1242.5 580C1239.8 584.9 1237.5 582.3 1237.5 586C1237.5 589.7 1245.8 588 1242.5 593.7C1239.2 599.4 1231.7 600.5 1225 607.5C1218.3 614.5 1219.2 613 1217.5 620C1215.8 627 1215.4 626.8 1218.7 633.7C1222 640.6 1227 642.7 1230 646 M1340 696.2C1344 698.8 1347.3 702.7 1355 706C1362.7 709.3 1364.7 706 1368.7 708.7C1372.7 711.4 1366.3 710.3 1370 716C1373.7 721.7 1378.5 723.6 1382.5 730C1386.5 736.4 1382.7 733.3 1385 740C1387.3 746.7 1388.7 748.7 1391 755C1393.3 761.3 1396.6 755.7 1393.7 763.7C1390.8 771.7 1384 776.7 1380 785C1376 793.3 1379 792.3 1378.7 795 M1512.5 789.5C1517.8 786.3 1520.5 782.2 1532.5 777.5C1544.5 772.8 1544.2 771.3 1557.5 772C1570.8 772.7 1569.8 774.5 1582.5 780C1595.2 785.5 1595 785.2 1605 792.5C1615 799.8 1614 798.8 1620 807.5C1626 816.2 1623.5 817 1627.5 825C1631.5 833 1629 832.2 1635 837.5C1641 842.8 1642 843.7 1650 845C1658 846.3 1657 843.2 1665 842.5C1673 841.8 1672 843.8 1680 842.5C1688 841.2 1685.4 838.7 1695 837.5C1704.6 836.3 1709.1 836.7 1716 838C1722.9 839.3 1717.6 838.3 1721 842.5C1724.4 846.7 1726.6 849.3 1728.7 853.7C1730.8 858.1 1729.7 854.7 1729 859C1728.3 863.3 1726.7 865.7 1726 870C1725.3 874.3 1728.8 871.7 1726.5 875C1724.2 878.3 1722.6 877.8 1717.5 882.5C1712.4 887.2 1710.8 887.8 1707.5 892.5C1704.2 897.2 1705.7 898 1705 900 M1582.5 781C1580.5 783.4 1583.7 784.7 1575 790C1566.3 795.3 1560 795 1550 801C1540 807 1542.8 807.2 1537.5 812.5C1532.2 817.8 1534 818.3 1530 821C1526 823.7 1524.5 822.1 1522.5 822.5 M1721 842.5C1724.7 840.2 1728.3 837.7 1735 833.7C1741.7 829.7 1742.3 831.2 1746 827.5C1749.7 823.8 1744.3 826.7 1748.7 820C1753.1 813.3 1757.2 809.8 1762.5 802.5C1767.8 795.2 1766.6 799.2 1768.7 792.5C1770.8 785.8 1770 781.5 1770.5 777.5 M1248.7 937C1253.7 938.1 1261.2 938.7 1267.5 941C1273.8 943.3 1266.5 943.6 1272.5 945.7C1278.5 947.8 1282 948.2 1290 948.7C1298 949.2 1295.2 946.5 1302.5 947.5C1309.8 948.5 1308.2 948.2 1317.5 952.5C1326.8 956.8 1328.8 957.7 1337.5 963.7C1346.2 969.7 1344 971.2 1350 975C1356 978.8 1353.3 974.7 1360 978C1366.7 981.3 1369.7 983.3 1375 987.5C1380.3 991.7 1375 990.5 1380 993.7C1385 996.9 1390 998 1393.7 999.5 M1337 973.7C1343.1 978 1351.5 983.1 1360 990C1368.5 996.9 1366.4 997 1368.7 999.5 M1893.7 924.8C1886.7 927.7 1879.2 929.1 1867.5 935.7C1855.8 942.3 1856.3 944.2 1850 949.6C1843.7 955 1845.2 953 1844 956C1842.8 959 1843.6 958.4 1845.6 961C1847.6 963.6 1850.7 963.2 1851.5 965.6C1852.3 968 1852.2 968.9 1848.5 970C1844.8 971.1 1840.5 969.8 1837.6 969.7 M1843.4 989.7C1845.6 991.2 1845.7 992.9 1851.5 995.5C1857.3 998.1 1861.4 998.5 1865 999.6 M1717.5 330 L1717.5 342.5 M1745 346.7C1750.3 346 1759.5 347.1 1765 344C1770.5 340.9 1764.3 338.7 1765.8 335C1767.3 331.3 1769.5 331.3 1770.8 330" fill="none" stroke="#3a6fc2" stroke-width="1.500" stroke-linejoin="round" stroke-linecap="round"/>
<path d="M324 751L800 777L817.500 778L875 781.700L975 786L1135 793.700" fill="none" stroke="#6d692e" stroke-width="2"/>
<path d="M324 751 L800 777 L817.5 778 L875 781.7 L975 786 L1135 793.7 L1212.5 798.7 L1280 812 L1680 896 L1760 913 L1862.5 940 L1918 956" fill="none" stroke="#66612f" stroke-width="1.200"/>
<path d="M324 751 L800 777 L817.5 778 L875 781.7 L975 786 L1135 793.7 L1212.5 798.7 L1280 812 L1680 896 L1760 913 L1862.5 940 L1918 956" fill="none" stroke="#524d22" stroke-width="3" stroke-dasharray="0.700 6.300"/>
<path d="M975 786L1015 789.500" fill="none" stroke="#6f6a33" stroke-width="3.200"/>
<path d="M1062.5 451.2 L1218.7 451.2 L1218.7 503 L1160 503 L1159.5 609.5 L1063 609.5Z" fill="#5f88c6" stroke="#1c2a40" stroke-width="1" stroke-dasharray="4 1.500 1 1.500"/>
<path d="M1114.500 451V610M1062.500 503H1160M1062.500 573H1160" fill="none" stroke="#6a8fb8" stroke-width="1.200"/>
<g fill="#b257b0" fill-opacity="0.620" stroke="#8656a0" stroke-width="0.800"><circle cx="1114.5" cy="460" r="3.300"/><circle cx="1114.5" cy="464" r="3.300"/><circle cx="1114.5" cy="467.5" r="3.300"/><circle cx="1114.5" cy="471" r="3.300"/><circle cx="1114.5" cy="479" r="3.300"/><circle cx="1114.5" cy="492.5" r="3.300"/><circle cx="1114.5" cy="496" r="3.300"/><circle cx="1114.5" cy="499" r="3.300"/><circle cx="1114.5" cy="503" r="3.300"/><circle cx="1114.5" cy="510" r="3.300"/><circle cx="1114.5" cy="517.5" r="3.300"/><circle cx="1114.5" cy="547.5" r="3.300"/><circle cx="1114.5" cy="552.5" r="3.300"/><circle cx="1114.5" cy="562.5" r="3.300"/><circle cx="1114.5" cy="570" r="3.300"/><circle cx="1114.5" cy="574" r="3.300"/><circle cx="1114.5" cy="576" r="3.300"/><circle cx="1067.5" cy="503" r="3.300"/><circle cx="1076" cy="503" r="3.300"/><circle cx="1079" cy="503" r="3.300"/><circle cx="1081" cy="503" r="3.300"/><circle cx="1084" cy="503" r="3.300"/><circle cx="1090" cy="503" r="3.300"/><circle cx="1096" cy="503" r="3.300"/><circle cx="1100" cy="503" r="3.300"/><circle cx="1104" cy="503" r="3.300"/><circle cx="1107.5" cy="503" r="3.300"/><circle cx="1111" cy="503" r="3.300"/><circle cx="1129" cy="503" r="3.300"/><circle cx="1141" cy="503" r="3.300"/><circle cx="1159.5" cy="503" r="3.300"/><circle cx="1081" cy="506" r="3.300"/><circle cx="1084" cy="507.5" r="3.300"/><circle cx="1079" cy="505" r="3.300"/><circle cx="1064" cy="573" r="3.300"/><circle cx="1067" cy="573" r="3.300"/><circle cx="1082.5" cy="573" r="3.300"/><circle cx="1099.5" cy="573" r="3.300"/><circle cx="1111" cy="573" r="3.300"/><circle cx="1146" cy="573" r="3.300"/><circle cx="1112" cy="577" r="3.300"/><circle cx="1113" cy="575" r="3.300"/><circle cx="1219" cy="460" r="3.300"/><circle cx="1219" cy="469" r="3.300"/><circle cx="1219" cy="479" r="3.300"/><circle cx="1219" cy="486" r="3.300"/><circle cx="1219" cy="494.5" r="3.300"/></g>
<g fill="#9fb4d0" fill-opacity="0.350" stroke="#7896b4" stroke-width="0.800"><circle cx="1062.5" cy="451" r="3.200"/><circle cx="1114.5" cy="451" r="3.200"/><circle cx="1219" cy="451" r="3.200"/><circle cx="1063" cy="609.5" r="3.200"/><circle cx="1114" cy="609.5" r="3.200"/><circle cx="1159.5" cy="609.5" r="3.200"/><circle cx="1062.5" cy="503" r="3.200"/><circle cx="1159.5" cy="573" r="3.200"/><circle cx="1174" cy="503" r="3.200"/><circle cx="1191" cy="503" r="3.200"/><circle cx="1207.5" cy="503" r="3.200"/><circle cx="1215" cy="503" r="3.200"/><circle cx="1219" cy="503" r="3.200"/><circle cx="1063" cy="573" r="3.200"/></g>
<text x="469" y="264" font-size="11" fill="#3a80c0" text-anchor="middle" letter-spacing="0" stroke="#fff" stroke-width="2.600" stroke-linejoin="round" paint-order="stroke">St. Michael</text>
<text x="706" y="262" font-size="9.1" fill="#2559b5" text-anchor="middle" letter-spacing="0.05">East Devils Lk</text>
<text x="678" y="526.5" font-size="11" fill="#3a9c3a" text-anchor="middle" letter-spacing="0" stroke="#fff" stroke-width="2.600" stroke-linejoin="round" paint-order="stroke">T00100B</text>
<text x="697" y="652" font-size="11" fill="#3a80c0" text-anchor="middle" letter-spacing="0" stroke="#fff" stroke-width="2.600" stroke-linejoin="round" paint-order="stroke">T00100</text>
<text x="701.5" y="720" font-size="10.8" fill="#3a80c0" text-anchor="middle" letter-spacing="0" stroke="#fff" stroke-width="2.600" stroke-linejoin="round" paint-order="stroke">Wood Lake</text>
<text x="785.5" y="892" font-size="11" fill="#3a9c3a" text-anchor="middle" letter-spacing="0" stroke="#fff" stroke-width="2.600" stroke-linejoin="round" paint-order="stroke">T00100A</text>
<text x="373" y="717" font-size="9.1" fill="#2559b5" text-anchor="middle" letter-spacing="0.05">Shin Bone Lk</text>
<text x="779" y="945.5" font-size="9.1" fill="#2559b5" text-anchor="middle" letter-spacing="0.05">Battle Lk</text>
<text x="909" y="728" font-size="9.1" fill="#2559b5" text-anchor="middle" letter-spacing="0.05">Black Slough</text>
<text x="981" y="731" font-size="9.1" fill="#2559b5" text-anchor="middle" letter-spacing="0.05">Black Slough</text>
<text x="1654" y="258" font-size="9.1" fill="#2559b5" text-anchor="middle" letter-spacing="0.05">Swan Lk</text>
<text x="1664.5" y="468" font-size="9.1" fill="#2559b5" text-anchor="middle" letter-spacing="0.05">Stump Lk</text>
<text x="1878" y="528.5" font-size="9.1" fill="#2559b5" text-anchor="start" letter-spacing="0.05">Stump Lk</text>
<text x="1897" y="174.5" font-size="9.1" fill="#2559b5" text-anchor="start" letter-spacing="0.05">Coon</text>
<text x="389" y="747.5" font-size="13.5" fill="#ac8614" text-anchor="end" letter-spacing="0" stroke="#fff" stroke-width="2.600" stroke-linejoin="round" paint-order="stroke">Warwick city</text>
<text x="1637.5" y="885.5" font-size="13.5" fill="#ac8614" text-anchor="middle" letter-spacing="0" stroke="#fff" stroke-width="2.600" stroke-linejoin="round" paint-order="stroke">Tolna city</text>
<text x="1124" y="541.5" font-size="13.6" fill="#111" text-anchor="middle" letter-spacing="0" stroke="#fff" stroke-width="2.600" stroke-linejoin="round" paint-order="stroke">Spirit Lake Off-Reservation Trust Land(3935)</text>
</svg>
<div class="abs" style="left:431px;top:317px;width:582px;height:117px;box-sizing:border-box;border:1px solid #1883d7;background:#f0f0f0;box-shadow:0 2px 14px rgba(0,0,0,0.33)"></div>
<div class="abs" style="left:432px;top:318px;width:580px;height:30px;background:#fff"></div>
<div class="abs" style="left:440px;top:325px;width:16px;height:16px;background:#1f78b4;overflow:hidden"><div class="t" style="left:1px;top:2px;font-size:5.500px;line-height:6px;color:#cfe6f5;letter-spacing:0.200px">GUPS</div><div class="abs" style="left:1px;top:11px;width:14px;height:2px;background:#fff"></div></div>
<div class="t" style="left:461px;top:326px;font-size:12px;line-height:15px;color:#000;letter-spacing:-0.150px">Modify Area Feature</div>
<svg class="abs" style="left:990px;top:326px" width="13" height="13"><path d="M1.500 1.500l10 10M11.500 1.500l-10 10" stroke="#111" stroke-width="1.200" fill="none"/></svg>
<div class="t" style="left:446px;top:357px;letter-spacing:-0.180px">Select Replacement Geography for AITSL</div>
<div class="abs" style="left:900px;top:389px;width:93px;height:26px;box-sizing:border-box;border:1px solid #111;border-radius:4px;background:#e8e8e8"></div>
<div class="abs" style="left:651px;top:353px;width:337px;height:98px;box-sizing:border-box;border:1px solid #a6a6a6;background:#fafafa;box-shadow:2px 2px 2px rgba(0,0,0,0.62)"></div>
<div class="abs" style="left:653px;top:431px;width:332px;height:18px;background:linear-gradient(#3b9bfb,#2a7fdc);border-radius:1px"></div>
<div class="t" style="left:657px;top:358px;font-size:11.500px;line-height:15px">None</div>
<div class="t" style="left:657px;top:377px;font-size:11.500px;line-height:15px">Crow Hill District-150</div>
<div class="t" style="left:657px;top:396px;font-size:11.500px;line-height:15px">Fort Totten District-250</div>
<div class="t" style="left:657px;top:415px;font-size:11.500px;line-height:15px">St. Michael District-600</div>
<div class="t" style="left:657px;top:434px;font-size:11.500px;line-height:15px;color:#fff">Wood Lake District-800</div>

<div class="t" style="left:6px;top:1014px">8 feature(s) selected on layer faces_38005.</div>
<div class="abs" style="left:974px;top:1011px;width:20px;height:20px;box-sizing:border-box;border:1px solid #9a9a9a;border-radius:3px;background:linear-gradient(#f4f4f4,#dcdcdc)"></div>
<svg class="abs" style="left:975px;top:1012px" width="18" height="18" viewBox="0 0 18 18"><circle cx="8" cy="7" r="4.200" fill="none" stroke="#222" stroke-width="1.800"/><path d="M8 3v-2M11.500 9.500l3 4M5 11c-1 2 0 4 2 4s3-2 2-4" fill="none" stroke="#222" stroke-width="1.300"/><circle cx="11.500" cy="12.500" r="2.300" fill="#ddd" stroke="#222"/><path d="M13 2l1 1M15 5l1 0.500M14 8l1 1" stroke="#555" stroke-width="0.800"/></svg>
<div class="t" style="left:1003px;top:1014px">Coordinate:</div>
<div class="abs" style="left:1070px;top:1012px;width:299px;height:19px;box-sizing:border-box;border:1px solid #a8a8a8;border-radius:3px;background:#fff"></div>
<div class="t" style="left:1070px;top:1015px;width:299px;text-align:center;letter-spacing:-0.100px">-98.5613,47.8194</div>
<div class="t" style="left:1377px;top:1014px">Scale</div>
<div class="abs" style="left:1415px;top:1012px;width:92px;height:19px;box-sizing:border-box;border:1px solid #9a9a9a;border-radius:3px;background:#fff"></div>
<div class="t" style="left:1420px;top:1015px">1:40,824</div>
<div class="abs" style="left:1486px;top:1013px;width:20px;height:17px;box-sizing:border-box;border-left:1px solid #b0b0b0;background:linear-gradient(#f8f8f8,#e6e6e6);border-radius:0 2px 2px 0"></div>
<svg class="abs" style="left:1491px;top:1018px" width="10" height="7"><path d="M1 1l4 4 4-4" fill="none" stroke="#111" stroke-width="2"/></svg>
<div class="t" style="left:1515px;top:1014px">Rotation:</div>
<div class="abs" style="left:1570px;top:1006px;width:106px;height:31px;box-sizing:border-box;border:1px solid #8a8a8a;border-radius:3px;background:#fff"></div>
<div class="t" style="left:1575px;top:1015px">0.0</div>
<div class="abs" style="left:1659px;top:1007px;width:16px;height:29px;box-sizing:border-box;border-left:1px solid #b0b0b0;background:linear-gradient(#fafafa,#ececec);border-radius:0 2px 2px 0"></div>
<div class="hl" style="left:1660px;top:1021px;width:15px;background:#c8c8c8"></div>
<svg class="abs" style="left:1663px;top:1012px" width="9" height="20"><path d="M0.500 5h8L4.500 0.500zM0.500 15h8L4.500 19.500z" fill="#111"/></svg>
<div class="cb" style="left:1685px;top:1015px"><svg width="11" height="11" viewBox="0 0 11 11" style="position:absolute;left:0;top:0"><path d="M1.800 5.200L4.300 8.600 9.400 1.600" fill="none" stroke="#111" stroke-width="2.100"/></svg></div>
<div class="t" style="left:1701px;top:1015px">Render</div>
<svg class="abs" style="left:1752px;top:1012px" width="18" height="18" viewBox="0 0 18 18"><circle cx="9" cy="9" r="7.500" fill="#e8e8e8" stroke="#222" stroke-width="1.600"/><ellipse cx="9" cy="9" rx="3.500" ry="7.500" fill="none" stroke="#222" stroke-width="1"/><path d="M1.500 9h15M9 1.500v15M3 5h12M3 13h12" stroke="#222" stroke-width="0.900" fill="none"/><circle cx="9" cy="9" r="3.800" fill="none" stroke="#555" stroke-width="1.400"/></svg>
<div class="t" style="left:1772px;top:1014px;letter-spacing:-0.4px">EPSG:4269 (OTF)</div>
<svg class="abs" style="left:1883px;top:1012px" width="18" height="17" viewBox="0 0 18 17"><path d="M9 1c4.500 0 8 2.600 8 6s-3.500 6-8 6c-0.700 0-1.400-0.100-2-0.200L3 15.500l1-3.800C2.200 10.600 1 8.900 1 7c0-3.400 3.500-6 8-6z" fill="#6e6e6e"/></svg>

<div class="abs" id="taskbar"></div>
<div class="abs" style="left:0;top:1040px;width:48px;height:40px;background:#000"></div>
<svg class="abs" style="left:16px;top:1051px" width="17" height="17" viewBox="0 0 17 17"><path d="M0 2.400L6.900 1.450V8H0zM7.700 1.350L17 0v8H7.700zM0 8.800h6.900v6.600L0 14.450zM7.700 8.800H17V17l-9.300-1.350z" fill="#fff"/></svg>
<div class="abs" style="left:48px;top:1040px;width:344px;height:40px;background:#333"></div>
<svg class="abs" style="left:55px;top:1048px" width="25" height="25"><circle cx="12.500" cy="12.500" r="9.300" fill="none" stroke="#fff" stroke-width="2.300"/></svg>
<div class="t" style="left:85px;top:1050px;font-size:15px;line-height:20px;color:#a6a6a6;letter-spacing:-0.100px">Ask me anything</div>
<svg class="abs" style="left:364px;top:1051px" width="15" height="19" viewBox="0 0 15 19"><rect x="5" y="0.500" width="5" height="10" rx="2.500" fill="none" stroke="#8a8a8a" stroke-width="1.200"/><path d="M2.500 7.500v2a5 5 0 0 0 10 0v-2M7.500 14.500v3M4.500 17.500h6" fill="none" stroke="#8a8a8a" stroke-width="1.200"/></svg>
<svg class="abs" style="left:405px;top:1052px" width="22" height="16" viewBox="0 0 22 16"><rect x="4.500" y="1" width="13" height="13.500" fill="none" stroke="#fff" stroke-width="1.500"/><path d="M2.500 3H0.700v9.500H2.500M19.500 3h1.800v9.500H19.500" fill="none" stroke="#fff" stroke-width="1.300"/></svg>
<!-- control panel -->
<svg class="abs" style="left:456px;top:1052px" width="22" height="16" viewBox="0 0 22 16"><rect x="0.500" y="0.500" width="21" height="15" fill="#4aa3e0" stroke="#2a78b8"/><circle cx="6.500" cy="7" r="3.500" fill="#f6c04a"/><path d="M6.500 7V3.500A3.500 3.500 0 0 1 10 7z" fill="#fff"/><path d="M13 4h6M13 7h6M13 10h6M3 13h8" stroke="#d8ecfa" stroke-width="1.400"/></svg>
<!-- edge -->
<div class="t" style="left:505px;top:1043px;font-size:33px;line-height:34px;font-weight:bold;color:#1a78d6;font-family:'Liberation Sans',sans-serif">e</div>
<!-- explorer -->
<svg class="abs" style="left:554px;top:1050px" width="23" height="20" viewBox="0 0 23 20"><path d="M1 3h7l2 2h12v13H1z" fill="#f4d678"/><path d="M1 3h7l2 2H1z" fill="#e8b84a"/><path d="M1 7h21v11H1z" fill="#fbe49a"/><path d="M7 12h9v6h-2.500v-3h-4v3H7z" fill="#3a96e0"/></svg>
<div class="abs" style="left:545px;top:1078px;width:40px;height:2px;background:#76b9ed"></div>
<!-- wmp -->
<svg class="abs" style="left:602px;top:1050px" width="22" height="20" viewBox="0 0 22 20"><path d="M2 2l18-1v18L2 18z" fill="#5a9cc8"/><path d="M4 4l14-1v14L4 16z" fill="#8ec0e0"/><circle cx="10.500" cy="10" r="5.500" fill="#f07a1a" stroke="#fff" stroke-width="1"/><path d="M8.800 7l4.700 3-4.700 3z" fill="#fff"/></svg>
<!-- access -->
<svg class="abs" style="left:650px;top:1049px" width="23" height="21" viewBox="0 0 23 21"><path d="M3 3l14-2v19L3 18z" fill="#a8326e"/><path d="M6 5l10-1.500v14L6 16z" fill="#d878a8"/><circle cx="16" cy="8" r="4.500" fill="#f4d0e0" stroke="#fff"/><path d="M13 11l-6 6 2 1 5-5" fill="#f4d0e0"/></svg>
<!-- excel -->
<svg class="abs" style="left:699px;top:1049px" width="24" height="21" viewBox="0 0 24 21"><path d="M3 3l14-2v19L3 18z" fill="#3a8a3a"/><path d="M9 4h14v15H9z" fill="#e4f0e0" stroke="#5aa84a"/><path d="M9 9h14M9 14h14M14 4v15M19 4v15" stroke="#5aa84a"/><path d="M5 6l7 8M12 6l-7 8" stroke="#fff" stroke-width="2.200"/></svg>
<!-- store -->
<svg class="abs" style="left:749px;top:1048px" width="22" height="23" viewBox="0 0 22 23"><path d="M1 7l20-2v17L1 20z" fill="#fff"/><path d="M7 7V4a4 4 0 0 1 8 0v2" fill="none" stroke="#fff" stroke-width="1.600"/><path d="M6 10.500l4-0.400v3.400H6zM11 10l5-0.500v4h-5zM6 14.500h4V18l-4-0.400zM11 14.500h5v4l-5-0.500z" fill="#0a0a0a"/></svg>
<!-- word -->
<svg class="abs" style="left:797px;top:1049px" width="24" height="21" viewBox="0 0 24 21"><path d="M8 3h15v16H8z" fill="#e8eef8" stroke="#8aa8d8"/><path d="M11 7h10M11 10h10M11 13h10M11 16h10" stroke="#7a9ad0"/><path d="M2 3l13-2v19L2 18z" fill="#2a5cb0"/><path d="M4.500 7l2 7 2-6 2 6 2-7" fill="none" stroke="#fff" stroke-width="1.700"/></svg>
<div class="abs" style="left:790px;top:1078px;width:40px;height:2px;background:#76b9ed"></div>
<!-- outlook -->
<svg class="abs" style="left:846px;top:1049px" width="24" height="22" viewBox="0 0 24 22"><path d="M3 5l8-4 10 3v12L3 17z" fill="#f4c24a"/><path d="M6 4l12 1v10L6 14z" fill="#fbe6a8"/><path d="M2 8l10 6 10-6v12H2z" fill="#f0b030"/><circle cx="12" cy="14" r="4.500" fill="#f8d060" stroke="#c88a10"/><path d="M12 11.500v3l2 1" stroke="#8a5a00" fill="none"/></svg>
<div class="abs" style="left:839px;top:1078px;width:40px;height:2px;background:#76b9ed"></div>
<!-- powerpoint -->
<svg class="abs" style="left:895px;top:1049px" width="24" height="21" viewBox="0 0 24 21"><path d="M8 4h15v14H8z" fill="#fbe4dc" stroke="#e08a6a"/><path d="M2 3l13-2v19L2 18z" fill="#d8502a"/><rect x="10" y="7" width="11" height="9" fill="#e86a3a"/><circle cx="17" cy="11.500" r="2.800" fill="#fff"/><path d="M11.500 9.500h3M11.500 11.500h3M11.500 13.500h3" stroke="#fff"/></svg>
<!-- chrome -->
<svg class="abs" style="left:945px;top:1049px" width="23" height="23" viewBox="0 0 23 23"><circle cx="11.500" cy="11.500" r="11" fill="#dd4a3a"/><path d="M11.500 11.500L2 6A11 11 0 0 0 7 21.500z" fill="#2a9a4a"/><path d="M11.500 11.500L7 21.500A11 11 0 0 0 22.400 10z" fill="#f8cc2a"/><path d="M11.500 7h10A11 11 0 0 0 2 6z" fill="#dd4a3a"/><circle cx="11.500" cy="11.500" r="5" fill="#fff"/><circle cx="11.500" cy="11.500" r="4" fill="#4a8af0"/></svg>
<!-- qgis active -->
<div class="abs" style="left:982px;top:1040px;width:46px;height:40px;background:#2e2e2e"></div>
<div class="abs" style="left:1028px;top:1040px;width:2px;height:40px;background:#4a4a4a"></div>
<div class="abs" style="left:982px;top:1078px;width:46px;height:2px;background:#8cc4f0"></div>
<svg class="abs" style="left:994px;top:1048px" width="24" height="25" viewBox="0 0 24 25"><ellipse cx="11" cy="12" rx="7" ry="8.500" fill="none" stroke="#e8e84a" stroke-width="4"/><path d="M12 15l8 8" stroke="#e8e84a" stroke-width="4"/><path d="M2 23L21 1" stroke="#2a8a2a" stroke-width="2.600"/><path d="M21 1l-5 1.500 3 3z" fill="#2a8a2a"/></svg>
<!-- snipping -->
<svg class="abs" style="left:1041px;top:1048px" width="26" height="24" viewBox="0 0 26 24"><ellipse cx="11" cy="8" rx="9" ry="6.500" fill="#d8d8d8" stroke="#d83a3a" stroke-width="1.500"/><ellipse cx="11" cy="8" rx="5" ry="3.500" fill="#f4f4f4"/><path d="M9 10l10 10M19 8L9 21" stroke="#4a9ad8" stroke-width="2.200" fill="none"/><circle cx="20" cy="20.500" r="2.300" fill="none" stroke="#4a9ad8" stroke-width="1.600"/><circle cx="8" cy="21" r="2.300" fill="none" stroke="#4a9ad8" stroke-width="1.600"/></svg>
<div class="abs" style="left:1035px;top:1078px;width:40px;height:2px;background:#76b9ed"></div>
<!-- tray -->
<svg class="abs" style="left:1592px;top:1050px" width="16" height="20" viewBox="0 0 16 20"><rect x="3.500" y="4.500" width="7" height="12" rx="1" fill="none" stroke="#fff" stroke-width="1.200"/><rect x="5" y="1" width="4" height="3.500" fill="none" stroke="#fff"/><path d="M9 16l2 2 4-4" fill="none" stroke="#fff" stroke-width="1.200"/></svg>
<svg class="abs" style="left:1613px;top:1053px" width="20" height="13" viewBox="0 0 20 13"><path d="M5 12a4 4 0 0 1 0-7.500 5 5 0 0 1 9-1.500 4.500 4.500 0 0 1 2 9z" fill="#8a8a8a"/></svg>
<svg class="abs" style="left:1638px;top:1051px" width="18" height="18" viewBox="0 0 18 18"><circle cx="9" cy="9" r="7.500" fill="none" stroke="#e8e8e8" stroke-width="1.600" stroke-dasharray="34 13"/><circle cx="9" cy="9" r="4" fill="none" stroke="#e8e8e8" stroke-width="1.500" stroke-dasharray="18 8"/><circle cx="9" cy="9" r="1.500" fill="#e8e8e8"/></svg>
<svg class="abs" style="left:1660px;top:1050px" width="21" height="20" viewBox="0 0 21 20"><path d="M8 1h2l3 7h5a2 2 0 0 1 0 4h-5l-3 7H8l1.500-7H5l-2 2.500H1.500L2.500 10 1.500 5.500H3L5 8h4.500z" fill="none" stroke="#fff" stroke-width="1.200" stroke-linejoin="round"/></svg>
<svg class="abs" style="left:1686px;top:1050px" width="20" height="20" viewBox="0 0 20 20"><circle cx="9" cy="10" r="7.500" fill="#f0c020"/><circle cx="8" cy="9" r="4" fill="#fff8d0"/><path d="M12 3l5-3" stroke="#d8d8d8" stroke-width="1.500"/><circle cx="13" cy="14" r="5" fill="#2aa83a"/><path d="M10.500 14l2 2 3-4" fill="none" stroke="#fff" stroke-width="1.600"/></svg>
<svg class="abs" style="left:1710px;top:1051px" width="18" height="17" viewBox="0 0 18 17"><rect x="0.500" y="2" width="15" height="14" fill="#d8201a"/><path d="M3 13c3-2 5-6 5-9 0 3 3 6 6 7-4 0-8 1-11 2z" fill="none" stroke="#fff" stroke-width="1.200"/><circle cx="14.500" cy="3.500" r="3" fill="#f8d8d0" stroke="#d8201a"/></svg>
<svg class="abs" style="left:1733px;top:1053px" width="19" height="14" viewBox="0 0 19 14"><rect x="0.500" y="0.500" width="18" height="13" fill="#f4c84a" stroke="#d8a020"/><path d="M0.500 0.500l9 7 9-7M0.500 13.500l7-6M18.500 13.500l-7-6" fill="none" stroke="#fff8e0" stroke-width="1.200"/></svg>
<svg class="abs" style="left:1757px;top:1050px" width="20" height="20" viewBox="0 0 20 20"><rect x="1" y="1" width="15" height="16" rx="2" fill="#f0c890" stroke="#e0a060"/><rect x="5" y="5" width="14" height="13" rx="2" fill="#f8e0b8" stroke="#e0a060"/><circle cx="12" cy="11.500" r="4.500" fill="#f4b838" stroke="#c88a18"/><path d="M9.800 10l2.200 2.500 2.200-2.500" fill="none" stroke="#8a5a00" stroke-width="1.200"/></svg>
<svg class="abs" style="left:1782px;top:1051px" width="20" height="18" viewBox="0 0 20 18"><path d="M1 6.500h3l4-4v13l-4-4H1z" fill="none" stroke="#fff" stroke-width="1.200" stroke-linejoin="round"/><path d="M11 6a4 4 0 0 1 0 6" fill="none" stroke="#fff" stroke-width="1.100"/><path d="M13.500 4a7 7 0 0 1 0 10" fill="none" stroke="#9a9a9a" stroke-width="1.100"/><path d="M16 2a10 10 0 0 1 0 14" fill="none" stroke="#6a6a6a" stroke-width="1.100"/></svg>
<div class="t" style="left:1810px;top:1043px;font-size:12px;line-height:16px;color:#fff;letter-spacing:-0.200px">11:21 AM</div>
<div class="t" style="left:1810px;top:1060px;font-size:12px;line-height:16px;color:#fff;letter-spacing:-0.200px">12/9/2016</div>
<svg class="abs" style="left:1877px;top:1052px" width="19" height="18" viewBox="0 0 19 18"><path d="M1 1h17v12H10.500L8 16.500V13H1z" fill="none" stroke="#fff" stroke-width="1.300" stroke-linejoin="round"/></svg>

</body></html>
